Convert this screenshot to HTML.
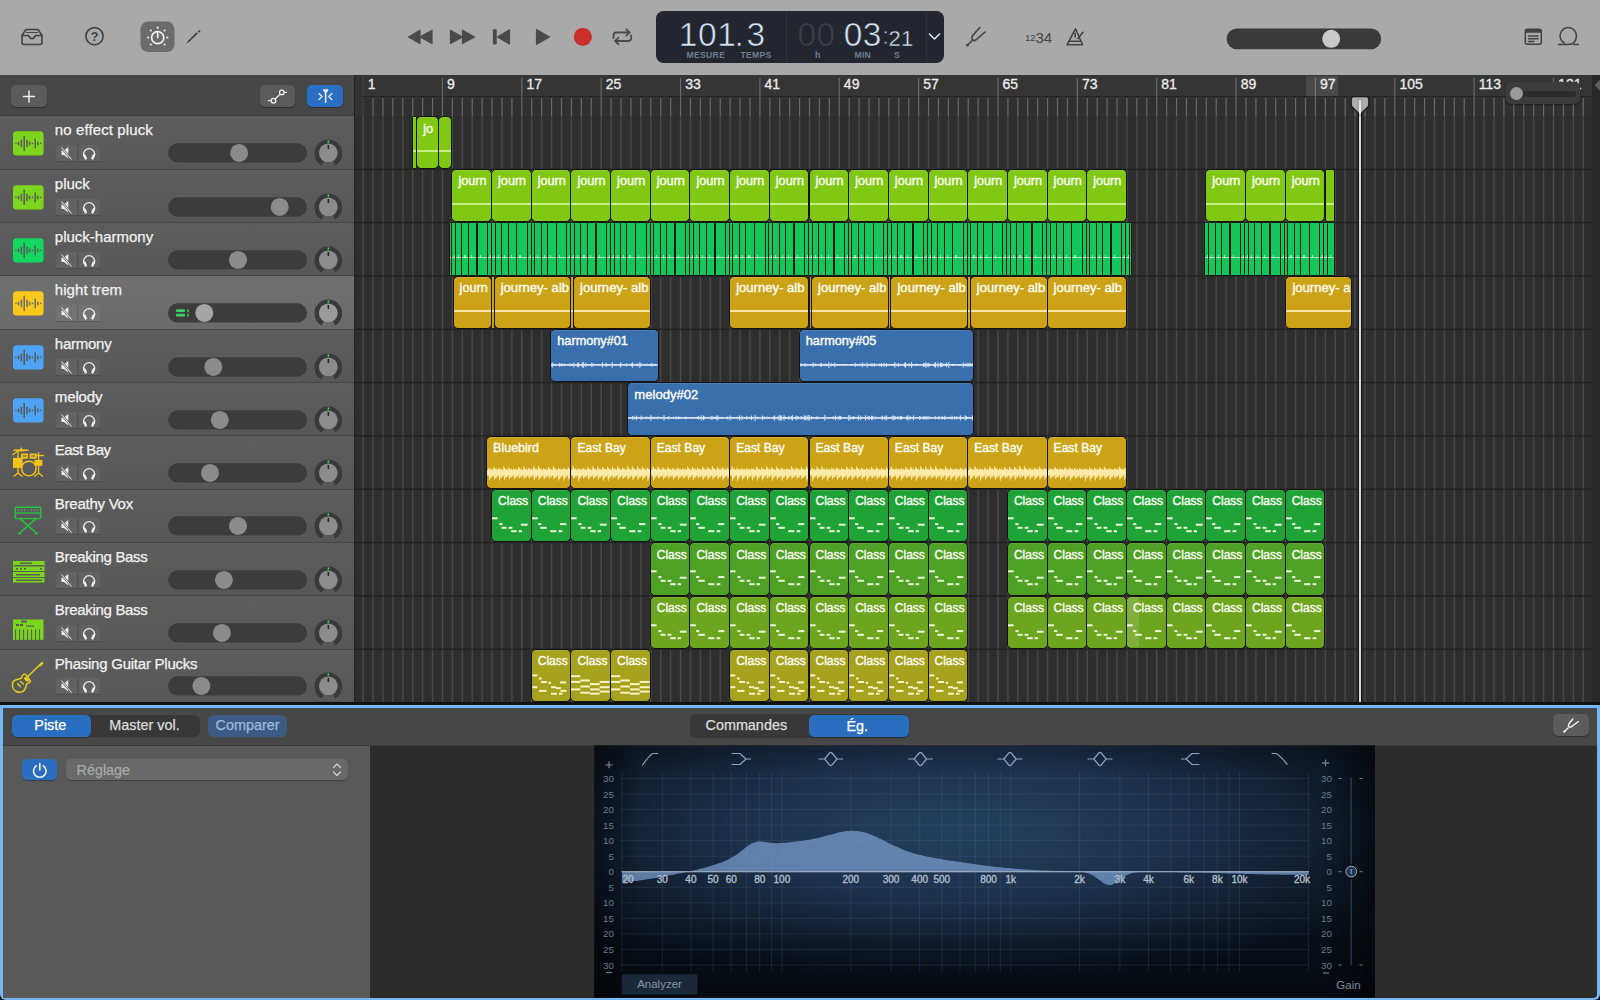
<!DOCTYPE html>
<html><head><meta charset="utf-8"><style>
html,body{margin:0;padding:0;width:1600px;height:1000px;overflow:hidden;background:#151515}
body{position:relative;font-family:"Liberation Sans", sans-serif}
svg text{font-family:"Liberation Sans",sans-serif}
</style></head><body>
<div style="position:absolute;left:0.00px;top:0.00px;width:1600.00px;height:75.00px;background:#a9a9a9"></div>
<svg style="position:absolute;left:0;top:0" width="1600" height="75" viewBox="0 0 1600 75">
<g fill="none" stroke="#424242" stroke-width="1.6" stroke-linecap="round" stroke-linejoin="round">
 <path d="M22 35.5 L26 29.5 H38 L42 35.5 V42.5 Q42 44.5 40 44.5 H24 Q22 44.5 22 42.5 Z"/>
 <path d="M22 35.5 H28.5 L30.5 38.5 H33.5 L35.5 35.5 H42"/>
 <path d="M26.5 32.5 H37.5" stroke-width="1.2"/>
 <circle cx="94.5" cy="36.2" r="8.6"/>
</g>
<text x="94.6" y="40.9" font-family="Liberation Sans" font-size="12.5" font-weight="700" fill="#424242" text-anchor="middle">?</text>
<rect x="140.5" y="21.5" width="34" height="30.5" rx="7.5" fill="#6b6b6b"/>
<g fill="none" stroke="#f2f2f2" stroke-width="1.7" stroke-linecap="round">
 <circle cx="157.7" cy="37.6" r="6.1"/>
 <path d="M157.7 31.8 V37.4"/>
</g>
<g fill="#f2f2f2">
 <circle cx="157.7" cy="27.7" r="1.1"/><circle cx="164.6" cy="30.5" r="1.1"/><circle cx="167.3" cy="37.5" r="1.1"/><circle cx="164.6" cy="44.5" r="1.1"/>
 <circle cx="150.8" cy="30.5" r="1.1"/><circle cx="148.1" cy="37.5" r="1.1"/><circle cx="150.8" cy="44.5" r="1.1"/>
</g>
<path d="M186.2 43.8 L188.2 40.6 L196.6 32.2 L197.8 33.4 L189.4 41.8 Z" fill="#424242"/>
<path d="M197.9 31.3 L198.6 30.6 Q199.4 29.9 200.1 30.6 Q200.8 31.3 200.1 32 L199.3 32.7 Z" fill="#424242"/>
<!-- transport -->
<g fill="#4a4a4a" stroke="#4a4a4a" stroke-width="1.2" stroke-linejoin="round">
 <path d="M408.5 36.9 L420 30.2 V43.6 Z"/><path d="M420 36.9 L432 30.2 V43.6 Z"/>
 <path d="M450.5 30.2 L462.5 36.9 L450.5 43.6 Z"/><path d="M462.5 30.2 L474.5 36.9 L462.5 43.6 Z"/>
 <rect x="493.5" y="29.8" width="2.6" height="14" rx="0.6"/><path d="M497.5 36.9 L509.5 29.8 V44 Z"/>
 <path d="M536.5 29.6 L549.5 36.9 L536.5 44.2 Z"/>
</g>
<circle cx="582.8" cy="36.9" r="9.1" fill="#c9302b"/>
<g fill="none" stroke="#4a4a4a" stroke-width="1.8" stroke-linecap="round" stroke-linejoin="round">
 <path d="M613.5 38 V35.5 Q613.5 32.5 616.5 32.5 H629.5"/><path d="M626.3 29.3 L629.5 32.5 L626.3 35.7"/>
 <path d="M631.2 35.5 V38 Q631.2 41 628.2 41 H615.2"/><path d="M618.4 37.8 L615.2 41 L618.4 44.2"/>
</g>
<!-- right icons -->
<g fill="none" stroke="#424242" stroke-width="1.6" stroke-linecap="round" stroke-linejoin="round">
 <path d="M967.5 45 L972 40.8"/>
 <path d="M979.8 27.5 L972.5 35.8 Q971.5 37.2 972.2 39.2 Q973.4 41.5 975.8 40 L985 32"/>
 <path d="M1067 44.8 L1075.5 28.8 L1082.5 44.8 Z"/>
 <path d="M1069 41.2 H1080.8"/>
 <path d="M1075.2 37 V33.5"/><path d="M1078 38.5 L1083 32.3"/>
</g>
<circle cx="967.3" cy="45.2" r="1.4" fill="#424242"/>
<text x="1025" y="40.5" font-family="Liberation Sans" font-size="9.5" fill="#424242">12</text>
<text x="1035.5" y="42.7" font-family="Liberation Sans" font-size="15" fill="#424242">34</text>
<rect x="1226.6" y="28.4" width="154.6" height="20.8" rx="10.4" fill="#3a3a3a"/>
<circle cx="1331.2" cy="38.8" r="9" fill="#c9c9c9"/>
<g fill="none" stroke="#424242" stroke-width="1.5" stroke-linejoin="round" stroke-linecap="round">
 <rect x="1525.3" y="29.2" width="16" height="15" rx="2"/>
 <path d="M1528.5 36 H1538 M1528.5 38.8 H1538 M1528.5 41.5 H1534"/>
 <path d="M1558.6 44.6 H1567.5 Q1576.4 44.6 1576.4 35.8 A8.2 8.2 0 1 0 1564.3 43"/>
 <path d="M1573.6 44.6 H1578.4"/>
</g>
<rect x="1525.3" y="29.2" width="16" height="3.5" rx="1" fill="#424242"/>
</svg>
<div style="position:absolute;left:656.40px;top:10.80px;width:287.40px;height:51.90px;background:#23262f;border-radius:7.5px"></div>
<div style="position:absolute;left:786.20px;top:12.00px;width:1.00px;height:49.50px;background:#2f323b"></div>
<div style="position:absolute;left:925.50px;top:12.00px;width:1.00px;height:49.50px;background:#2f323b"></div>
<svg style="position:absolute;left:0;top:0" width="1600" height="75"><text x="678.8" y="45.8" font-family="Liberation Sans" font-size="33.5" letter-spacing="0.6" fill="#d4e5f7" stroke="#23262f" stroke-width="0.6">101</text><text x="734.5" y="45.8" font-family="Liberation Sans" font-size="33.5" letter-spacing="0" fill="#d4e5f7" stroke="#23262f" stroke-width="0.6">.</text><text x="746.5" y="45.8" font-family="Liberation Sans" font-size="33.5" letter-spacing="0" fill="#d4e5f7" stroke="#23262f" stroke-width="0.6">3</text><text x="797.5" y="45.8" font-family="Liberation Sans" font-size="33.5" letter-spacing="0.3" fill="#3b3f4a" stroke="#23262f" stroke-width="0.6">00</text><text x="837.8" y="43.5" font-family="Liberation Sans" font-size="24" letter-spacing="0" fill="#3b3f4a" stroke="#23262f" stroke-width="0.8">:</text><text x="843.8" y="45.8" font-family="Liberation Sans" font-size="33.5" letter-spacing="0.3" fill="#d4e5f7" stroke="#23262f" stroke-width="0.6">03</text><text x="882.3" y="43.5" font-family="Liberation Sans" font-size="24" letter-spacing="0" fill="#d4e5f7" stroke="#23262f" stroke-width="0.8">:</text><text x="888.5" y="45.8" font-family="Liberation Sans" font-size="22" letter-spacing="0.2" fill="#d4e5f7" stroke="#23262f" stroke-width="0.4">21</text></svg>
<div style="position:absolute;left:686.60px;top:50.82px;font-size:8.6px;line-height:9.89px;height:9.89px;color:#6e7d92;font-weight:700;white-space:nowrap;letter-spacing:0.3px">MESURE</div>
<div style="position:absolute;left:740.50px;top:50.82px;font-size:8.6px;line-height:9.89px;height:9.89px;color:#6e7d92;font-weight:700;white-space:nowrap;letter-spacing:0.3px">TEMPS</div>
<div style="position:absolute;left:815.00px;top:50.45px;font-size:9px;line-height:10.35px;height:10.35px;color:#6e7d92;font-weight:700;white-space:nowrap;">h</div>
<div style="position:absolute;left:854.60px;top:50.82px;font-size:8.6px;line-height:9.89px;height:9.89px;color:#6e7d92;font-weight:700;white-space:nowrap;letter-spacing:0.2px">MIN</div>
<div style="position:absolute;left:894.00px;top:50.82px;font-size:8.6px;line-height:9.89px;height:9.89px;color:#6e7d92;font-weight:700;white-space:nowrap;">S</div>
<svg style="position:absolute;left:928px;top:32px" width="14" height="10"><path d="M1.5 2 L6.5 7 L11.5 2" fill="none" stroke="#d4e5f7" stroke-width="1.6" stroke-linecap="round" stroke-linejoin="round"/></svg>
<div style="position:absolute;left:0.00px;top:75.00px;width:354.20px;height:41.30px;background:#474747"></div>
<div style="position:absolute;left:11.00px;top:84.60px;width:35.60px;height:22.20px;background:#5b5b5b;border-radius:5px;box-shadow:0 1px 1px rgba(0,0,0,0.35)"></div>
<svg style="position:absolute;left:11px;top:84.6px" width="36" height="22"><path d="M12.5 11.4 H23.5 M18 5.9 V16.9" stroke="#f0f0f0" stroke-width="1.5" stroke-linecap="round"/></svg>
<div style="position:absolute;left:260.30px;top:84.60px;width:35.20px;height:22.20px;background:#5b5b5b;border-radius:5px;box-shadow:0 1px 1px rgba(0,0,0,0.35)"></div>
<svg style="position:absolute;left:260.3px;top:84.6px" width="36" height="22"><g fill="none" stroke="#f0f0f0" stroke-width="1.3">
<path d="M8 15.7 H10.9 M24.3 7.4 H27"/><circle cx="13.5" cy="15.7" r="2.3"/><circle cx="21.8" cy="7.4" r="2.3"/><path d="M15.1 14 L20.2 9.1"/></g></svg>
<div style="position:absolute;left:306.90px;top:84.60px;width:36.10px;height:22.20px;background:#2a6fc1;border-radius:5px;box-shadow:0 1px 1px rgba(0,0,0,0.35)"></div>
<svg style="position:absolute;left:306.9px;top:84.6px" width="36" height="22"><g fill="none" stroke="#f0f0f0" stroke-width="1.3" stroke-linecap="round">
<path d="M12 8.5 L15 11.5 L12 14.5 M24.8 8.5 L21.8 11.5 L24.8 14.5"/></g>
<path d="M16.2 4.3 H21.2 V5.8 L19.4 7.8 V18 H17.9 V7.8 L16.2 5.8 Z" fill="#f0f0f0"/></svg>
<div style="position:absolute;left:354.20px;top:75.00px;width:1245.80px;height:21.00px;background:#353535"></div>
<div style="position:absolute;left:354.20px;top:96.00px;width:1245.80px;height:1.20px;background:#252525"></div>
<div style="position:absolute;left:354.20px;top:97.20px;width:1245.80px;height:19.10px;background:#303030"></div>
<div style="position:absolute;left:354.20px;top:115.60px;width:1245.80px;height:1.00px;background:#242424"></div>
<div style="position:absolute;left:354.20px;top:75.00px;width:8.00px;height:41.30px;background:#323232"></div>
<svg style="position:absolute;left:0;top:0" width="1600" height="117">
<rect x="362.60" y="77" width="1" height="1" fill="#585858"/>
<rect x="362.60" y="79" width="1" height="1" fill="#585858"/>
<rect x="362.60" y="81" width="1" height="1" fill="#585858"/>
<rect x="362.60" y="83" width="1" height="1" fill="#585858"/>
<rect x="362.60" y="85" width="1" height="1" fill="#585858"/>
<rect x="362.60" y="87" width="1" height="1" fill="#585858"/>
<rect x="362.60" y="89" width="1" height="1" fill="#585858"/>
<rect x="362.60" y="91" width="1" height="1" fill="#585858"/>
<rect x="362.60" y="93" width="1" height="1" fill="#585858"/>
<rect x="362.60" y="95" width="1" height="1" fill="#585858"/>
<rect x="362.60" y="97" width="1" height="1" fill="#585858"/>
<rect x="362.60" y="99" width="1" height="1" fill="#585858"/>
<rect x="362.60" y="101" width="1" height="1" fill="#585858"/>
<rect x="362.60" y="103" width="1" height="1" fill="#585858"/>
<rect x="362.60" y="105" width="1" height="1" fill="#585858"/>
<rect x="362.60" y="107" width="1" height="1" fill="#585858"/>
<rect x="362.60" y="109" width="1" height="1" fill="#585858"/>
<rect x="362.60" y="111" width="1" height="1" fill="#585858"/>
<rect x="362.60" y="113" width="1" height="1" fill="#585858"/>
<rect x="362.60" y="115" width="1" height="1" fill="#585858"/>
<text x="367.70" y="89.3" font-family="Liberation Sans" font-size="14" fill="#ececec" stroke="#ececec" stroke-width="0.3">1</text>
<rect x="372.42" y="98" width="1.2" height="18" fill="#6a6a6a"/>
<rect x="382.34" y="98" width="1.2" height="18" fill="#6a6a6a"/>
<rect x="392.26" y="98" width="1.2" height="18" fill="#6a6a6a"/>
<rect x="402.18" y="98" width="1.2" height="18" fill="#6a6a6a"/>
<rect x="412.10" y="98" width="1.2" height="18" fill="#6a6a6a"/>
<rect x="422.02" y="98" width="1.2" height="18" fill="#6a6a6a"/>
<rect x="431.94" y="98" width="1.2" height="18" fill="#6a6a6a"/>
<rect x="441.86" y="78" width="1.2" height="38.5" fill="#6a6a6a"/>
<text x="447.06" y="89.3" font-family="Liberation Sans" font-size="14" fill="#ececec" stroke="#ececec" stroke-width="0.3">9</text>
<rect x="451.78" y="98" width="1.2" height="18" fill="#6a6a6a"/>
<rect x="461.70" y="98" width="1.2" height="18" fill="#6a6a6a"/>
<rect x="471.62" y="98" width="1.2" height="18" fill="#6a6a6a"/>
<rect x="481.54" y="98" width="1.2" height="18" fill="#6a6a6a"/>
<rect x="491.46" y="98" width="1.2" height="18" fill="#6a6a6a"/>
<rect x="501.38" y="98" width="1.2" height="18" fill="#6a6a6a"/>
<rect x="511.30" y="98" width="1.2" height="18" fill="#6a6a6a"/>
<rect x="521.22" y="78" width="1.2" height="38.5" fill="#6a6a6a"/>
<text x="526.42" y="89.3" font-family="Liberation Sans" font-size="14" fill="#ececec" stroke="#ececec" stroke-width="0.3">17</text>
<rect x="531.14" y="98" width="1.2" height="18" fill="#6a6a6a"/>
<rect x="541.06" y="98" width="1.2" height="18" fill="#6a6a6a"/>
<rect x="550.98" y="98" width="1.2" height="18" fill="#6a6a6a"/>
<rect x="560.90" y="98" width="1.2" height="18" fill="#6a6a6a"/>
<rect x="570.82" y="98" width="1.2" height="18" fill="#6a6a6a"/>
<rect x="580.74" y="98" width="1.2" height="18" fill="#6a6a6a"/>
<rect x="590.66" y="98" width="1.2" height="18" fill="#6a6a6a"/>
<rect x="600.58" y="78" width="1.2" height="38.5" fill="#6a6a6a"/>
<text x="605.78" y="89.3" font-family="Liberation Sans" font-size="14" fill="#ececec" stroke="#ececec" stroke-width="0.3">25</text>
<rect x="610.50" y="98" width="1.2" height="18" fill="#6a6a6a"/>
<rect x="620.42" y="98" width="1.2" height="18" fill="#6a6a6a"/>
<rect x="630.34" y="98" width="1.2" height="18" fill="#6a6a6a"/>
<rect x="640.26" y="98" width="1.2" height="18" fill="#6a6a6a"/>
<rect x="650.18" y="98" width="1.2" height="18" fill="#6a6a6a"/>
<rect x="660.10" y="98" width="1.2" height="18" fill="#6a6a6a"/>
<rect x="670.02" y="98" width="1.2" height="18" fill="#6a6a6a"/>
<rect x="679.94" y="78" width="1.2" height="38.5" fill="#6a6a6a"/>
<text x="685.14" y="89.3" font-family="Liberation Sans" font-size="14" fill="#ececec" stroke="#ececec" stroke-width="0.3">33</text>
<rect x="689.86" y="98" width="1.2" height="18" fill="#6a6a6a"/>
<rect x="699.78" y="98" width="1.2" height="18" fill="#6a6a6a"/>
<rect x="709.70" y="98" width="1.2" height="18" fill="#6a6a6a"/>
<rect x="719.62" y="98" width="1.2" height="18" fill="#6a6a6a"/>
<rect x="729.54" y="98" width="1.2" height="18" fill="#6a6a6a"/>
<rect x="739.46" y="98" width="1.2" height="18" fill="#6a6a6a"/>
<rect x="749.38" y="98" width="1.2" height="18" fill="#6a6a6a"/>
<rect x="759.30" y="78" width="1.2" height="38.5" fill="#6a6a6a"/>
<text x="764.50" y="89.3" font-family="Liberation Sans" font-size="14" fill="#ececec" stroke="#ececec" stroke-width="0.3">41</text>
<rect x="769.22" y="98" width="1.2" height="18" fill="#6a6a6a"/>
<rect x="779.14" y="98" width="1.2" height="18" fill="#6a6a6a"/>
<rect x="789.06" y="98" width="1.2" height="18" fill="#6a6a6a"/>
<rect x="798.98" y="98" width="1.2" height="18" fill="#6a6a6a"/>
<rect x="808.90" y="98" width="1.2" height="18" fill="#6a6a6a"/>
<rect x="818.82" y="98" width="1.2" height="18" fill="#6a6a6a"/>
<rect x="828.74" y="98" width="1.2" height="18" fill="#6a6a6a"/>
<rect x="838.66" y="78" width="1.2" height="38.5" fill="#6a6a6a"/>
<text x="843.86" y="89.3" font-family="Liberation Sans" font-size="14" fill="#ececec" stroke="#ececec" stroke-width="0.3">49</text>
<rect x="848.58" y="98" width="1.2" height="18" fill="#6a6a6a"/>
<rect x="858.50" y="98" width="1.2" height="18" fill="#6a6a6a"/>
<rect x="868.42" y="98" width="1.2" height="18" fill="#6a6a6a"/>
<rect x="878.34" y="98" width="1.2" height="18" fill="#6a6a6a"/>
<rect x="888.26" y="98" width="1.2" height="18" fill="#6a6a6a"/>
<rect x="898.18" y="98" width="1.2" height="18" fill="#6a6a6a"/>
<rect x="908.10" y="98" width="1.2" height="18" fill="#6a6a6a"/>
<rect x="918.02" y="78" width="1.2" height="38.5" fill="#6a6a6a"/>
<text x="923.22" y="89.3" font-family="Liberation Sans" font-size="14" fill="#ececec" stroke="#ececec" stroke-width="0.3">57</text>
<rect x="927.94" y="98" width="1.2" height="18" fill="#6a6a6a"/>
<rect x="937.86" y="98" width="1.2" height="18" fill="#6a6a6a"/>
<rect x="947.78" y="98" width="1.2" height="18" fill="#6a6a6a"/>
<rect x="957.70" y="98" width="1.2" height="18" fill="#6a6a6a"/>
<rect x="967.62" y="98" width="1.2" height="18" fill="#6a6a6a"/>
<rect x="977.54" y="98" width="1.2" height="18" fill="#6a6a6a"/>
<rect x="987.46" y="98" width="1.2" height="18" fill="#6a6a6a"/>
<rect x="997.38" y="78" width="1.2" height="38.5" fill="#6a6a6a"/>
<text x="1002.58" y="89.3" font-family="Liberation Sans" font-size="14" fill="#ececec" stroke="#ececec" stroke-width="0.3">65</text>
<rect x="1007.30" y="98" width="1.2" height="18" fill="#6a6a6a"/>
<rect x="1017.22" y="98" width="1.2" height="18" fill="#6a6a6a"/>
<rect x="1027.14" y="98" width="1.2" height="18" fill="#6a6a6a"/>
<rect x="1037.06" y="98" width="1.2" height="18" fill="#6a6a6a"/>
<rect x="1046.98" y="98" width="1.2" height="18" fill="#6a6a6a"/>
<rect x="1056.90" y="98" width="1.2" height="18" fill="#6a6a6a"/>
<rect x="1066.82" y="98" width="1.2" height="18" fill="#6a6a6a"/>
<rect x="1076.74" y="78" width="1.2" height="38.5" fill="#6a6a6a"/>
<text x="1081.94" y="89.3" font-family="Liberation Sans" font-size="14" fill="#ececec" stroke="#ececec" stroke-width="0.3">73</text>
<rect x="1086.66" y="98" width="1.2" height="18" fill="#6a6a6a"/>
<rect x="1096.58" y="98" width="1.2" height="18" fill="#6a6a6a"/>
<rect x="1106.50" y="98" width="1.2" height="18" fill="#6a6a6a"/>
<rect x="1116.42" y="98" width="1.2" height="18" fill="#6a6a6a"/>
<rect x="1126.34" y="98" width="1.2" height="18" fill="#6a6a6a"/>
<rect x="1136.26" y="98" width="1.2" height="18" fill="#6a6a6a"/>
<rect x="1146.18" y="98" width="1.2" height="18" fill="#6a6a6a"/>
<rect x="1156.10" y="78" width="1.2" height="38.5" fill="#6a6a6a"/>
<text x="1161.30" y="89.3" font-family="Liberation Sans" font-size="14" fill="#ececec" stroke="#ececec" stroke-width="0.3">81</text>
<rect x="1166.02" y="98" width="1.2" height="18" fill="#6a6a6a"/>
<rect x="1175.94" y="98" width="1.2" height="18" fill="#6a6a6a"/>
<rect x="1185.86" y="98" width="1.2" height="18" fill="#6a6a6a"/>
<rect x="1195.78" y="98" width="1.2" height="18" fill="#6a6a6a"/>
<rect x="1205.70" y="98" width="1.2" height="18" fill="#6a6a6a"/>
<rect x="1215.62" y="98" width="1.2" height="18" fill="#6a6a6a"/>
<rect x="1225.54" y="98" width="1.2" height="18" fill="#6a6a6a"/>
<rect x="1235.46" y="78" width="1.2" height="38.5" fill="#6a6a6a"/>
<text x="1240.66" y="89.3" font-family="Liberation Sans" font-size="14" fill="#ececec" stroke="#ececec" stroke-width="0.3">89</text>
<rect x="1245.38" y="98" width="1.2" height="18" fill="#6a6a6a"/>
<rect x="1255.30" y="98" width="1.2" height="18" fill="#6a6a6a"/>
<rect x="1265.22" y="98" width="1.2" height="18" fill="#6a6a6a"/>
<rect x="1275.14" y="98" width="1.2" height="18" fill="#6a6a6a"/>
<rect x="1285.06" y="98" width="1.2" height="18" fill="#6a6a6a"/>
<rect x="1294.98" y="98" width="1.2" height="18" fill="#6a6a6a"/>
<rect x="1304.90" y="98" width="1.2" height="18" fill="#6a6a6a"/>
<rect x="1314.82" y="78" width="1.2" height="38.5" fill="#6a6a6a"/>
<text x="1320.02" y="89.3" font-family="Liberation Sans" font-size="14" fill="#ececec" stroke="#ececec" stroke-width="0.3">97</text>
<rect x="1324.74" y="98" width="1.2" height="18" fill="#6a6a6a"/>
<rect x="1334.66" y="98" width="1.2" height="18" fill="#6a6a6a"/>
<rect x="1344.58" y="98" width="1.2" height="18" fill="#6a6a6a"/>
<rect x="1354.50" y="98" width="1.2" height="18" fill="#6a6a6a"/>
<rect x="1364.42" y="98" width="1.2" height="18" fill="#6a6a6a"/>
<rect x="1374.34" y="98" width="1.2" height="18" fill="#6a6a6a"/>
<rect x="1384.26" y="98" width="1.2" height="18" fill="#6a6a6a"/>
<rect x="1394.18" y="78" width="1.2" height="38.5" fill="#6a6a6a"/>
<text x="1399.38" y="89.3" font-family="Liberation Sans" font-size="14" fill="#ececec" stroke="#ececec" stroke-width="0.3">105</text>
<rect x="1404.10" y="98" width="1.2" height="18" fill="#6a6a6a"/>
<rect x="1414.02" y="98" width="1.2" height="18" fill="#6a6a6a"/>
<rect x="1423.94" y="98" width="1.2" height="18" fill="#6a6a6a"/>
<rect x="1433.86" y="98" width="1.2" height="18" fill="#6a6a6a"/>
<rect x="1443.78" y="98" width="1.2" height="18" fill="#6a6a6a"/>
<rect x="1453.70" y="98" width="1.2" height="18" fill="#6a6a6a"/>
<rect x="1463.62" y="98" width="1.2" height="18" fill="#6a6a6a"/>
<rect x="1473.54" y="78" width="1.2" height="38.5" fill="#6a6a6a"/>
<text x="1478.74" y="89.3" font-family="Liberation Sans" font-size="14" fill="#ececec" stroke="#ececec" stroke-width="0.3">113</text>
<rect x="1483.46" y="98" width="1.2" height="18" fill="#6a6a6a"/>
<rect x="1493.38" y="98" width="1.2" height="18" fill="#6a6a6a"/>
<rect x="1503.30" y="98" width="1.2" height="18" fill="#6a6a6a"/>
<rect x="1513.22" y="98" width="1.2" height="18" fill="#6a6a6a"/>
<rect x="1523.14" y="98" width="1.2" height="18" fill="#6a6a6a"/>
<rect x="1533.06" y="98" width="1.2" height="18" fill="#6a6a6a"/>
<rect x="1542.98" y="98" width="1.2" height="18" fill="#6a6a6a"/>
<rect x="1552.90" y="78" width="1.2" height="38.5" fill="#6a6a6a"/>
<text x="1558.10" y="89.3" font-family="Liberation Sans" font-size="14" fill="#ececec" stroke="#ececec" stroke-width="0.3">121</text>
<rect x="1562.82" y="98" width="1.2" height="18" fill="#6a6a6a"/>
<rect x="1572.74" y="98" width="1.2" height="18" fill="#6a6a6a"/>
<rect x="1582.66" y="98" width="1.2" height="18" fill="#6a6a6a"/>
</svg>
<div style="position:absolute;left:1305.92px;top:76.00px;width:32.50px;height:20.00px;background:rgba(255,255,255,0.10)"></div>
<div style="position:absolute;left:1506.00px;top:82.30px;width:73.80px;height:21.70px;background:#3c3c3c;border-radius:5px;box-shadow:0 1px 2px rgba(0,0,0,0.4)"></div>
<div style="position:absolute;left:1512.00px;top:91.00px;width:63.80px;height:5.50px;background:#2c2c2c;border-radius:3px"></div>
<div style="position:absolute;left:1509.80px;top:87.00px;width:13.00px;height:13.00px;background:#999;border-radius:50%"></div>
<div style="position:absolute;left:1592.20px;top:75.00px;width:7.80px;height:627.50px;background:#282828"></div>
<svg style="position:absolute;left:1590px;top:78px" width="10" height="14"><path d="M4.5 7 L10 1.5 V12.5 Z" fill="#5e5e5e"/></svg>
<div style="position:absolute;left:354.20px;top:115.90px;width:1238.00px;height:586.60px;background:#2e2e2e"></div>
<svg style="position:absolute;left:0;top:115.93px" width="1592" height="587">
<rect x="362.35" y="0" width="1.5" height="586.2" fill="#4a4a4a"/>
<rect x="372.27" y="0" width="1.5" height="586.2" fill="#464646"/>
<rect x="382.19" y="0" width="1.5" height="586.2" fill="#464646"/>
<rect x="392.11" y="0" width="1.5" height="586.2" fill="#464646"/>
<rect x="402.03" y="0" width="1.5" height="586.2" fill="#464646"/>
<rect x="411.95" y="0" width="1.5" height="586.2" fill="#464646"/>
<rect x="421.87" y="0" width="1.5" height="586.2" fill="#464646"/>
<rect x="431.79" y="0" width="1.5" height="586.2" fill="#464646"/>
<rect x="441.71" y="0" width="1.5" height="586.2" fill="#4a4a4a"/>
<rect x="451.63" y="0" width="1.5" height="586.2" fill="#464646"/>
<rect x="461.55" y="0" width="1.5" height="586.2" fill="#464646"/>
<rect x="471.47" y="0" width="1.5" height="586.2" fill="#464646"/>
<rect x="481.39" y="0" width="1.5" height="586.2" fill="#464646"/>
<rect x="491.31" y="0" width="1.5" height="586.2" fill="#464646"/>
<rect x="501.23" y="0" width="1.5" height="586.2" fill="#464646"/>
<rect x="511.15" y="0" width="1.5" height="586.2" fill="#464646"/>
<rect x="521.07" y="0" width="1.5" height="586.2" fill="#4a4a4a"/>
<rect x="530.99" y="0" width="1.5" height="586.2" fill="#464646"/>
<rect x="540.91" y="0" width="1.5" height="586.2" fill="#464646"/>
<rect x="550.83" y="0" width="1.5" height="586.2" fill="#464646"/>
<rect x="560.75" y="0" width="1.5" height="586.2" fill="#464646"/>
<rect x="570.67" y="0" width="1.5" height="586.2" fill="#464646"/>
<rect x="580.59" y="0" width="1.5" height="586.2" fill="#464646"/>
<rect x="590.51" y="0" width="1.5" height="586.2" fill="#464646"/>
<rect x="600.43" y="0" width="1.5" height="586.2" fill="#4a4a4a"/>
<rect x="610.35" y="0" width="1.5" height="586.2" fill="#464646"/>
<rect x="620.27" y="0" width="1.5" height="586.2" fill="#464646"/>
<rect x="630.19" y="0" width="1.5" height="586.2" fill="#464646"/>
<rect x="640.11" y="0" width="1.5" height="586.2" fill="#464646"/>
<rect x="650.03" y="0" width="1.5" height="586.2" fill="#464646"/>
<rect x="659.95" y="0" width="1.5" height="586.2" fill="#464646"/>
<rect x="669.87" y="0" width="1.5" height="586.2" fill="#464646"/>
<rect x="679.79" y="0" width="1.5" height="586.2" fill="#4a4a4a"/>
<rect x="689.71" y="0" width="1.5" height="586.2" fill="#464646"/>
<rect x="699.63" y="0" width="1.5" height="586.2" fill="#464646"/>
<rect x="709.55" y="0" width="1.5" height="586.2" fill="#464646"/>
<rect x="719.47" y="0" width="1.5" height="586.2" fill="#464646"/>
<rect x="729.39" y="0" width="1.5" height="586.2" fill="#464646"/>
<rect x="739.31" y="0" width="1.5" height="586.2" fill="#464646"/>
<rect x="749.23" y="0" width="1.5" height="586.2" fill="#464646"/>
<rect x="759.15" y="0" width="1.5" height="586.2" fill="#4a4a4a"/>
<rect x="769.07" y="0" width="1.5" height="586.2" fill="#464646"/>
<rect x="778.99" y="0" width="1.5" height="586.2" fill="#464646"/>
<rect x="788.91" y="0" width="1.5" height="586.2" fill="#464646"/>
<rect x="798.83" y="0" width="1.5" height="586.2" fill="#464646"/>
<rect x="808.75" y="0" width="1.5" height="586.2" fill="#464646"/>
<rect x="818.67" y="0" width="1.5" height="586.2" fill="#464646"/>
<rect x="828.59" y="0" width="1.5" height="586.2" fill="#464646"/>
<rect x="838.51" y="0" width="1.5" height="586.2" fill="#4a4a4a"/>
<rect x="848.43" y="0" width="1.5" height="586.2" fill="#464646"/>
<rect x="858.35" y="0" width="1.5" height="586.2" fill="#464646"/>
<rect x="868.27" y="0" width="1.5" height="586.2" fill="#464646"/>
<rect x="878.19" y="0" width="1.5" height="586.2" fill="#464646"/>
<rect x="888.11" y="0" width="1.5" height="586.2" fill="#464646"/>
<rect x="898.03" y="0" width="1.5" height="586.2" fill="#464646"/>
<rect x="907.95" y="0" width="1.5" height="586.2" fill="#464646"/>
<rect x="917.87" y="0" width="1.5" height="586.2" fill="#4a4a4a"/>
<rect x="927.79" y="0" width="1.5" height="586.2" fill="#464646"/>
<rect x="937.71" y="0" width="1.5" height="586.2" fill="#464646"/>
<rect x="947.63" y="0" width="1.5" height="586.2" fill="#464646"/>
<rect x="957.55" y="0" width="1.5" height="586.2" fill="#464646"/>
<rect x="967.47" y="0" width="1.5" height="586.2" fill="#464646"/>
<rect x="977.39" y="0" width="1.5" height="586.2" fill="#464646"/>
<rect x="987.31" y="0" width="1.5" height="586.2" fill="#464646"/>
<rect x="997.23" y="0" width="1.5" height="586.2" fill="#4a4a4a"/>
<rect x="1007.15" y="0" width="1.5" height="586.2" fill="#464646"/>
<rect x="1017.07" y="0" width="1.5" height="586.2" fill="#464646"/>
<rect x="1026.99" y="0" width="1.5" height="586.2" fill="#464646"/>
<rect x="1036.91" y="0" width="1.5" height="586.2" fill="#464646"/>
<rect x="1046.83" y="0" width="1.5" height="586.2" fill="#464646"/>
<rect x="1056.75" y="0" width="1.5" height="586.2" fill="#464646"/>
<rect x="1066.67" y="0" width="1.5" height="586.2" fill="#464646"/>
<rect x="1076.59" y="0" width="1.5" height="586.2" fill="#4a4a4a"/>
<rect x="1086.51" y="0" width="1.5" height="586.2" fill="#464646"/>
<rect x="1096.43" y="0" width="1.5" height="586.2" fill="#464646"/>
<rect x="1106.35" y="0" width="1.5" height="586.2" fill="#464646"/>
<rect x="1116.27" y="0" width="1.5" height="586.2" fill="#464646"/>
<rect x="1126.19" y="0" width="1.5" height="586.2" fill="#464646"/>
<rect x="1136.11" y="0" width="1.5" height="586.2" fill="#464646"/>
<rect x="1146.03" y="0" width="1.5" height="586.2" fill="#464646"/>
<rect x="1155.95" y="0" width="1.5" height="586.2" fill="#4a4a4a"/>
<rect x="1165.87" y="0" width="1.5" height="586.2" fill="#464646"/>
<rect x="1175.79" y="0" width="1.5" height="586.2" fill="#464646"/>
<rect x="1185.71" y="0" width="1.5" height="586.2" fill="#464646"/>
<rect x="1195.63" y="0" width="1.5" height="586.2" fill="#464646"/>
<rect x="1205.55" y="0" width="1.5" height="586.2" fill="#464646"/>
<rect x="1215.47" y="0" width="1.5" height="586.2" fill="#464646"/>
<rect x="1225.39" y="0" width="1.5" height="586.2" fill="#464646"/>
<rect x="1235.31" y="0" width="1.5" height="586.2" fill="#4a4a4a"/>
<rect x="1245.23" y="0" width="1.5" height="586.2" fill="#464646"/>
<rect x="1255.15" y="0" width="1.5" height="586.2" fill="#464646"/>
<rect x="1265.07" y="0" width="1.5" height="586.2" fill="#464646"/>
<rect x="1274.99" y="0" width="1.5" height="586.2" fill="#464646"/>
<rect x="1284.91" y="0" width="1.5" height="586.2" fill="#464646"/>
<rect x="1294.83" y="0" width="1.5" height="586.2" fill="#464646"/>
<rect x="1304.75" y="0" width="1.5" height="586.2" fill="#464646"/>
<rect x="1314.67" y="0" width="1.5" height="586.2" fill="#4a4a4a"/>
<rect x="1324.59" y="0" width="1.5" height="586.2" fill="#464646"/>
<rect x="1334.51" y="0" width="1.5" height="586.2" fill="#464646"/>
<rect x="1344.43" y="0" width="1.5" height="586.2" fill="#464646"/>
<rect x="1354.35" y="0" width="1.5" height="586.2" fill="#464646"/>
<rect x="1364.27" y="0" width="1.5" height="586.2" fill="#464646"/>
<rect x="1374.19" y="0" width="1.5" height="586.2" fill="#464646"/>
<rect x="1384.11" y="0" width="1.5" height="586.2" fill="#464646"/>
<rect x="1394.03" y="0" width="1.5" height="586.2" fill="#4a4a4a"/>
<rect x="1403.95" y="0" width="1.5" height="586.2" fill="#464646"/>
<rect x="1413.87" y="0" width="1.5" height="586.2" fill="#464646"/>
<rect x="1423.79" y="0" width="1.5" height="586.2" fill="#464646"/>
<rect x="1433.71" y="0" width="1.5" height="586.2" fill="#464646"/>
<rect x="1443.63" y="0" width="1.5" height="586.2" fill="#464646"/>
<rect x="1453.55" y="0" width="1.5" height="586.2" fill="#464646"/>
<rect x="1463.47" y="0" width="1.5" height="586.2" fill="#464646"/>
<rect x="1473.39" y="0" width="1.5" height="586.2" fill="#4a4a4a"/>
<rect x="1483.31" y="0" width="1.5" height="586.2" fill="#464646"/>
<rect x="1493.23" y="0" width="1.5" height="586.2" fill="#464646"/>
<rect x="1503.15" y="0" width="1.5" height="586.2" fill="#464646"/>
<rect x="1513.07" y="0" width="1.5" height="586.2" fill="#464646"/>
<rect x="1522.99" y="0" width="1.5" height="586.2" fill="#464646"/>
<rect x="1532.91" y="0" width="1.5" height="586.2" fill="#464646"/>
<rect x="1542.83" y="0" width="1.5" height="586.2" fill="#464646"/>
<rect x="1552.75" y="0" width="1.5" height="586.2" fill="#4a4a4a"/>
<rect x="1562.67" y="0" width="1.5" height="586.2" fill="#464646"/>
<rect x="1572.59" y="0" width="1.5" height="586.2" fill="#464646"/>
<rect x="1582.51" y="0" width="1.5" height="586.2" fill="#464646"/>
<rect x="354.2" y="52.72" width="1238" height="1.2" fill="#212121"/>
<rect x="354.2" y="106.04" width="1238" height="1.2" fill="#212121"/>
<rect x="354.2" y="159.36" width="1238" height="1.2" fill="#212121"/>
<rect x="354.2" y="212.68" width="1238" height="1.2" fill="#212121"/>
<rect x="354.2" y="266.00" width="1238" height="1.2" fill="#212121"/>
<rect x="354.2" y="319.32" width="1238" height="1.2" fill="#212121"/>
<rect x="354.2" y="372.64" width="1238" height="1.2" fill="#212121"/>
<rect x="354.2" y="425.96" width="1238" height="1.2" fill="#212121"/>
<rect x="354.2" y="479.28" width="1238" height="1.2" fill="#212121"/>
<rect x="354.2" y="532.60" width="1238" height="1.2" fill="#212121"/>
</svg>
<div style="position:absolute;left:0.00px;top:115.93px;width:354.20px;height:53.32px;background:linear-gradient(#5d5d5d,#575757)"></div>
<div style="position:absolute;left:54.80px;top:121.45px;font-size:15px;line-height:17.25px;height:17.25px;color:#f2f2f2;font-weight:400;white-space:nowrap;letter-spacing:0.11px;-webkit-text-stroke:0.25px #f2f2f2">no effect pluck</div>
<div style="position:absolute;left:0.00px;top:169.25px;width:354.20px;height:53.32px;background:linear-gradient(#5d5d5d,#575757)"></div>
<div style="position:absolute;left:54.80px;top:174.78px;font-size:15px;line-height:17.25px;height:17.25px;color:#f2f2f2;font-weight:400;white-space:nowrap;letter-spacing:0px;-webkit-text-stroke:0.25px #f2f2f2">pluck</div>
<div style="position:absolute;left:0.00px;top:222.57px;width:354.20px;height:53.32px;background:linear-gradient(#5d5d5d,#575757)"></div>
<div style="position:absolute;left:54.80px;top:228.09px;font-size:15px;line-height:17.25px;height:17.25px;color:#f2f2f2;font-weight:400;white-space:nowrap;letter-spacing:0px;-webkit-text-stroke:0.25px #f2f2f2">pluck-harmony</div>
<div style="position:absolute;left:0.00px;top:275.89px;width:354.20px;height:53.32px;background:linear-gradient(#707070,#6a6a6a)"></div>
<div style="position:absolute;left:54.80px;top:281.42px;font-size:15px;line-height:17.25px;height:17.25px;color:#f2f2f2;font-weight:400;white-space:nowrap;letter-spacing:0.06px;-webkit-text-stroke:0.25px #f2f2f2">hight trem</div>
<div style="position:absolute;left:0.00px;top:329.21px;width:354.20px;height:53.32px;background:linear-gradient(#5d5d5d,#575757)"></div>
<div style="position:absolute;left:54.80px;top:334.74px;font-size:15px;line-height:17.25px;height:17.25px;color:#f2f2f2;font-weight:400;white-space:nowrap;letter-spacing:-0.24px;-webkit-text-stroke:0.25px #f2f2f2">harmony</div>
<div style="position:absolute;left:0.00px;top:382.53px;width:354.20px;height:53.32px;background:linear-gradient(#5d5d5d,#575757)"></div>
<div style="position:absolute;left:54.80px;top:388.06px;font-size:15px;line-height:17.25px;height:17.25px;color:#f2f2f2;font-weight:400;white-space:nowrap;letter-spacing:-0.12px;-webkit-text-stroke:0.25px #f2f2f2">melody</div>
<div style="position:absolute;left:0.00px;top:435.85px;width:354.20px;height:53.32px;background:linear-gradient(#5d5d5d,#575757)"></div>
<div style="position:absolute;left:54.80px;top:441.38px;font-size:15px;line-height:17.25px;height:17.25px;color:#f2f2f2;font-weight:400;white-space:nowrap;letter-spacing:-0.55px;-webkit-text-stroke:0.25px #f2f2f2">East Bay</div>
<div style="position:absolute;left:0.00px;top:489.17px;width:354.20px;height:53.32px;background:linear-gradient(#5d5d5d,#575757)"></div>
<div style="position:absolute;left:54.80px;top:494.70px;font-size:15px;line-height:17.25px;height:17.25px;color:#f2f2f2;font-weight:400;white-space:nowrap;letter-spacing:-0.25px;-webkit-text-stroke:0.25px #f2f2f2">Breathy Vox</div>
<div style="position:absolute;left:0.00px;top:542.49px;width:354.20px;height:53.32px;background:linear-gradient(#5d5d5d,#575757)"></div>
<div style="position:absolute;left:54.80px;top:548.01px;font-size:15px;line-height:17.25px;height:17.25px;color:#f2f2f2;font-weight:400;white-space:nowrap;letter-spacing:-0.31px;-webkit-text-stroke:0.25px #f2f2f2">Breaking Bass</div>
<div style="position:absolute;left:0.00px;top:595.81px;width:354.20px;height:53.32px;background:linear-gradient(#5d5d5d,#575757)"></div>
<div style="position:absolute;left:54.80px;top:601.33px;font-size:15px;line-height:17.25px;height:17.25px;color:#f2f2f2;font-weight:400;white-space:nowrap;letter-spacing:-0.31px;-webkit-text-stroke:0.25px #f2f2f2">Breaking Bass</div>
<div style="position:absolute;left:0.00px;top:649.13px;width:354.20px;height:53.32px;background:linear-gradient(#5d5d5d,#575757)"></div>
<div style="position:absolute;left:54.80px;top:654.66px;font-size:15px;line-height:17.25px;height:17.25px;color:#f2f2f2;font-weight:400;white-space:nowrap;letter-spacing:-0.24px;-webkit-text-stroke:0.25px #f2f2f2">Phasing Guitar Plucks</div>
<div style="position:absolute;left:0.00px;top:168.75px;width:354.20px;height:1.00px;background:#474747"></div>
<div style="position:absolute;left:0.00px;top:222.07px;width:354.20px;height:1.00px;background:#474747"></div>
<div style="position:absolute;left:0.00px;top:275.39px;width:354.20px;height:1.00px;background:#474747"></div>
<div style="position:absolute;left:0.00px;top:328.71px;width:354.20px;height:1.00px;background:#474747"></div>
<div style="position:absolute;left:0.00px;top:382.03px;width:354.20px;height:1.00px;background:#474747"></div>
<div style="position:absolute;left:0.00px;top:435.35px;width:354.20px;height:1.00px;background:#474747"></div>
<div style="position:absolute;left:0.00px;top:488.67px;width:354.20px;height:1.00px;background:#474747"></div>
<div style="position:absolute;left:0.00px;top:541.99px;width:354.20px;height:1.00px;background:#474747"></div>
<div style="position:absolute;left:0.00px;top:595.31px;width:354.20px;height:1.00px;background:#474747"></div>
<div style="position:absolute;left:0.00px;top:648.63px;width:354.20px;height:1.00px;background:#474747"></div>
<svg style="position:absolute;left:0;top:116.23px;overflow:visible" width="354" height="53"><rect x="13" y="15.3" width="30.6" height="24.2" rx="3.5" fill="#7ed61c"/><rect x="15.25" y="26.60" width="1.5" height="1.60" rx="0.75" fill="#5a5a5a"/><rect x="17.85" y="25.40" width="1.5" height="4.00" rx="0.75" fill="#5a5a5a"/><rect x="20.65" y="23.40" width="1.5" height="8.00" rx="0.75" fill="#5a5a5a"/><rect x="23.45" y="19.50" width="1.5" height="15.80" rx="0.75" fill="#5a5a5a"/><rect x="26.25" y="23.60" width="1.5" height="7.60" rx="0.75" fill="#5a5a5a"/><rect x="28.85" y="25.40" width="1.5" height="4.00" rx="0.75" fill="#5a5a5a"/><rect x="31.75" y="26.60" width="1.5" height="1.60" rx="0.75" fill="#5a5a5a"/><rect x="34.45" y="22.20" width="1.5" height="10.40" rx="0.75" fill="#5a5a5a"/><rect x="37.05" y="25.40" width="1.5" height="4.00" rx="0.75" fill="#5a5a5a"/><rect x="39.85" y="26.60" width="1.5" height="1.60" rx="0.75" fill="#5a5a5a"/><rect x="55.8" y="28.8" width="44" height="17" rx="4" fill="#626262"/><rect x="55.8" y="45" width="44" height="1" fill="rgba(0,0,0,0.18)"/><rect x="77.3" y="29" width="1" height="16.5" fill="#4e4e4e"/><g fill="#f0f0f0"><path d="M61.5 34.5 H64 L68.3 31 V42.5 L64 39 H61.5 Z"/></g><path d="M61.5 31.5 L71.5 43.5" stroke="#626262" stroke-width="2.2"/><path d="M61.5 31.5 L71.5 43.5" stroke="#f0f0f0" stroke-width="1"/><g fill="none" stroke="#f0f0f0" stroke-linecap="round"><path d="M84 40.2 A5.5 5.5 0 1 1 94.2 40.2" stroke-width="1.3"/><path d="M84.6 39.6 L85.7 42.4 M93.6 39.6 L92.5 42.4" stroke-width="2.5"/></g><rect x="168" y="27.3" width="139" height="19.3" rx="9.65" fill="#3c3c3c"/><circle cx="239.20" cy="36.9" r="9" fill="#8b8b8b"/><path d="M322.6 47.5 A11.6 11.6 0 1 1 334 47.5" fill="none" stroke="#3a3a3a" stroke-width="4.4"/><circle cx="328.3" cy="36.8" r="9.3" fill="#8c8c8c"/><rect x="327.6" y="29" width="1.5" height="4" fill="#222"/><rect x="327.6" y="24.3" width="1.5" height="2.5" fill="#3ad15e"/></svg>
<svg style="position:absolute;left:0;top:169.55px;overflow:visible" width="354" height="53"><rect x="13" y="15.3" width="30.6" height="24.2" rx="3.5" fill="#7ed61c"/><rect x="15.25" y="26.60" width="1.5" height="1.60" rx="0.75" fill="#5a5a5a"/><rect x="17.85" y="25.40" width="1.5" height="4.00" rx="0.75" fill="#5a5a5a"/><rect x="20.65" y="23.40" width="1.5" height="8.00" rx="0.75" fill="#5a5a5a"/><rect x="23.45" y="19.50" width="1.5" height="15.80" rx="0.75" fill="#5a5a5a"/><rect x="26.25" y="23.60" width="1.5" height="7.60" rx="0.75" fill="#5a5a5a"/><rect x="28.85" y="25.40" width="1.5" height="4.00" rx="0.75" fill="#5a5a5a"/><rect x="31.75" y="26.60" width="1.5" height="1.60" rx="0.75" fill="#5a5a5a"/><rect x="34.45" y="22.20" width="1.5" height="10.40" rx="0.75" fill="#5a5a5a"/><rect x="37.05" y="25.40" width="1.5" height="4.00" rx="0.75" fill="#5a5a5a"/><rect x="39.85" y="26.60" width="1.5" height="1.60" rx="0.75" fill="#5a5a5a"/><rect x="55.8" y="28.8" width="44" height="17" rx="4" fill="#626262"/><rect x="55.8" y="45" width="44" height="1" fill="rgba(0,0,0,0.18)"/><rect x="77.3" y="29" width="1" height="16.5" fill="#4e4e4e"/><g fill="#f0f0f0"><path d="M61.5 34.5 H64 L68.3 31 V42.5 L64 39 H61.5 Z"/></g><path d="M61.5 31.5 L71.5 43.5" stroke="#626262" stroke-width="2.2"/><path d="M61.5 31.5 L71.5 43.5" stroke="#f0f0f0" stroke-width="1"/><g fill="none" stroke="#f0f0f0" stroke-linecap="round"><path d="M84 40.2 A5.5 5.5 0 1 1 94.2 40.2" stroke-width="1.3"/><path d="M84.6 39.6 L85.7 42.4 M93.6 39.6 L92.5 42.4" stroke-width="2.5"/></g><rect x="168" y="27.3" width="139" height="19.3" rx="9.65" fill="#3c3c3c"/><circle cx="279.70" cy="36.9" r="9" fill="#8b8b8b"/><path d="M322.6 47.5 A11.6 11.6 0 1 1 334 47.5" fill="none" stroke="#3a3a3a" stroke-width="4.4"/><circle cx="328.3" cy="36.8" r="9.3" fill="#8c8c8c"/><rect x="327.6" y="29" width="1.5" height="4" fill="#222"/><rect x="327.6" y="24.3" width="1.5" height="2.5" fill="#3ad15e"/></svg>
<svg style="position:absolute;left:0;top:222.87px;overflow:visible" width="354" height="53"><rect x="13" y="15.3" width="30.6" height="24.2" rx="3.5" fill="#12d862"/><rect x="15.25" y="26.60" width="1.5" height="1.60" rx="0.75" fill="#5a5a5a"/><rect x="17.85" y="25.40" width="1.5" height="4.00" rx="0.75" fill="#5a5a5a"/><rect x="20.65" y="23.40" width="1.5" height="8.00" rx="0.75" fill="#5a5a5a"/><rect x="23.45" y="19.50" width="1.5" height="15.80" rx="0.75" fill="#5a5a5a"/><rect x="26.25" y="23.60" width="1.5" height="7.60" rx="0.75" fill="#5a5a5a"/><rect x="28.85" y="25.40" width="1.5" height="4.00" rx="0.75" fill="#5a5a5a"/><rect x="31.75" y="26.60" width="1.5" height="1.60" rx="0.75" fill="#5a5a5a"/><rect x="34.45" y="22.20" width="1.5" height="10.40" rx="0.75" fill="#5a5a5a"/><rect x="37.05" y="25.40" width="1.5" height="4.00" rx="0.75" fill="#5a5a5a"/><rect x="39.85" y="26.60" width="1.5" height="1.60" rx="0.75" fill="#5a5a5a"/><rect x="55.8" y="28.8" width="44" height="17" rx="4" fill="#626262"/><rect x="55.8" y="45" width="44" height="1" fill="rgba(0,0,0,0.18)"/><rect x="77.3" y="29" width="1" height="16.5" fill="#4e4e4e"/><g fill="#f0f0f0"><path d="M61.5 34.5 H64 L68.3 31 V42.5 L64 39 H61.5 Z"/></g><path d="M61.5 31.5 L71.5 43.5" stroke="#626262" stroke-width="2.2"/><path d="M61.5 31.5 L71.5 43.5" stroke="#f0f0f0" stroke-width="1"/><g fill="none" stroke="#f0f0f0" stroke-linecap="round"><path d="M84 40.2 A5.5 5.5 0 1 1 94.2 40.2" stroke-width="1.3"/><path d="M84.6 39.6 L85.7 42.4 M93.6 39.6 L92.5 42.4" stroke-width="2.5"/></g><rect x="168" y="27.3" width="139" height="19.3" rx="9.65" fill="#3c3c3c"/><circle cx="238.00" cy="36.9" r="9" fill="#8b8b8b"/><path d="M322.6 47.5 A11.6 11.6 0 1 1 334 47.5" fill="none" stroke="#3a3a3a" stroke-width="4.4"/><circle cx="328.3" cy="36.8" r="9.3" fill="#8c8c8c"/><rect x="327.6" y="29" width="1.5" height="4" fill="#222"/><rect x="327.6" y="24.3" width="1.5" height="2.5" fill="#3ad15e"/></svg>
<svg style="position:absolute;left:0;top:276.19px;overflow:visible" width="354" height="53"><rect x="13" y="15.3" width="30.6" height="24.2" rx="3.5" fill="#f8c81a"/><rect x="15.25" y="26.60" width="1.5" height="1.60" rx="0.75" fill="#6d6d6d"/><rect x="17.85" y="25.40" width="1.5" height="4.00" rx="0.75" fill="#6d6d6d"/><rect x="20.65" y="23.40" width="1.5" height="8.00" rx="0.75" fill="#6d6d6d"/><rect x="23.45" y="19.50" width="1.5" height="15.80" rx="0.75" fill="#6d6d6d"/><rect x="26.25" y="23.60" width="1.5" height="7.60" rx="0.75" fill="#6d6d6d"/><rect x="28.85" y="25.40" width="1.5" height="4.00" rx="0.75" fill="#6d6d6d"/><rect x="31.75" y="26.60" width="1.5" height="1.60" rx="0.75" fill="#6d6d6d"/><rect x="34.45" y="22.20" width="1.5" height="10.40" rx="0.75" fill="#6d6d6d"/><rect x="37.05" y="25.40" width="1.5" height="4.00" rx="0.75" fill="#6d6d6d"/><rect x="39.85" y="26.60" width="1.5" height="1.60" rx="0.75" fill="#6d6d6d"/><rect x="55.8" y="28.8" width="44" height="17" rx="4" fill="#737373"/><rect x="55.8" y="45" width="44" height="1" fill="rgba(0,0,0,0.18)"/><rect x="77.3" y="29" width="1" height="16.5" fill="#5c5c5c"/><g fill="#f0f0f0"><path d="M61.5 34.5 H64 L68.3 31 V42.5 L64 39 H61.5 Z"/></g><path d="M61.5 31.5 L71.5 43.5" stroke="#737373" stroke-width="2.2"/><path d="M61.5 31.5 L71.5 43.5" stroke="#f0f0f0" stroke-width="1"/><g fill="none" stroke="#f0f0f0" stroke-linecap="round"><path d="M84 40.2 A5.5 5.5 0 1 1 94.2 40.2" stroke-width="1.3"/><path d="M84.6 39.6 L85.7 42.4 M93.6 39.6 L92.5 42.4" stroke-width="2.5"/></g><rect x="168" y="27.3" width="139" height="19.3" rx="9.65" fill="#3c3c3c"/><g fill="#3ad15e"><rect x="176" y="33.2" width="9" height="2.8" rx="1"/><rect x="176" y="37.8" width="9" height="2.8" rx="1"/><rect x="187.3" y="33.2" width="1.4" height="2.8"/><rect x="187.3" y="37.8" width="1.4" height="2.8"/></g><circle cx="204.30" cy="36.9" r="9" fill="#a5a5a5"/><path d="M322.6 47.5 A11.6 11.6 0 1 1 334 47.5" fill="none" stroke="#3a3a3a" stroke-width="4.4"/><circle cx="328.3" cy="36.8" r="9.3" fill="#9a9a9a"/><rect x="327.6" y="29" width="1.5" height="4" fill="#222"/><rect x="327.6" y="24.3" width="1.5" height="2.5" fill="#3ad15e"/></svg>
<svg style="position:absolute;left:0;top:329.51px;overflow:visible" width="354" height="53"><rect x="13" y="15.3" width="30.6" height="24.2" rx="3.5" fill="#4ea3f4"/><rect x="15.25" y="26.60" width="1.5" height="1.60" rx="0.75" fill="#5a5a5a"/><rect x="17.85" y="25.40" width="1.5" height="4.00" rx="0.75" fill="#5a5a5a"/><rect x="20.65" y="23.40" width="1.5" height="8.00" rx="0.75" fill="#5a5a5a"/><rect x="23.45" y="19.50" width="1.5" height="15.80" rx="0.75" fill="#5a5a5a"/><rect x="26.25" y="23.60" width="1.5" height="7.60" rx="0.75" fill="#5a5a5a"/><rect x="28.85" y="25.40" width="1.5" height="4.00" rx="0.75" fill="#5a5a5a"/><rect x="31.75" y="26.60" width="1.5" height="1.60" rx="0.75" fill="#5a5a5a"/><rect x="34.45" y="22.20" width="1.5" height="10.40" rx="0.75" fill="#5a5a5a"/><rect x="37.05" y="25.40" width="1.5" height="4.00" rx="0.75" fill="#5a5a5a"/><rect x="39.85" y="26.60" width="1.5" height="1.60" rx="0.75" fill="#5a5a5a"/><rect x="55.8" y="28.8" width="44" height="17" rx="4" fill="#626262"/><rect x="55.8" y="45" width="44" height="1" fill="rgba(0,0,0,0.18)"/><rect x="77.3" y="29" width="1" height="16.5" fill="#4e4e4e"/><g fill="#f0f0f0"><path d="M61.5 34.5 H64 L68.3 31 V42.5 L64 39 H61.5 Z"/></g><path d="M61.5 31.5 L71.5 43.5" stroke="#626262" stroke-width="2.2"/><path d="M61.5 31.5 L71.5 43.5" stroke="#f0f0f0" stroke-width="1"/><g fill="none" stroke="#f0f0f0" stroke-linecap="round"><path d="M84 40.2 A5.5 5.5 0 1 1 94.2 40.2" stroke-width="1.3"/><path d="M84.6 39.6 L85.7 42.4 M93.6 39.6 L92.5 42.4" stroke-width="2.5"/></g><rect x="168" y="27.3" width="139" height="19.3" rx="9.65" fill="#3c3c3c"/><circle cx="213.30" cy="36.9" r="9" fill="#8b8b8b"/><path d="M322.6 47.5 A11.6 11.6 0 1 1 334 47.5" fill="none" stroke="#3a3a3a" stroke-width="4.4"/><circle cx="328.3" cy="36.8" r="9.3" fill="#8c8c8c"/><rect x="327.6" y="29" width="1.5" height="4" fill="#222"/><rect x="327.6" y="24.3" width="1.5" height="2.5" fill="#3ad15e"/></svg>
<svg style="position:absolute;left:0;top:382.83px;overflow:visible" width="354" height="53"><rect x="13" y="15.3" width="30.6" height="24.2" rx="3.5" fill="#4ea3f4"/><rect x="15.25" y="26.60" width="1.5" height="1.60" rx="0.75" fill="#5a5a5a"/><rect x="17.85" y="25.40" width="1.5" height="4.00" rx="0.75" fill="#5a5a5a"/><rect x="20.65" y="23.40" width="1.5" height="8.00" rx="0.75" fill="#5a5a5a"/><rect x="23.45" y="19.50" width="1.5" height="15.80" rx="0.75" fill="#5a5a5a"/><rect x="26.25" y="23.60" width="1.5" height="7.60" rx="0.75" fill="#5a5a5a"/><rect x="28.85" y="25.40" width="1.5" height="4.00" rx="0.75" fill="#5a5a5a"/><rect x="31.75" y="26.60" width="1.5" height="1.60" rx="0.75" fill="#5a5a5a"/><rect x="34.45" y="22.20" width="1.5" height="10.40" rx="0.75" fill="#5a5a5a"/><rect x="37.05" y="25.40" width="1.5" height="4.00" rx="0.75" fill="#5a5a5a"/><rect x="39.85" y="26.60" width="1.5" height="1.60" rx="0.75" fill="#5a5a5a"/><rect x="55.8" y="28.8" width="44" height="17" rx="4" fill="#626262"/><rect x="55.8" y="45" width="44" height="1" fill="rgba(0,0,0,0.18)"/><rect x="77.3" y="29" width="1" height="16.5" fill="#4e4e4e"/><g fill="#f0f0f0"><path d="M61.5 34.5 H64 L68.3 31 V42.5 L64 39 H61.5 Z"/></g><path d="M61.5 31.5 L71.5 43.5" stroke="#626262" stroke-width="2.2"/><path d="M61.5 31.5 L71.5 43.5" stroke="#f0f0f0" stroke-width="1"/><g fill="none" stroke="#f0f0f0" stroke-linecap="round"><path d="M84 40.2 A5.5 5.5 0 1 1 94.2 40.2" stroke-width="1.3"/><path d="M84.6 39.6 L85.7 42.4 M93.6 39.6 L92.5 42.4" stroke-width="2.5"/></g><rect x="168" y="27.3" width="139" height="19.3" rx="9.65" fill="#3c3c3c"/><circle cx="219.80" cy="36.9" r="9" fill="#8b8b8b"/><path d="M322.6 47.5 A11.6 11.6 0 1 1 334 47.5" fill="none" stroke="#3a3a3a" stroke-width="4.4"/><circle cx="328.3" cy="36.8" r="9.3" fill="#8c8c8c"/><rect x="327.6" y="29" width="1.5" height="4" fill="#222"/><rect x="327.6" y="24.3" width="1.5" height="2.5" fill="#3ad15e"/></svg>
<svg style="position:absolute;left:0;top:436.15px;overflow:visible" width="354" height="53"><g fill="#f2c318" stroke="none">
<ellipse cx="21.1" cy="14.3" rx="8.2" ry="1.1"/><path d="M19.8 13.6 L21.2 11 L22.6 13.6 Z"/>
<rect x="13" y="21.9" width="9.6" height="10"/><rect x="20.8" y="17.5" width="7.2" height="5.2"/><rect x="29.6" y="17.5" width="7.2" height="5.2"/>
<rect x="34.4" y="23.9" width="8" height="6"/><rect x="35.6" y="18.8" width="8.4" height="1.4"/></g>
<g fill="none" stroke="#f2c318" stroke-width="1.3" stroke-linecap="round">
<path d="M18 15 V37 M18 37 L14 40.3 M18 37 L22 40.3 M38.6 16.7 V37 M38.6 37 L34.6 40.3 M38.6 37 L42.6 40.3 M12.9 18.7 L16.6 15.9"/>
<circle cx="28.8" cy="32.5" r="7.3" stroke-width="1.5"/></g>
<g fill="#5a5a5a" opacity="0.5"><rect x="22.5" y="19" width="4" height="2"/><rect x="31.2" y="19" width="4" height="2"/></g><rect x="55.8" y="28.8" width="44" height="17" rx="4" fill="#626262"/><rect x="55.8" y="45" width="44" height="1" fill="rgba(0,0,0,0.18)"/><rect x="77.3" y="29" width="1" height="16.5" fill="#4e4e4e"/><g fill="#f0f0f0"><path d="M61.5 34.5 H64 L68.3 31 V42.5 L64 39 H61.5 Z"/></g><path d="M61.5 31.5 L71.5 43.5" stroke="#626262" stroke-width="2.2"/><path d="M61.5 31.5 L71.5 43.5" stroke="#f0f0f0" stroke-width="1"/><g fill="none" stroke="#f0f0f0" stroke-linecap="round"><path d="M84 40.2 A5.5 5.5 0 1 1 94.2 40.2" stroke-width="1.3"/><path d="M84.6 39.6 L85.7 42.4 M93.6 39.6 L92.5 42.4" stroke-width="2.5"/></g><rect x="168" y="27.3" width="139" height="19.3" rx="9.65" fill="#3c3c3c"/><circle cx="210.00" cy="36.9" r="9" fill="#8b8b8b"/><path d="M322.6 47.5 A11.6 11.6 0 1 1 334 47.5" fill="none" stroke="#3a3a3a" stroke-width="4.4"/><circle cx="328.3" cy="36.8" r="9.3" fill="#8c8c8c"/><rect x="327.6" y="29" width="1.5" height="4" fill="#222"/><rect x="327.6" y="24.3" width="1.5" height="2.5" fill="#3ad15e"/></svg>
<svg style="position:absolute;left:0;top:489.47px;overflow:visible" width="354" height="53"><g fill="none" stroke="#26c542" stroke-width="1.4"><rect x="15.3" y="18.3" width="25.5" height="11.3" rx="0.8"/><path d="M15.3 24 H40.8"/>
<path d="M20 29.6 L37 44.5 M36 29.6 L19 44.5"/></g><g fill="#26c542"><circle cx="19.5" cy="44.3" r="1.3"/><circle cx="36.5" cy="44.3" r="1.3"/>
<rect x="18" y="20.5" width="1.2" height="1.2"/><rect x="21" y="20.5" width="1.2" height="1.2"/><rect x="24" y="20.5" width="1.2" height="1.2"/><rect x="31" y="20.5" width="1.2" height="1.2"/><rect x="34" y="20.5" width="1.2" height="1.2"/><rect x="37" y="20.5" width="1.2" height="1.2"/></g><rect x="55.8" y="28.8" width="44" height="17" rx="4" fill="#626262"/><rect x="55.8" y="45" width="44" height="1" fill="rgba(0,0,0,0.18)"/><rect x="77.3" y="29" width="1" height="16.5" fill="#4e4e4e"/><g fill="#f0f0f0"><path d="M61.5 34.5 H64 L68.3 31 V42.5 L64 39 H61.5 Z"/></g><path d="M61.5 31.5 L71.5 43.5" stroke="#626262" stroke-width="2.2"/><path d="M61.5 31.5 L71.5 43.5" stroke="#f0f0f0" stroke-width="1"/><g fill="none" stroke="#f0f0f0" stroke-linecap="round"><path d="M84 40.2 A5.5 5.5 0 1 1 94.2 40.2" stroke-width="1.3"/><path d="M84.6 39.6 L85.7 42.4 M93.6 39.6 L92.5 42.4" stroke-width="2.5"/></g><rect x="168" y="27.3" width="139" height="19.3" rx="9.65" fill="#3c3c3c"/><circle cx="238.00" cy="36.9" r="9" fill="#8b8b8b"/><path d="M322.6 47.5 A11.6 11.6 0 1 1 334 47.5" fill="none" stroke="#3a3a3a" stroke-width="4.4"/><circle cx="328.3" cy="36.8" r="9.3" fill="#8c8c8c"/><rect x="327.6" y="29" width="1.5" height="4" fill="#222"/><rect x="327.6" y="24.3" width="1.5" height="2.5" fill="#3ad15e"/></svg>
<svg style="position:absolute;left:0;top:542.79px;overflow:visible" width="354" height="53"><g fill="#7ad61c"><rect x="13" y="18" width="31.5" height="4.5"/><rect x="13" y="23.5" width="31.5" height="4.5"/><rect x="13" y="29" width="31.5" height="5"/><rect x="13" y="35" width="31.5" height="4.5"/></g>
<g fill="#5a5a5a"><rect x="20" y="19.5" width="12" height="1.5"/><rect x="16" y="25" width="2" height="1.5"/><rect x="20" y="25" width="2" height="1.5"/><rect x="24" y="25" width="2" height="1.5"/><rect x="40" y="25" width="2" height="1.5"/>
<rect x="16" y="31" width="24" height="1.5"/><rect x="16" y="36.5" width="26" height="1.5"/><rect x="15" y="22" width="28" height="1"/></g><rect x="55.8" y="28.8" width="44" height="17" rx="4" fill="#626262"/><rect x="55.8" y="45" width="44" height="1" fill="rgba(0,0,0,0.18)"/><rect x="77.3" y="29" width="1" height="16.5" fill="#4e4e4e"/><g fill="#f0f0f0"><path d="M61.5 34.5 H64 L68.3 31 V42.5 L64 39 H61.5 Z"/></g><path d="M61.5 31.5 L71.5 43.5" stroke="#626262" stroke-width="2.2"/><path d="M61.5 31.5 L71.5 43.5" stroke="#f0f0f0" stroke-width="1"/><g fill="none" stroke="#f0f0f0" stroke-linecap="round"><path d="M84 40.2 A5.5 5.5 0 1 1 94.2 40.2" stroke-width="1.3"/><path d="M84.6 39.6 L85.7 42.4 M93.6 39.6 L92.5 42.4" stroke-width="2.5"/></g><rect x="168" y="27.3" width="139" height="19.3" rx="9.65" fill="#3c3c3c"/><circle cx="223.90" cy="36.9" r="9" fill="#8b8b8b"/><path d="M322.6 47.5 A11.6 11.6 0 1 1 334 47.5" fill="none" stroke="#3a3a3a" stroke-width="4.4"/><circle cx="328.3" cy="36.8" r="9.3" fill="#8c8c8c"/><rect x="327.6" y="29" width="1.5" height="4" fill="#222"/><rect x="327.6" y="24.3" width="1.5" height="2.5" fill="#3ad15e"/></svg>
<svg style="position:absolute;left:0;top:596.11px;overflow:visible" width="354" height="53"><rect x="13" y="23.5" width="30.5" height="20.3" fill="#7ad61c"/><rect x="21" y="24.5" width="6" height="2" fill="#5a5a5a"/><rect x="16" y="28" width="3" height="2" fill="#5a5a5a"/><rect x="20" y="28" width="3" height="2" fill="#5a5a5a"/><rect x="26" y="29.5" width="8" height="1.2" fill="#5a5a5a"/><rect x="15.0" y="33.5" width="1.1" height="10.3" fill="#5a5a5a"/><rect x="19.0" y="33.5" width="1.1" height="10.3" fill="#5a5a5a"/><rect x="23.0" y="33.5" width="1.1" height="10.3" fill="#5a5a5a"/><rect x="27.0" y="33.5" width="1.1" height="10.3" fill="#5a5a5a"/><rect x="31.0" y="33.5" width="1.1" height="10.3" fill="#5a5a5a"/><rect x="35.0" y="33.5" width="1.1" height="10.3" fill="#5a5a5a"/><rect x="39.0" y="33.5" width="1.1" height="10.3" fill="#5a5a5a"/><rect x="55.8" y="28.8" width="44" height="17" rx="4" fill="#626262"/><rect x="55.8" y="45" width="44" height="1" fill="rgba(0,0,0,0.18)"/><rect x="77.3" y="29" width="1" height="16.5" fill="#4e4e4e"/><g fill="#f0f0f0"><path d="M61.5 34.5 H64 L68.3 31 V42.5 L64 39 H61.5 Z"/></g><path d="M61.5 31.5 L71.5 43.5" stroke="#626262" stroke-width="2.2"/><path d="M61.5 31.5 L71.5 43.5" stroke="#f0f0f0" stroke-width="1"/><g fill="none" stroke="#f0f0f0" stroke-linecap="round"><path d="M84 40.2 A5.5 5.5 0 1 1 94.2 40.2" stroke-width="1.3"/><path d="M84.6 39.6 L85.7 42.4 M93.6 39.6 L92.5 42.4" stroke-width="2.5"/></g><rect x="168" y="27.3" width="139" height="19.3" rx="9.65" fill="#3c3c3c"/><circle cx="221.90" cy="36.9" r="9" fill="#8b8b8b"/><path d="M322.6 47.5 A11.6 11.6 0 1 1 334 47.5" fill="none" stroke="#3a3a3a" stroke-width="4.4"/><circle cx="328.3" cy="36.8" r="9.3" fill="#8c8c8c"/><rect x="327.6" y="29" width="1.5" height="4" fill="#222"/><rect x="327.6" y="24.3" width="1.5" height="2.5" fill="#3ad15e"/></svg>
<svg style="position:absolute;left:0;top:649.43px;overflow:visible" width="354" height="53"><g fill="none" stroke="#e6d41c" stroke-width="1.4" stroke-linecap="round" stroke-linejoin="round">
<path d="M26 29.2 L40.5 15"/>
<path d="M27.4 27.3 Q25.5 24.6 23.8 25.3 Q21.6 26.5 21.3 29.2 Q17.5 30 14.6 31.3 Q12 33 12.4 36.5 Q13 41 16.2 42.5 Q19.5 44 22.6 42.6 Q25.5 41 26 37.2 Q26.3 34.5 28.8 33.6 Q31 32.9 30.4 32.2 Z"/>
<path d="M20.4 32.5 L23.4 35 M17.6 34.8 L20.4 37.5"/></g>
<path d="M38.8 16.4 L41.2 13.2 Q42.6 12.4 43.3 13.4 Q43.8 14.4 42.6 15.6 L40.2 17.8 Z" fill="#e6d41c"/>
<path d="M23.6 29.4 L26 27.6 L29.4 31 L27.2 33 Z" fill="#e6d41c"/><rect x="55.8" y="28.8" width="44" height="17" rx="4" fill="#626262"/><rect x="55.8" y="45" width="44" height="1" fill="rgba(0,0,0,0.18)"/><rect x="77.3" y="29" width="1" height="16.5" fill="#4e4e4e"/><g fill="#f0f0f0"><path d="M61.5 34.5 H64 L68.3 31 V42.5 L64 39 H61.5 Z"/></g><path d="M61.5 31.5 L71.5 43.5" stroke="#626262" stroke-width="2.2"/><path d="M61.5 31.5 L71.5 43.5" stroke="#f0f0f0" stroke-width="1"/><g fill="none" stroke="#f0f0f0" stroke-linecap="round"><path d="M84 40.2 A5.5 5.5 0 1 1 94.2 40.2" stroke-width="1.3"/><path d="M84.6 39.6 L85.7 42.4 M93.6 39.6 L92.5 42.4" stroke-width="2.5"/></g><rect x="168" y="27.3" width="139" height="19.3" rx="9.65" fill="#3c3c3c"/><circle cx="201.40" cy="36.9" r="9" fill="#8b8b8b"/><path d="M322.6 47.5 A11.6 11.6 0 1 1 334 47.5" fill="none" stroke="#3a3a3a" stroke-width="4.4"/><circle cx="328.3" cy="36.8" r="9.3" fill="#8c8c8c"/><rect x="327.6" y="29" width="1.5" height="4" fill="#222"/><rect x="327.6" y="24.3" width="1.5" height="2.5" fill="#3ad15e"/></svg>
<div style="position:absolute;left:0.00px;top:115.40px;width:354.20px;height:1.00px;background:#3a3a3a"></div>
<div style="position:absolute;left:353.60px;top:75.00px;width:1.20px;height:627.50px;background:#222"></div>
<div style="position:absolute;left:411.90px;top:115.83px;width:5.00px;height:53.20px;background:#80c814;border:1.5px solid #141414;box-sizing:border-box;border-radius:1.5px;overflow:hidden;box-shadow:inset 0 1px 0 rgba(255,255,255,0.10)"><div style="position:absolute;left:0;right:0;top:33.2px;height:1.9px;background:rgba(215,250,160,0.78)"></div></div>
<div style="position:absolute;left:416.20px;top:115.83px;width:22.80px;height:53.20px;background:#80c814;border:1.5px solid #141414;box-sizing:border-box;border-radius:5px;overflow:hidden;box-shadow:inset 0 1px 0 rgba(255,255,255,0.10)"><div style="position:absolute;left:6.0px;top:3.68px;font-size:12.8px;line-height:15px;color:#fbfbf2;white-space:nowrap;-webkit-text-stroke:0.4px #fbfbf2">jo</div><div style="position:absolute;left:0;right:0;top:33.2px;height:1.9px;background:rgba(215,250,160,0.78)"></div></div>
<div style="position:absolute;left:438.30px;top:115.83px;width:14.08px;height:53.20px;background:#80c814;border:1.5px solid #141414;box-sizing:border-box;border-radius:5px;overflow:hidden;box-shadow:inset 0 1px 0 rgba(255,255,255,0.10)"><div style="position:absolute;left:0;right:0;top:33.2px;height:1.9px;background:rgba(215,250,160,0.78)"></div></div>
<div style="position:absolute;left:451.38px;top:169.15px;width:40.68px;height:53.20px;background:#80c814;border:1.5px solid #141414;box-sizing:border-box;border-radius:5px;overflow:hidden;box-shadow:inset 0 1px 0 rgba(255,255,255,0.10)"><div style="position:absolute;left:6.0px;top:3.81px;font-size:12.65px;line-height:15px;color:#fbfbf2;white-space:nowrap;-webkit-text-stroke:0.4px #fbfbf2">journ</div><div style="position:absolute;left:0;right:0;top:33.2px;height:1.9px;background:rgba(215,250,160,0.78)"></div></div>
<div style="position:absolute;left:491.06px;top:169.15px;width:40.68px;height:53.20px;background:#80c814;border:1.5px solid #141414;box-sizing:border-box;border-radius:5px;overflow:hidden;box-shadow:inset 0 1px 0 rgba(255,255,255,0.10)"><div style="position:absolute;left:6.0px;top:3.81px;font-size:12.65px;line-height:15px;color:#fbfbf2;white-space:nowrap;-webkit-text-stroke:0.4px #fbfbf2">journ</div><div style="position:absolute;left:0;right:0;top:33.2px;height:1.9px;background:rgba(215,250,160,0.78)"></div></div>
<div style="position:absolute;left:530.74px;top:169.15px;width:40.68px;height:53.20px;background:#80c814;border:1.5px solid #141414;box-sizing:border-box;border-radius:5px;overflow:hidden;box-shadow:inset 0 1px 0 rgba(255,255,255,0.10)"><div style="position:absolute;left:6.0px;top:3.81px;font-size:12.65px;line-height:15px;color:#fbfbf2;white-space:nowrap;-webkit-text-stroke:0.4px #fbfbf2">journ</div><div style="position:absolute;left:0;right:0;top:33.2px;height:1.9px;background:rgba(215,250,160,0.78)"></div></div>
<div style="position:absolute;left:570.42px;top:169.15px;width:40.68px;height:53.20px;background:#80c814;border:1.5px solid #141414;box-sizing:border-box;border-radius:5px;overflow:hidden;box-shadow:inset 0 1px 0 rgba(255,255,255,0.10)"><div style="position:absolute;left:6.0px;top:3.81px;font-size:12.65px;line-height:15px;color:#fbfbf2;white-space:nowrap;-webkit-text-stroke:0.4px #fbfbf2">journ</div><div style="position:absolute;left:0;right:0;top:33.2px;height:1.9px;background:rgba(215,250,160,0.78)"></div></div>
<div style="position:absolute;left:610.10px;top:169.15px;width:40.68px;height:53.20px;background:#80c814;border:1.5px solid #141414;box-sizing:border-box;border-radius:5px;overflow:hidden;box-shadow:inset 0 1px 0 rgba(255,255,255,0.10)"><div style="position:absolute;left:6.0px;top:3.81px;font-size:12.65px;line-height:15px;color:#fbfbf2;white-space:nowrap;-webkit-text-stroke:0.4px #fbfbf2">journ</div><div style="position:absolute;left:0;right:0;top:33.2px;height:1.9px;background:rgba(215,250,160,0.78)"></div></div>
<div style="position:absolute;left:649.78px;top:169.15px;width:40.68px;height:53.20px;background:#80c814;border:1.5px solid #141414;box-sizing:border-box;border-radius:5px;overflow:hidden;box-shadow:inset 0 1px 0 rgba(255,255,255,0.10)"><div style="position:absolute;left:6.0px;top:3.81px;font-size:12.65px;line-height:15px;color:#fbfbf2;white-space:nowrap;-webkit-text-stroke:0.4px #fbfbf2">journ</div><div style="position:absolute;left:0;right:0;top:33.2px;height:1.9px;background:rgba(215,250,160,0.78)"></div></div>
<div style="position:absolute;left:689.46px;top:169.15px;width:40.68px;height:53.20px;background:#80c814;border:1.5px solid #141414;box-sizing:border-box;border-radius:5px;overflow:hidden;box-shadow:inset 0 1px 0 rgba(255,255,255,0.10)"><div style="position:absolute;left:6.0px;top:3.81px;font-size:12.65px;line-height:15px;color:#fbfbf2;white-space:nowrap;-webkit-text-stroke:0.4px #fbfbf2">journ</div><div style="position:absolute;left:0;right:0;top:33.2px;height:1.9px;background:rgba(215,250,160,0.78)"></div></div>
<div style="position:absolute;left:729.14px;top:169.15px;width:40.68px;height:53.20px;background:#80c814;border:1.5px solid #141414;box-sizing:border-box;border-radius:5px;overflow:hidden;box-shadow:inset 0 1px 0 rgba(255,255,255,0.10)"><div style="position:absolute;left:6.0px;top:3.81px;font-size:12.65px;line-height:15px;color:#fbfbf2;white-space:nowrap;-webkit-text-stroke:0.4px #fbfbf2">journ</div><div style="position:absolute;left:0;right:0;top:33.2px;height:1.9px;background:rgba(215,250,160,0.78)"></div></div>
<div style="position:absolute;left:768.82px;top:169.15px;width:40.68px;height:53.20px;background:#80c814;border:1.5px solid #141414;box-sizing:border-box;border-radius:5px;overflow:hidden;box-shadow:inset 0 1px 0 rgba(255,255,255,0.10)"><div style="position:absolute;left:6.0px;top:3.81px;font-size:12.65px;line-height:15px;color:#fbfbf2;white-space:nowrap;-webkit-text-stroke:0.4px #fbfbf2">journ</div><div style="position:absolute;left:0;right:0;top:33.2px;height:1.9px;background:rgba(215,250,160,0.78)"></div></div>
<div style="position:absolute;left:808.50px;top:169.15px;width:40.68px;height:53.20px;background:#80c814;border:1.5px solid #141414;box-sizing:border-box;border-radius:5px;overflow:hidden;box-shadow:inset 0 1px 0 rgba(255,255,255,0.10)"><div style="position:absolute;left:6.0px;top:3.81px;font-size:12.65px;line-height:15px;color:#fbfbf2;white-space:nowrap;-webkit-text-stroke:0.4px #fbfbf2">journ</div><div style="position:absolute;left:0;right:0;top:33.2px;height:1.9px;background:rgba(215,250,160,0.78)"></div></div>
<div style="position:absolute;left:848.18px;top:169.15px;width:40.68px;height:53.20px;background:#80c814;border:1.5px solid #141414;box-sizing:border-box;border-radius:5px;overflow:hidden;box-shadow:inset 0 1px 0 rgba(255,255,255,0.10)"><div style="position:absolute;left:6.0px;top:3.81px;font-size:12.65px;line-height:15px;color:#fbfbf2;white-space:nowrap;-webkit-text-stroke:0.4px #fbfbf2">journ</div><div style="position:absolute;left:0;right:0;top:33.2px;height:1.9px;background:rgba(215,250,160,0.78)"></div></div>
<div style="position:absolute;left:887.86px;top:169.15px;width:40.68px;height:53.20px;background:#80c814;border:1.5px solid #141414;box-sizing:border-box;border-radius:5px;overflow:hidden;box-shadow:inset 0 1px 0 rgba(255,255,255,0.10)"><div style="position:absolute;left:6.0px;top:3.81px;font-size:12.65px;line-height:15px;color:#fbfbf2;white-space:nowrap;-webkit-text-stroke:0.4px #fbfbf2">journ</div><div style="position:absolute;left:0;right:0;top:33.2px;height:1.9px;background:rgba(215,250,160,0.78)"></div></div>
<div style="position:absolute;left:927.54px;top:169.15px;width:40.68px;height:53.20px;background:#80c814;border:1.5px solid #141414;box-sizing:border-box;border-radius:5px;overflow:hidden;box-shadow:inset 0 1px 0 rgba(255,255,255,0.10)"><div style="position:absolute;left:6.0px;top:3.81px;font-size:12.65px;line-height:15px;color:#fbfbf2;white-space:nowrap;-webkit-text-stroke:0.4px #fbfbf2">journ</div><div style="position:absolute;left:0;right:0;top:33.2px;height:1.9px;background:rgba(215,250,160,0.78)"></div></div>
<div style="position:absolute;left:967.22px;top:169.15px;width:40.68px;height:53.20px;background:#80c814;border:1.5px solid #141414;box-sizing:border-box;border-radius:5px;overflow:hidden;box-shadow:inset 0 1px 0 rgba(255,255,255,0.10)"><div style="position:absolute;left:6.0px;top:3.81px;font-size:12.65px;line-height:15px;color:#fbfbf2;white-space:nowrap;-webkit-text-stroke:0.4px #fbfbf2">journ</div><div style="position:absolute;left:0;right:0;top:33.2px;height:1.9px;background:rgba(215,250,160,0.78)"></div></div>
<div style="position:absolute;left:1006.90px;top:169.15px;width:40.68px;height:53.20px;background:#80c814;border:1.5px solid #141414;box-sizing:border-box;border-radius:5px;overflow:hidden;box-shadow:inset 0 1px 0 rgba(255,255,255,0.10)"><div style="position:absolute;left:6.0px;top:3.81px;font-size:12.65px;line-height:15px;color:#fbfbf2;white-space:nowrap;-webkit-text-stroke:0.4px #fbfbf2">journ</div><div style="position:absolute;left:0;right:0;top:33.2px;height:1.9px;background:rgba(215,250,160,0.78)"></div></div>
<div style="position:absolute;left:1046.58px;top:169.15px;width:40.68px;height:53.20px;background:#80c814;border:1.5px solid #141414;box-sizing:border-box;border-radius:5px;overflow:hidden;box-shadow:inset 0 1px 0 rgba(255,255,255,0.10)"><div style="position:absolute;left:6.0px;top:3.81px;font-size:12.65px;line-height:15px;color:#fbfbf2;white-space:nowrap;-webkit-text-stroke:0.4px #fbfbf2">journ</div><div style="position:absolute;left:0;right:0;top:33.2px;height:1.9px;background:rgba(215,250,160,0.78)"></div></div>
<div style="position:absolute;left:1086.26px;top:169.15px;width:40.68px;height:53.20px;background:#80c814;border:1.5px solid #141414;box-sizing:border-box;border-radius:5px;overflow:hidden;box-shadow:inset 0 1px 0 rgba(255,255,255,0.10)"><div style="position:absolute;left:6.0px;top:3.81px;font-size:12.65px;line-height:15px;color:#fbfbf2;white-space:nowrap;-webkit-text-stroke:0.4px #fbfbf2">journ</div><div style="position:absolute;left:0;right:0;top:33.2px;height:1.9px;background:rgba(215,250,160,0.78)"></div></div>
<div style="position:absolute;left:1205.30px;top:169.15px;width:40.68px;height:53.20px;background:#80c814;border:1.5px solid #141414;box-sizing:border-box;border-radius:5px;overflow:hidden;box-shadow:inset 0 1px 0 rgba(255,255,255,0.10)"><div style="position:absolute;left:6.0px;top:3.81px;font-size:12.65px;line-height:15px;color:#fbfbf2;white-space:nowrap;-webkit-text-stroke:0.4px #fbfbf2">journ</div><div style="position:absolute;left:0;right:0;top:33.2px;height:1.9px;background:rgba(215,250,160,0.78)"></div></div>
<div style="position:absolute;left:1244.98px;top:169.15px;width:40.68px;height:53.20px;background:#80c814;border:1.5px solid #141414;box-sizing:border-box;border-radius:5px;overflow:hidden;box-shadow:inset 0 1px 0 rgba(255,255,255,0.10)"><div style="position:absolute;left:6.0px;top:3.81px;font-size:12.65px;line-height:15px;color:#fbfbf2;white-space:nowrap;-webkit-text-stroke:0.4px #fbfbf2">journ</div><div style="position:absolute;left:0;right:0;top:33.2px;height:1.9px;background:rgba(215,250,160,0.78)"></div></div>
<div style="position:absolute;left:1284.66px;top:169.15px;width:40.68px;height:53.20px;background:#80c814;border:1.5px solid #141414;box-sizing:border-box;border-radius:5px;overflow:hidden;box-shadow:inset 0 1px 0 rgba(255,255,255,0.10)"><div style="position:absolute;left:6.0px;top:3.81px;font-size:12.65px;line-height:15px;color:#fbfbf2;white-space:nowrap;-webkit-text-stroke:0.4px #fbfbf2">journ</div><div style="position:absolute;left:0;right:0;top:33.2px;height:1.9px;background:rgba(215,250,160,0.78)"></div></div>
<div style="position:absolute;left:1325.14px;top:169.15px;width:9.50px;height:53.20px;background:#80c814;border:1.5px solid #141414;box-sizing:border-box;border-radius:2px;overflow:hidden;box-shadow:inset 0 1px 0 rgba(255,255,255,0.10)"><div style="position:absolute;left:0;right:0;top:33.2px;height:1.9px;background:rgba(215,250,160,0.78)"></div></div>
<div style="position:absolute;left:449.45px;top:222.47px;width:3.36px;height:53.2px;background:#13c75b;border:1.6px solid #141414;box-sizing:border-box;border-radius:1.5px;overflow:hidden"><div style="position:absolute;left:0;right:0;top:33.5px;height:1px;background:rgba(225,255,225,0.7)"></div><div style="position:absolute;left:2px;top:31.5px;width:1.2px;height:3px;background:rgba(225,255,225,0.6)"></div></div>
<div style="position:absolute;left:451.31px;top:222.47px;width:5.20px;height:53.2px;background:#13c75b;border:1.6px solid #141414;box-sizing:border-box;border-radius:1.5px;overflow:hidden"><div style="position:absolute;left:0;right:0;top:33.5px;height:1px;background:rgba(225,255,225,0.7)"></div><div style="position:absolute;left:2px;top:31.5px;width:1.2px;height:3px;background:rgba(225,255,225,0.6)"></div></div>
<div style="position:absolute;left:455.01px;top:222.47px;width:7.90px;height:53.2px;background:#13c75b;border:1.6px solid #141414;box-sizing:border-box;border-radius:1.5px;overflow:hidden"><div style="position:absolute;left:0;right:0;top:33.5px;height:1px;background:rgba(225,255,225,0.7)"></div><div style="position:absolute;left:2px;top:31.5px;width:1.2px;height:3px;background:rgba(225,255,225,0.6)"></div></div>
<div style="position:absolute;left:461.41px;top:222.47px;width:8.00px;height:53.2px;background:#13c75b;border:1.6px solid #141414;box-sizing:border-box;border-radius:1.5px;overflow:hidden"><div style="position:absolute;left:0;right:0;top:33.5px;height:1px;background:rgba(225,255,225,0.7)"></div><div style="position:absolute;left:2px;top:31.5px;width:1.2px;height:3px;background:rgba(225,255,225,0.6)"></div></div>
<div style="position:absolute;left:467.91px;top:222.47px;width:9.34px;height:53.2px;background:#13c75b;border:1.6px solid #141414;box-sizing:border-box;border-radius:1.5px;overflow:hidden"><div style="position:absolute;left:0;right:0;top:33.5px;height:1px;background:rgba(225,255,225,0.7)"></div><div style="position:absolute;left:2px;top:31.5px;width:1.2px;height:3px;background:rgba(225,255,225,0.6)"></div></div>
<div style="position:absolute;left:476.75px;top:222.47px;width:11.80px;height:53.2px;background:#13c75b;border:1.6px solid #141414;box-sizing:border-box;border-radius:1.5px;overflow:hidden"><div style="position:absolute;left:0;right:0;top:33.5px;height:1px;background:rgba(225,255,225,0.7)"></div><div style="position:absolute;left:2px;top:31.5px;width:1.2px;height:3px;background:rgba(225,255,225,0.6)"></div></div>
<div style="position:absolute;left:487.05px;top:222.47px;width:5.40px;height:53.2px;background:#13c75b;border:1.6px solid #141414;box-sizing:border-box;border-radius:1.5px;overflow:hidden"><div style="position:absolute;left:0;right:0;top:33.5px;height:1px;background:rgba(225,255,225,0.7)"></div><div style="position:absolute;left:2px;top:31.5px;width:1.2px;height:3px;background:rgba(225,255,225,0.6)"></div></div>
<div style="position:absolute;left:490.95px;top:222.47px;width:5.20px;height:53.2px;background:#13c75b;border:1.6px solid #141414;box-sizing:border-box;border-radius:1.5px;overflow:hidden"><div style="position:absolute;left:0;right:0;top:33.5px;height:1px;background:rgba(225,255,225,0.7)"></div><div style="position:absolute;left:2px;top:31.5px;width:1.2px;height:3px;background:rgba(225,255,225,0.6)"></div></div>
<div style="position:absolute;left:494.65px;top:222.47px;width:7.90px;height:53.2px;background:#13c75b;border:1.6px solid #141414;box-sizing:border-box;border-radius:1.5px;overflow:hidden"><div style="position:absolute;left:0;right:0;top:33.5px;height:1px;background:rgba(225,255,225,0.7)"></div><div style="position:absolute;left:2px;top:31.5px;width:1.2px;height:3px;background:rgba(225,255,225,0.6)"></div></div>
<div style="position:absolute;left:501.05px;top:222.47px;width:8.00px;height:53.2px;background:#13c75b;border:1.6px solid #141414;box-sizing:border-box;border-radius:1.5px;overflow:hidden"><div style="position:absolute;left:0;right:0;top:33.5px;height:1px;background:rgba(225,255,225,0.7)"></div><div style="position:absolute;left:2px;top:31.5px;width:1.2px;height:3px;background:rgba(225,255,225,0.6)"></div></div>
<div style="position:absolute;left:507.55px;top:222.47px;width:9.34px;height:53.2px;background:#13c75b;border:1.6px solid #141414;box-sizing:border-box;border-radius:1.5px;overflow:hidden"><div style="position:absolute;left:0;right:0;top:33.5px;height:1px;background:rgba(225,255,225,0.7)"></div><div style="position:absolute;left:2px;top:31.5px;width:1.2px;height:3px;background:rgba(225,255,225,0.6)"></div></div>
<div style="position:absolute;left:516.39px;top:222.47px;width:11.80px;height:53.2px;background:#13c75b;border:1.6px solid #141414;box-sizing:border-box;border-radius:1.5px;overflow:hidden"><div style="position:absolute;left:0;right:0;top:33.5px;height:1px;background:rgba(225,255,225,0.7)"></div><div style="position:absolute;left:2px;top:31.5px;width:1.2px;height:3px;background:rgba(225,255,225,0.6)"></div></div>
<div style="position:absolute;left:526.69px;top:222.47px;width:5.40px;height:53.2px;background:#13c75b;border:1.6px solid #141414;box-sizing:border-box;border-radius:1.5px;overflow:hidden"><div style="position:absolute;left:0;right:0;top:33.5px;height:1px;background:rgba(225,255,225,0.7)"></div><div style="position:absolute;left:2px;top:31.5px;width:1.2px;height:3px;background:rgba(225,255,225,0.6)"></div></div>
<div style="position:absolute;left:530.59px;top:222.47px;width:5.20px;height:53.2px;background:#13c75b;border:1.6px solid #141414;box-sizing:border-box;border-radius:1.5px;overflow:hidden"><div style="position:absolute;left:0;right:0;top:33.5px;height:1px;background:rgba(225,255,225,0.7)"></div><div style="position:absolute;left:2px;top:31.5px;width:1.2px;height:3px;background:rgba(225,255,225,0.6)"></div></div>
<div style="position:absolute;left:534.29px;top:222.47px;width:7.90px;height:53.2px;background:#13c75b;border:1.6px solid #141414;box-sizing:border-box;border-radius:1.5px;overflow:hidden"><div style="position:absolute;left:0;right:0;top:33.5px;height:1px;background:rgba(225,255,225,0.7)"></div><div style="position:absolute;left:2px;top:31.5px;width:1.2px;height:3px;background:rgba(225,255,225,0.6)"></div></div>
<div style="position:absolute;left:540.69px;top:222.47px;width:8.00px;height:53.2px;background:#13c75b;border:1.6px solid #141414;box-sizing:border-box;border-radius:1.5px;overflow:hidden"><div style="position:absolute;left:0;right:0;top:33.5px;height:1px;background:rgba(225,255,225,0.7)"></div><div style="position:absolute;left:2px;top:31.5px;width:1.2px;height:3px;background:rgba(225,255,225,0.6)"></div></div>
<div style="position:absolute;left:547.19px;top:222.47px;width:9.34px;height:53.2px;background:#13c75b;border:1.6px solid #141414;box-sizing:border-box;border-radius:1.5px;overflow:hidden"><div style="position:absolute;left:0;right:0;top:33.5px;height:1px;background:rgba(225,255,225,0.7)"></div><div style="position:absolute;left:2px;top:31.5px;width:1.2px;height:3px;background:rgba(225,255,225,0.6)"></div></div>
<div style="position:absolute;left:556.03px;top:222.47px;width:11.80px;height:53.2px;background:#13c75b;border:1.6px solid #141414;box-sizing:border-box;border-radius:1.5px;overflow:hidden"><div style="position:absolute;left:0;right:0;top:33.5px;height:1px;background:rgba(225,255,225,0.7)"></div><div style="position:absolute;left:2px;top:31.5px;width:1.2px;height:3px;background:rgba(225,255,225,0.6)"></div></div>
<div style="position:absolute;left:566.33px;top:222.47px;width:5.40px;height:53.2px;background:#13c75b;border:1.6px solid #141414;box-sizing:border-box;border-radius:1.5px;overflow:hidden"><div style="position:absolute;left:0;right:0;top:33.5px;height:1px;background:rgba(225,255,225,0.7)"></div><div style="position:absolute;left:2px;top:31.5px;width:1.2px;height:3px;background:rgba(225,255,225,0.6)"></div></div>
<div style="position:absolute;left:570.23px;top:222.47px;width:5.20px;height:53.2px;background:#13c75b;border:1.6px solid #141414;box-sizing:border-box;border-radius:1.5px;overflow:hidden"><div style="position:absolute;left:0;right:0;top:33.5px;height:1px;background:rgba(225,255,225,0.7)"></div><div style="position:absolute;left:2px;top:31.5px;width:1.2px;height:3px;background:rgba(225,255,225,0.6)"></div></div>
<div style="position:absolute;left:573.93px;top:222.47px;width:7.90px;height:53.2px;background:#13c75b;border:1.6px solid #141414;box-sizing:border-box;border-radius:1.5px;overflow:hidden"><div style="position:absolute;left:0;right:0;top:33.5px;height:1px;background:rgba(225,255,225,0.7)"></div><div style="position:absolute;left:2px;top:31.5px;width:1.2px;height:3px;background:rgba(225,255,225,0.6)"></div></div>
<div style="position:absolute;left:580.33px;top:222.47px;width:8.00px;height:53.2px;background:#13c75b;border:1.6px solid #141414;box-sizing:border-box;border-radius:1.5px;overflow:hidden"><div style="position:absolute;left:0;right:0;top:33.5px;height:1px;background:rgba(225,255,225,0.7)"></div><div style="position:absolute;left:2px;top:31.5px;width:1.2px;height:3px;background:rgba(225,255,225,0.6)"></div></div>
<div style="position:absolute;left:586.83px;top:222.47px;width:9.34px;height:53.2px;background:#13c75b;border:1.6px solid #141414;box-sizing:border-box;border-radius:1.5px;overflow:hidden"><div style="position:absolute;left:0;right:0;top:33.5px;height:1px;background:rgba(225,255,225,0.7)"></div><div style="position:absolute;left:2px;top:31.5px;width:1.2px;height:3px;background:rgba(225,255,225,0.6)"></div></div>
<div style="position:absolute;left:595.67px;top:222.47px;width:11.80px;height:53.2px;background:#13c75b;border:1.6px solid #141414;box-sizing:border-box;border-radius:1.5px;overflow:hidden"><div style="position:absolute;left:0;right:0;top:33.5px;height:1px;background:rgba(225,255,225,0.7)"></div><div style="position:absolute;left:2px;top:31.5px;width:1.2px;height:3px;background:rgba(225,255,225,0.6)"></div></div>
<div style="position:absolute;left:605.97px;top:222.47px;width:5.40px;height:53.2px;background:#13c75b;border:1.6px solid #141414;box-sizing:border-box;border-radius:1.5px;overflow:hidden"><div style="position:absolute;left:0;right:0;top:33.5px;height:1px;background:rgba(225,255,225,0.7)"></div><div style="position:absolute;left:2px;top:31.5px;width:1.2px;height:3px;background:rgba(225,255,225,0.6)"></div></div>
<div style="position:absolute;left:609.87px;top:222.47px;width:5.20px;height:53.2px;background:#13c75b;border:1.6px solid #141414;box-sizing:border-box;border-radius:1.5px;overflow:hidden"><div style="position:absolute;left:0;right:0;top:33.5px;height:1px;background:rgba(225,255,225,0.7)"></div><div style="position:absolute;left:2px;top:31.5px;width:1.2px;height:3px;background:rgba(225,255,225,0.6)"></div></div>
<div style="position:absolute;left:613.57px;top:222.47px;width:7.90px;height:53.2px;background:#13c75b;border:1.6px solid #141414;box-sizing:border-box;border-radius:1.5px;overflow:hidden"><div style="position:absolute;left:0;right:0;top:33.5px;height:1px;background:rgba(225,255,225,0.7)"></div><div style="position:absolute;left:2px;top:31.5px;width:1.2px;height:3px;background:rgba(225,255,225,0.6)"></div></div>
<div style="position:absolute;left:619.97px;top:222.47px;width:8.00px;height:53.2px;background:#13c75b;border:1.6px solid #141414;box-sizing:border-box;border-radius:1.5px;overflow:hidden"><div style="position:absolute;left:0;right:0;top:33.5px;height:1px;background:rgba(225,255,225,0.7)"></div><div style="position:absolute;left:2px;top:31.5px;width:1.2px;height:3px;background:rgba(225,255,225,0.6)"></div></div>
<div style="position:absolute;left:626.47px;top:222.47px;width:9.34px;height:53.2px;background:#13c75b;border:1.6px solid #141414;box-sizing:border-box;border-radius:1.5px;overflow:hidden"><div style="position:absolute;left:0;right:0;top:33.5px;height:1px;background:rgba(225,255,225,0.7)"></div><div style="position:absolute;left:2px;top:31.5px;width:1.2px;height:3px;background:rgba(225,255,225,0.6)"></div></div>
<div style="position:absolute;left:635.31px;top:222.47px;width:11.80px;height:53.2px;background:#13c75b;border:1.6px solid #141414;box-sizing:border-box;border-radius:1.5px;overflow:hidden"><div style="position:absolute;left:0;right:0;top:33.5px;height:1px;background:rgba(225,255,225,0.7)"></div><div style="position:absolute;left:2px;top:31.5px;width:1.2px;height:3px;background:rgba(225,255,225,0.6)"></div></div>
<div style="position:absolute;left:645.61px;top:222.47px;width:5.40px;height:53.2px;background:#13c75b;border:1.6px solid #141414;box-sizing:border-box;border-radius:1.5px;overflow:hidden"><div style="position:absolute;left:0;right:0;top:33.5px;height:1px;background:rgba(225,255,225,0.7)"></div><div style="position:absolute;left:2px;top:31.5px;width:1.2px;height:3px;background:rgba(225,255,225,0.6)"></div></div>
<div style="position:absolute;left:649.51px;top:222.47px;width:5.20px;height:53.2px;background:#13c75b;border:1.6px solid #141414;box-sizing:border-box;border-radius:1.5px;overflow:hidden"><div style="position:absolute;left:0;right:0;top:33.5px;height:1px;background:rgba(225,255,225,0.7)"></div><div style="position:absolute;left:2px;top:31.5px;width:1.2px;height:3px;background:rgba(225,255,225,0.6)"></div></div>
<div style="position:absolute;left:653.21px;top:222.47px;width:7.90px;height:53.2px;background:#13c75b;border:1.6px solid #141414;box-sizing:border-box;border-radius:1.5px;overflow:hidden"><div style="position:absolute;left:0;right:0;top:33.5px;height:1px;background:rgba(225,255,225,0.7)"></div><div style="position:absolute;left:2px;top:31.5px;width:1.2px;height:3px;background:rgba(225,255,225,0.6)"></div></div>
<div style="position:absolute;left:659.61px;top:222.47px;width:8.00px;height:53.2px;background:#13c75b;border:1.6px solid #141414;box-sizing:border-box;border-radius:1.5px;overflow:hidden"><div style="position:absolute;left:0;right:0;top:33.5px;height:1px;background:rgba(225,255,225,0.7)"></div><div style="position:absolute;left:2px;top:31.5px;width:1.2px;height:3px;background:rgba(225,255,225,0.6)"></div></div>
<div style="position:absolute;left:666.11px;top:222.47px;width:9.34px;height:53.2px;background:#13c75b;border:1.6px solid #141414;box-sizing:border-box;border-radius:1.5px;overflow:hidden"><div style="position:absolute;left:0;right:0;top:33.5px;height:1px;background:rgba(225,255,225,0.7)"></div><div style="position:absolute;left:2px;top:31.5px;width:1.2px;height:3px;background:rgba(225,255,225,0.6)"></div></div>
<div style="position:absolute;left:674.95px;top:222.47px;width:11.80px;height:53.2px;background:#13c75b;border:1.6px solid #141414;box-sizing:border-box;border-radius:1.5px;overflow:hidden"><div style="position:absolute;left:0;right:0;top:33.5px;height:1px;background:rgba(225,255,225,0.7)"></div><div style="position:absolute;left:2px;top:31.5px;width:1.2px;height:3px;background:rgba(225,255,225,0.6)"></div></div>
<div style="position:absolute;left:685.25px;top:222.47px;width:5.40px;height:53.2px;background:#13c75b;border:1.6px solid #141414;box-sizing:border-box;border-radius:1.5px;overflow:hidden"><div style="position:absolute;left:0;right:0;top:33.5px;height:1px;background:rgba(225,255,225,0.7)"></div><div style="position:absolute;left:2px;top:31.5px;width:1.2px;height:3px;background:rgba(225,255,225,0.6)"></div></div>
<div style="position:absolute;left:689.15px;top:222.47px;width:5.20px;height:53.2px;background:#13c75b;border:1.6px solid #141414;box-sizing:border-box;border-radius:1.5px;overflow:hidden"><div style="position:absolute;left:0;right:0;top:33.5px;height:1px;background:rgba(225,255,225,0.7)"></div><div style="position:absolute;left:2px;top:31.5px;width:1.2px;height:3px;background:rgba(225,255,225,0.6)"></div></div>
<div style="position:absolute;left:692.85px;top:222.47px;width:7.90px;height:53.2px;background:#13c75b;border:1.6px solid #141414;box-sizing:border-box;border-radius:1.5px;overflow:hidden"><div style="position:absolute;left:0;right:0;top:33.5px;height:1px;background:rgba(225,255,225,0.7)"></div><div style="position:absolute;left:2px;top:31.5px;width:1.2px;height:3px;background:rgba(225,255,225,0.6)"></div></div>
<div style="position:absolute;left:699.25px;top:222.47px;width:8.00px;height:53.2px;background:#13c75b;border:1.6px solid #141414;box-sizing:border-box;border-radius:1.5px;overflow:hidden"><div style="position:absolute;left:0;right:0;top:33.5px;height:1px;background:rgba(225,255,225,0.7)"></div><div style="position:absolute;left:2px;top:31.5px;width:1.2px;height:3px;background:rgba(225,255,225,0.6)"></div></div>
<div style="position:absolute;left:705.75px;top:222.47px;width:9.34px;height:53.2px;background:#13c75b;border:1.6px solid #141414;box-sizing:border-box;border-radius:1.5px;overflow:hidden"><div style="position:absolute;left:0;right:0;top:33.5px;height:1px;background:rgba(225,255,225,0.7)"></div><div style="position:absolute;left:2px;top:31.5px;width:1.2px;height:3px;background:rgba(225,255,225,0.6)"></div></div>
<div style="position:absolute;left:714.59px;top:222.47px;width:11.80px;height:53.2px;background:#13c75b;border:1.6px solid #141414;box-sizing:border-box;border-radius:1.5px;overflow:hidden"><div style="position:absolute;left:0;right:0;top:33.5px;height:1px;background:rgba(225,255,225,0.7)"></div><div style="position:absolute;left:2px;top:31.5px;width:1.2px;height:3px;background:rgba(225,255,225,0.6)"></div></div>
<div style="position:absolute;left:724.89px;top:222.47px;width:5.40px;height:53.2px;background:#13c75b;border:1.6px solid #141414;box-sizing:border-box;border-radius:1.5px;overflow:hidden"><div style="position:absolute;left:0;right:0;top:33.5px;height:1px;background:rgba(225,255,225,0.7)"></div><div style="position:absolute;left:2px;top:31.5px;width:1.2px;height:3px;background:rgba(225,255,225,0.6)"></div></div>
<div style="position:absolute;left:728.79px;top:222.47px;width:5.20px;height:53.2px;background:#13c75b;border:1.6px solid #141414;box-sizing:border-box;border-radius:1.5px;overflow:hidden"><div style="position:absolute;left:0;right:0;top:33.5px;height:1px;background:rgba(225,255,225,0.7)"></div><div style="position:absolute;left:2px;top:31.5px;width:1.2px;height:3px;background:rgba(225,255,225,0.6)"></div></div>
<div style="position:absolute;left:732.49px;top:222.47px;width:7.90px;height:53.2px;background:#13c75b;border:1.6px solid #141414;box-sizing:border-box;border-radius:1.5px;overflow:hidden"><div style="position:absolute;left:0;right:0;top:33.5px;height:1px;background:rgba(225,255,225,0.7)"></div><div style="position:absolute;left:2px;top:31.5px;width:1.2px;height:3px;background:rgba(225,255,225,0.6)"></div></div>
<div style="position:absolute;left:738.89px;top:222.47px;width:8.00px;height:53.2px;background:#13c75b;border:1.6px solid #141414;box-sizing:border-box;border-radius:1.5px;overflow:hidden"><div style="position:absolute;left:0;right:0;top:33.5px;height:1px;background:rgba(225,255,225,0.7)"></div><div style="position:absolute;left:2px;top:31.5px;width:1.2px;height:3px;background:rgba(225,255,225,0.6)"></div></div>
<div style="position:absolute;left:745.39px;top:222.47px;width:9.34px;height:53.2px;background:#13c75b;border:1.6px solid #141414;box-sizing:border-box;border-radius:1.5px;overflow:hidden"><div style="position:absolute;left:0;right:0;top:33.5px;height:1px;background:rgba(225,255,225,0.7)"></div><div style="position:absolute;left:2px;top:31.5px;width:1.2px;height:3px;background:rgba(225,255,225,0.6)"></div></div>
<div style="position:absolute;left:754.23px;top:222.47px;width:11.80px;height:53.2px;background:#13c75b;border:1.6px solid #141414;box-sizing:border-box;border-radius:1.5px;overflow:hidden"><div style="position:absolute;left:0;right:0;top:33.5px;height:1px;background:rgba(225,255,225,0.7)"></div><div style="position:absolute;left:2px;top:31.5px;width:1.2px;height:3px;background:rgba(225,255,225,0.6)"></div></div>
<div style="position:absolute;left:764.53px;top:222.47px;width:5.40px;height:53.2px;background:#13c75b;border:1.6px solid #141414;box-sizing:border-box;border-radius:1.5px;overflow:hidden"><div style="position:absolute;left:0;right:0;top:33.5px;height:1px;background:rgba(225,255,225,0.7)"></div><div style="position:absolute;left:2px;top:31.5px;width:1.2px;height:3px;background:rgba(225,255,225,0.6)"></div></div>
<div style="position:absolute;left:768.43px;top:222.47px;width:5.20px;height:53.2px;background:#13c75b;border:1.6px solid #141414;box-sizing:border-box;border-radius:1.5px;overflow:hidden"><div style="position:absolute;left:0;right:0;top:33.5px;height:1px;background:rgba(225,255,225,0.7)"></div><div style="position:absolute;left:2px;top:31.5px;width:1.2px;height:3px;background:rgba(225,255,225,0.6)"></div></div>
<div style="position:absolute;left:772.13px;top:222.47px;width:7.90px;height:53.2px;background:#13c75b;border:1.6px solid #141414;box-sizing:border-box;border-radius:1.5px;overflow:hidden"><div style="position:absolute;left:0;right:0;top:33.5px;height:1px;background:rgba(225,255,225,0.7)"></div><div style="position:absolute;left:2px;top:31.5px;width:1.2px;height:3px;background:rgba(225,255,225,0.6)"></div></div>
<div style="position:absolute;left:778.53px;top:222.47px;width:8.00px;height:53.2px;background:#13c75b;border:1.6px solid #141414;box-sizing:border-box;border-radius:1.5px;overflow:hidden"><div style="position:absolute;left:0;right:0;top:33.5px;height:1px;background:rgba(225,255,225,0.7)"></div><div style="position:absolute;left:2px;top:31.5px;width:1.2px;height:3px;background:rgba(225,255,225,0.6)"></div></div>
<div style="position:absolute;left:785.03px;top:222.47px;width:9.34px;height:53.2px;background:#13c75b;border:1.6px solid #141414;box-sizing:border-box;border-radius:1.5px;overflow:hidden"><div style="position:absolute;left:0;right:0;top:33.5px;height:1px;background:rgba(225,255,225,0.7)"></div><div style="position:absolute;left:2px;top:31.5px;width:1.2px;height:3px;background:rgba(225,255,225,0.6)"></div></div>
<div style="position:absolute;left:793.87px;top:222.47px;width:11.80px;height:53.2px;background:#13c75b;border:1.6px solid #141414;box-sizing:border-box;border-radius:1.5px;overflow:hidden"><div style="position:absolute;left:0;right:0;top:33.5px;height:1px;background:rgba(225,255,225,0.7)"></div><div style="position:absolute;left:2px;top:31.5px;width:1.2px;height:3px;background:rgba(225,255,225,0.6)"></div></div>
<div style="position:absolute;left:804.17px;top:222.47px;width:5.40px;height:53.2px;background:#13c75b;border:1.6px solid #141414;box-sizing:border-box;border-radius:1.5px;overflow:hidden"><div style="position:absolute;left:0;right:0;top:33.5px;height:1px;background:rgba(225,255,225,0.7)"></div><div style="position:absolute;left:2px;top:31.5px;width:1.2px;height:3px;background:rgba(225,255,225,0.6)"></div></div>
<div style="position:absolute;left:808.07px;top:222.47px;width:5.20px;height:53.2px;background:#13c75b;border:1.6px solid #141414;box-sizing:border-box;border-radius:1.5px;overflow:hidden"><div style="position:absolute;left:0;right:0;top:33.5px;height:1px;background:rgba(225,255,225,0.7)"></div><div style="position:absolute;left:2px;top:31.5px;width:1.2px;height:3px;background:rgba(225,255,225,0.6)"></div></div>
<div style="position:absolute;left:811.77px;top:222.47px;width:7.90px;height:53.2px;background:#13c75b;border:1.6px solid #141414;box-sizing:border-box;border-radius:1.5px;overflow:hidden"><div style="position:absolute;left:0;right:0;top:33.5px;height:1px;background:rgba(225,255,225,0.7)"></div><div style="position:absolute;left:2px;top:31.5px;width:1.2px;height:3px;background:rgba(225,255,225,0.6)"></div></div>
<div style="position:absolute;left:818.17px;top:222.47px;width:8.00px;height:53.2px;background:#13c75b;border:1.6px solid #141414;box-sizing:border-box;border-radius:1.5px;overflow:hidden"><div style="position:absolute;left:0;right:0;top:33.5px;height:1px;background:rgba(225,255,225,0.7)"></div><div style="position:absolute;left:2px;top:31.5px;width:1.2px;height:3px;background:rgba(225,255,225,0.6)"></div></div>
<div style="position:absolute;left:824.67px;top:222.47px;width:9.34px;height:53.2px;background:#13c75b;border:1.6px solid #141414;box-sizing:border-box;border-radius:1.5px;overflow:hidden"><div style="position:absolute;left:0;right:0;top:33.5px;height:1px;background:rgba(225,255,225,0.7)"></div><div style="position:absolute;left:2px;top:31.5px;width:1.2px;height:3px;background:rgba(225,255,225,0.6)"></div></div>
<div style="position:absolute;left:833.51px;top:222.47px;width:11.80px;height:53.2px;background:#13c75b;border:1.6px solid #141414;box-sizing:border-box;border-radius:1.5px;overflow:hidden"><div style="position:absolute;left:0;right:0;top:33.5px;height:1px;background:rgba(225,255,225,0.7)"></div><div style="position:absolute;left:2px;top:31.5px;width:1.2px;height:3px;background:rgba(225,255,225,0.6)"></div></div>
<div style="position:absolute;left:843.81px;top:222.47px;width:5.40px;height:53.2px;background:#13c75b;border:1.6px solid #141414;box-sizing:border-box;border-radius:1.5px;overflow:hidden"><div style="position:absolute;left:0;right:0;top:33.5px;height:1px;background:rgba(225,255,225,0.7)"></div><div style="position:absolute;left:2px;top:31.5px;width:1.2px;height:3px;background:rgba(225,255,225,0.6)"></div></div>
<div style="position:absolute;left:847.71px;top:222.47px;width:5.20px;height:53.2px;background:#13c75b;border:1.6px solid #141414;box-sizing:border-box;border-radius:1.5px;overflow:hidden"><div style="position:absolute;left:0;right:0;top:33.5px;height:1px;background:rgba(225,255,225,0.7)"></div><div style="position:absolute;left:2px;top:31.5px;width:1.2px;height:3px;background:rgba(225,255,225,0.6)"></div></div>
<div style="position:absolute;left:851.41px;top:222.47px;width:7.90px;height:53.2px;background:#13c75b;border:1.6px solid #141414;box-sizing:border-box;border-radius:1.5px;overflow:hidden"><div style="position:absolute;left:0;right:0;top:33.5px;height:1px;background:rgba(225,255,225,0.7)"></div><div style="position:absolute;left:2px;top:31.5px;width:1.2px;height:3px;background:rgba(225,255,225,0.6)"></div></div>
<div style="position:absolute;left:857.81px;top:222.47px;width:8.00px;height:53.2px;background:#13c75b;border:1.6px solid #141414;box-sizing:border-box;border-radius:1.5px;overflow:hidden"><div style="position:absolute;left:0;right:0;top:33.5px;height:1px;background:rgba(225,255,225,0.7)"></div><div style="position:absolute;left:2px;top:31.5px;width:1.2px;height:3px;background:rgba(225,255,225,0.6)"></div></div>
<div style="position:absolute;left:864.31px;top:222.47px;width:9.34px;height:53.2px;background:#13c75b;border:1.6px solid #141414;box-sizing:border-box;border-radius:1.5px;overflow:hidden"><div style="position:absolute;left:0;right:0;top:33.5px;height:1px;background:rgba(225,255,225,0.7)"></div><div style="position:absolute;left:2px;top:31.5px;width:1.2px;height:3px;background:rgba(225,255,225,0.6)"></div></div>
<div style="position:absolute;left:873.15px;top:222.47px;width:11.80px;height:53.2px;background:#13c75b;border:1.6px solid #141414;box-sizing:border-box;border-radius:1.5px;overflow:hidden"><div style="position:absolute;left:0;right:0;top:33.5px;height:1px;background:rgba(225,255,225,0.7)"></div><div style="position:absolute;left:2px;top:31.5px;width:1.2px;height:3px;background:rgba(225,255,225,0.6)"></div></div>
<div style="position:absolute;left:883.45px;top:222.47px;width:5.40px;height:53.2px;background:#13c75b;border:1.6px solid #141414;box-sizing:border-box;border-radius:1.5px;overflow:hidden"><div style="position:absolute;left:0;right:0;top:33.5px;height:1px;background:rgba(225,255,225,0.7)"></div><div style="position:absolute;left:2px;top:31.5px;width:1.2px;height:3px;background:rgba(225,255,225,0.6)"></div></div>
<div style="position:absolute;left:887.35px;top:222.47px;width:5.20px;height:53.2px;background:#13c75b;border:1.6px solid #141414;box-sizing:border-box;border-radius:1.5px;overflow:hidden"><div style="position:absolute;left:0;right:0;top:33.5px;height:1px;background:rgba(225,255,225,0.7)"></div><div style="position:absolute;left:2px;top:31.5px;width:1.2px;height:3px;background:rgba(225,255,225,0.6)"></div></div>
<div style="position:absolute;left:891.05px;top:222.47px;width:7.90px;height:53.2px;background:#13c75b;border:1.6px solid #141414;box-sizing:border-box;border-radius:1.5px;overflow:hidden"><div style="position:absolute;left:0;right:0;top:33.5px;height:1px;background:rgba(225,255,225,0.7)"></div><div style="position:absolute;left:2px;top:31.5px;width:1.2px;height:3px;background:rgba(225,255,225,0.6)"></div></div>
<div style="position:absolute;left:897.45px;top:222.47px;width:8.00px;height:53.2px;background:#13c75b;border:1.6px solid #141414;box-sizing:border-box;border-radius:1.5px;overflow:hidden"><div style="position:absolute;left:0;right:0;top:33.5px;height:1px;background:rgba(225,255,225,0.7)"></div><div style="position:absolute;left:2px;top:31.5px;width:1.2px;height:3px;background:rgba(225,255,225,0.6)"></div></div>
<div style="position:absolute;left:903.95px;top:222.47px;width:9.34px;height:53.2px;background:#13c75b;border:1.6px solid #141414;box-sizing:border-box;border-radius:1.5px;overflow:hidden"><div style="position:absolute;left:0;right:0;top:33.5px;height:1px;background:rgba(225,255,225,0.7)"></div><div style="position:absolute;left:2px;top:31.5px;width:1.2px;height:3px;background:rgba(225,255,225,0.6)"></div></div>
<div style="position:absolute;left:912.79px;top:222.47px;width:11.80px;height:53.2px;background:#13c75b;border:1.6px solid #141414;box-sizing:border-box;border-radius:1.5px;overflow:hidden"><div style="position:absolute;left:0;right:0;top:33.5px;height:1px;background:rgba(225,255,225,0.7)"></div><div style="position:absolute;left:2px;top:31.5px;width:1.2px;height:3px;background:rgba(225,255,225,0.6)"></div></div>
<div style="position:absolute;left:923.09px;top:222.47px;width:5.40px;height:53.2px;background:#13c75b;border:1.6px solid #141414;box-sizing:border-box;border-radius:1.5px;overflow:hidden"><div style="position:absolute;left:0;right:0;top:33.5px;height:1px;background:rgba(225,255,225,0.7)"></div><div style="position:absolute;left:2px;top:31.5px;width:1.2px;height:3px;background:rgba(225,255,225,0.6)"></div></div>
<div style="position:absolute;left:926.99px;top:222.47px;width:5.20px;height:53.2px;background:#13c75b;border:1.6px solid #141414;box-sizing:border-box;border-radius:1.5px;overflow:hidden"><div style="position:absolute;left:0;right:0;top:33.5px;height:1px;background:rgba(225,255,225,0.7)"></div><div style="position:absolute;left:2px;top:31.5px;width:1.2px;height:3px;background:rgba(225,255,225,0.6)"></div></div>
<div style="position:absolute;left:930.69px;top:222.47px;width:7.90px;height:53.2px;background:#13c75b;border:1.6px solid #141414;box-sizing:border-box;border-radius:1.5px;overflow:hidden"><div style="position:absolute;left:0;right:0;top:33.5px;height:1px;background:rgba(225,255,225,0.7)"></div><div style="position:absolute;left:2px;top:31.5px;width:1.2px;height:3px;background:rgba(225,255,225,0.6)"></div></div>
<div style="position:absolute;left:937.09px;top:222.47px;width:8.00px;height:53.2px;background:#13c75b;border:1.6px solid #141414;box-sizing:border-box;border-radius:1.5px;overflow:hidden"><div style="position:absolute;left:0;right:0;top:33.5px;height:1px;background:rgba(225,255,225,0.7)"></div><div style="position:absolute;left:2px;top:31.5px;width:1.2px;height:3px;background:rgba(225,255,225,0.6)"></div></div>
<div style="position:absolute;left:943.59px;top:222.47px;width:9.34px;height:53.2px;background:#13c75b;border:1.6px solid #141414;box-sizing:border-box;border-radius:1.5px;overflow:hidden"><div style="position:absolute;left:0;right:0;top:33.5px;height:1px;background:rgba(225,255,225,0.7)"></div><div style="position:absolute;left:2px;top:31.5px;width:1.2px;height:3px;background:rgba(225,255,225,0.6)"></div></div>
<div style="position:absolute;left:952.43px;top:222.47px;width:11.80px;height:53.2px;background:#13c75b;border:1.6px solid #141414;box-sizing:border-box;border-radius:1.5px;overflow:hidden"><div style="position:absolute;left:0;right:0;top:33.5px;height:1px;background:rgba(225,255,225,0.7)"></div><div style="position:absolute;left:2px;top:31.5px;width:1.2px;height:3px;background:rgba(225,255,225,0.6)"></div></div>
<div style="position:absolute;left:962.73px;top:222.47px;width:5.40px;height:53.2px;background:#13c75b;border:1.6px solid #141414;box-sizing:border-box;border-radius:1.5px;overflow:hidden"><div style="position:absolute;left:0;right:0;top:33.5px;height:1px;background:rgba(225,255,225,0.7)"></div><div style="position:absolute;left:2px;top:31.5px;width:1.2px;height:3px;background:rgba(225,255,225,0.6)"></div></div>
<div style="position:absolute;left:966.63px;top:222.47px;width:5.20px;height:53.2px;background:#13c75b;border:1.6px solid #141414;box-sizing:border-box;border-radius:1.5px;overflow:hidden"><div style="position:absolute;left:0;right:0;top:33.5px;height:1px;background:rgba(225,255,225,0.7)"></div><div style="position:absolute;left:2px;top:31.5px;width:1.2px;height:3px;background:rgba(225,255,225,0.6)"></div></div>
<div style="position:absolute;left:970.33px;top:222.47px;width:7.90px;height:53.2px;background:#13c75b;border:1.6px solid #141414;box-sizing:border-box;border-radius:1.5px;overflow:hidden"><div style="position:absolute;left:0;right:0;top:33.5px;height:1px;background:rgba(225,255,225,0.7)"></div><div style="position:absolute;left:2px;top:31.5px;width:1.2px;height:3px;background:rgba(225,255,225,0.6)"></div></div>
<div style="position:absolute;left:976.73px;top:222.47px;width:8.00px;height:53.2px;background:#13c75b;border:1.6px solid #141414;box-sizing:border-box;border-radius:1.5px;overflow:hidden"><div style="position:absolute;left:0;right:0;top:33.5px;height:1px;background:rgba(225,255,225,0.7)"></div><div style="position:absolute;left:2px;top:31.5px;width:1.2px;height:3px;background:rgba(225,255,225,0.6)"></div></div>
<div style="position:absolute;left:983.23px;top:222.47px;width:9.34px;height:53.2px;background:#13c75b;border:1.6px solid #141414;box-sizing:border-box;border-radius:1.5px;overflow:hidden"><div style="position:absolute;left:0;right:0;top:33.5px;height:1px;background:rgba(225,255,225,0.7)"></div><div style="position:absolute;left:2px;top:31.5px;width:1.2px;height:3px;background:rgba(225,255,225,0.6)"></div></div>
<div style="position:absolute;left:992.07px;top:222.47px;width:11.80px;height:53.2px;background:#13c75b;border:1.6px solid #141414;box-sizing:border-box;border-radius:1.5px;overflow:hidden"><div style="position:absolute;left:0;right:0;top:33.5px;height:1px;background:rgba(225,255,225,0.7)"></div><div style="position:absolute;left:2px;top:31.5px;width:1.2px;height:3px;background:rgba(225,255,225,0.6)"></div></div>
<div style="position:absolute;left:1002.37px;top:222.47px;width:5.40px;height:53.2px;background:#13c75b;border:1.6px solid #141414;box-sizing:border-box;border-radius:1.5px;overflow:hidden"><div style="position:absolute;left:0;right:0;top:33.5px;height:1px;background:rgba(225,255,225,0.7)"></div><div style="position:absolute;left:2px;top:31.5px;width:1.2px;height:3px;background:rgba(225,255,225,0.6)"></div></div>
<div style="position:absolute;left:1006.27px;top:222.47px;width:5.20px;height:53.2px;background:#13c75b;border:1.6px solid #141414;box-sizing:border-box;border-radius:1.5px;overflow:hidden"><div style="position:absolute;left:0;right:0;top:33.5px;height:1px;background:rgba(225,255,225,0.7)"></div><div style="position:absolute;left:2px;top:31.5px;width:1.2px;height:3px;background:rgba(225,255,225,0.6)"></div></div>
<div style="position:absolute;left:1009.97px;top:222.47px;width:7.90px;height:53.2px;background:#13c75b;border:1.6px solid #141414;box-sizing:border-box;border-radius:1.5px;overflow:hidden"><div style="position:absolute;left:0;right:0;top:33.5px;height:1px;background:rgba(225,255,225,0.7)"></div><div style="position:absolute;left:2px;top:31.5px;width:1.2px;height:3px;background:rgba(225,255,225,0.6)"></div></div>
<div style="position:absolute;left:1016.37px;top:222.47px;width:8.00px;height:53.2px;background:#13c75b;border:1.6px solid #141414;box-sizing:border-box;border-radius:1.5px;overflow:hidden"><div style="position:absolute;left:0;right:0;top:33.5px;height:1px;background:rgba(225,255,225,0.7)"></div><div style="position:absolute;left:2px;top:31.5px;width:1.2px;height:3px;background:rgba(225,255,225,0.6)"></div></div>
<div style="position:absolute;left:1022.87px;top:222.47px;width:9.34px;height:53.2px;background:#13c75b;border:1.6px solid #141414;box-sizing:border-box;border-radius:1.5px;overflow:hidden"><div style="position:absolute;left:0;right:0;top:33.5px;height:1px;background:rgba(225,255,225,0.7)"></div><div style="position:absolute;left:2px;top:31.5px;width:1.2px;height:3px;background:rgba(225,255,225,0.6)"></div></div>
<div style="position:absolute;left:1031.71px;top:222.47px;width:11.80px;height:53.2px;background:#13c75b;border:1.6px solid #141414;box-sizing:border-box;border-radius:1.5px;overflow:hidden"><div style="position:absolute;left:0;right:0;top:33.5px;height:1px;background:rgba(225,255,225,0.7)"></div><div style="position:absolute;left:2px;top:31.5px;width:1.2px;height:3px;background:rgba(225,255,225,0.6)"></div></div>
<div style="position:absolute;left:1042.01px;top:222.47px;width:5.40px;height:53.2px;background:#13c75b;border:1.6px solid #141414;box-sizing:border-box;border-radius:1.5px;overflow:hidden"><div style="position:absolute;left:0;right:0;top:33.5px;height:1px;background:rgba(225,255,225,0.7)"></div><div style="position:absolute;left:2px;top:31.5px;width:1.2px;height:3px;background:rgba(225,255,225,0.6)"></div></div>
<div style="position:absolute;left:1045.91px;top:222.47px;width:5.20px;height:53.2px;background:#13c75b;border:1.6px solid #141414;box-sizing:border-box;border-radius:1.5px;overflow:hidden"><div style="position:absolute;left:0;right:0;top:33.5px;height:1px;background:rgba(225,255,225,0.7)"></div><div style="position:absolute;left:2px;top:31.5px;width:1.2px;height:3px;background:rgba(225,255,225,0.6)"></div></div>
<div style="position:absolute;left:1049.61px;top:222.47px;width:7.90px;height:53.2px;background:#13c75b;border:1.6px solid #141414;box-sizing:border-box;border-radius:1.5px;overflow:hidden"><div style="position:absolute;left:0;right:0;top:33.5px;height:1px;background:rgba(225,255,225,0.7)"></div><div style="position:absolute;left:2px;top:31.5px;width:1.2px;height:3px;background:rgba(225,255,225,0.6)"></div></div>
<div style="position:absolute;left:1056.01px;top:222.47px;width:8.00px;height:53.2px;background:#13c75b;border:1.6px solid #141414;box-sizing:border-box;border-radius:1.5px;overflow:hidden"><div style="position:absolute;left:0;right:0;top:33.5px;height:1px;background:rgba(225,255,225,0.7)"></div><div style="position:absolute;left:2px;top:31.5px;width:1.2px;height:3px;background:rgba(225,255,225,0.6)"></div></div>
<div style="position:absolute;left:1062.51px;top:222.47px;width:9.34px;height:53.2px;background:#13c75b;border:1.6px solid #141414;box-sizing:border-box;border-radius:1.5px;overflow:hidden"><div style="position:absolute;left:0;right:0;top:33.5px;height:1px;background:rgba(225,255,225,0.7)"></div><div style="position:absolute;left:2px;top:31.5px;width:1.2px;height:3px;background:rgba(225,255,225,0.6)"></div></div>
<div style="position:absolute;left:1071.35px;top:222.47px;width:11.80px;height:53.2px;background:#13c75b;border:1.6px solid #141414;box-sizing:border-box;border-radius:1.5px;overflow:hidden"><div style="position:absolute;left:0;right:0;top:33.5px;height:1px;background:rgba(225,255,225,0.7)"></div><div style="position:absolute;left:2px;top:31.5px;width:1.2px;height:3px;background:rgba(225,255,225,0.6)"></div></div>
<div style="position:absolute;left:1081.65px;top:222.47px;width:5.40px;height:53.2px;background:#13c75b;border:1.6px solid #141414;box-sizing:border-box;border-radius:1.5px;overflow:hidden"><div style="position:absolute;left:0;right:0;top:33.5px;height:1px;background:rgba(225,255,225,0.7)"></div><div style="position:absolute;left:2px;top:31.5px;width:1.2px;height:3px;background:rgba(225,255,225,0.6)"></div></div>
<div style="position:absolute;left:1085.55px;top:222.47px;width:5.20px;height:53.2px;background:#13c75b;border:1.6px solid #141414;box-sizing:border-box;border-radius:1.5px;overflow:hidden"><div style="position:absolute;left:0;right:0;top:33.5px;height:1px;background:rgba(225,255,225,0.7)"></div><div style="position:absolute;left:2px;top:31.5px;width:1.2px;height:3px;background:rgba(225,255,225,0.6)"></div></div>
<div style="position:absolute;left:1089.25px;top:222.47px;width:7.90px;height:53.2px;background:#13c75b;border:1.6px solid #141414;box-sizing:border-box;border-radius:1.5px;overflow:hidden"><div style="position:absolute;left:0;right:0;top:33.5px;height:1px;background:rgba(225,255,225,0.7)"></div><div style="position:absolute;left:2px;top:31.5px;width:1.2px;height:3px;background:rgba(225,255,225,0.6)"></div></div>
<div style="position:absolute;left:1095.65px;top:222.47px;width:8.00px;height:53.2px;background:#13c75b;border:1.6px solid #141414;box-sizing:border-box;border-radius:1.5px;overflow:hidden"><div style="position:absolute;left:0;right:0;top:33.5px;height:1px;background:rgba(225,255,225,0.7)"></div><div style="position:absolute;left:2px;top:31.5px;width:1.2px;height:3px;background:rgba(225,255,225,0.6)"></div></div>
<div style="position:absolute;left:1102.15px;top:222.47px;width:9.34px;height:53.2px;background:#13c75b;border:1.6px solid #141414;box-sizing:border-box;border-radius:1.5px;overflow:hidden"><div style="position:absolute;left:0;right:0;top:33.5px;height:1px;background:rgba(225,255,225,0.7)"></div><div style="position:absolute;left:2px;top:31.5px;width:1.2px;height:3px;background:rgba(225,255,225,0.6)"></div></div>
<div style="position:absolute;left:1110.99px;top:222.47px;width:11.80px;height:53.2px;background:#13c75b;border:1.6px solid #141414;box-sizing:border-box;border-radius:1.5px;overflow:hidden"><div style="position:absolute;left:0;right:0;top:33.5px;height:1px;background:rgba(225,255,225,0.7)"></div><div style="position:absolute;left:2px;top:31.5px;width:1.2px;height:3px;background:rgba(225,255,225,0.6)"></div></div>
<div style="position:absolute;left:1121.29px;top:222.47px;width:5.40px;height:53.2px;background:#13c75b;border:1.6px solid #141414;box-sizing:border-box;border-radius:1.5px;overflow:hidden"><div style="position:absolute;left:0;right:0;top:33.5px;height:1px;background:rgba(225,255,225,0.7)"></div><div style="position:absolute;left:2px;top:31.5px;width:1.2px;height:3px;background:rgba(225,255,225,0.6)"></div></div>
<div style="position:absolute;left:1125.19px;top:222.47px;width:5.20px;height:53.2px;background:#13c75b;border:1.6px solid #141414;box-sizing:border-box;border-radius:1.5px;overflow:hidden"><div style="position:absolute;left:0;right:0;top:33.5px;height:1px;background:rgba(225,255,225,0.7)"></div><div style="position:absolute;left:2px;top:31.5px;width:1.2px;height:3px;background:rgba(225,255,225,0.6)"></div></div>
<div style="position:absolute;left:1128.89px;top:222.47px;width:3.36px;height:53.2px;background:#13c75b;border:1.6px solid #141414;box-sizing:border-box;border-radius:1.5px;overflow:hidden"><div style="position:absolute;left:0;right:0;top:33.5px;height:1px;background:rgba(225,255,225,0.7)"></div><div style="position:absolute;left:2px;top:31.5px;width:1.2px;height:3px;background:rgba(225,255,225,0.6)"></div></div>
<div style="position:absolute;left:1204.45px;top:222.47px;width:5.22px;height:53.2px;background:#13c75b;border:1.6px solid #141414;box-sizing:border-box;border-radius:1.5px;overflow:hidden"><div style="position:absolute;left:0;right:0;top:33.5px;height:1px;background:rgba(225,255,225,0.7)"></div><div style="position:absolute;left:2px;top:31.5px;width:1.2px;height:3px;background:rgba(225,255,225,0.6)"></div></div>
<div style="position:absolute;left:1208.17px;top:222.47px;width:7.90px;height:53.2px;background:#13c75b;border:1.6px solid #141414;box-sizing:border-box;border-radius:1.5px;overflow:hidden"><div style="position:absolute;left:0;right:0;top:33.5px;height:1px;background:rgba(225,255,225,0.7)"></div><div style="position:absolute;left:2px;top:31.5px;width:1.2px;height:3px;background:rgba(225,255,225,0.6)"></div></div>
<div style="position:absolute;left:1214.57px;top:222.47px;width:8.00px;height:53.2px;background:#13c75b;border:1.6px solid #141414;box-sizing:border-box;border-radius:1.5px;overflow:hidden"><div style="position:absolute;left:0;right:0;top:33.5px;height:1px;background:rgba(225,255,225,0.7)"></div><div style="position:absolute;left:2px;top:31.5px;width:1.2px;height:3px;background:rgba(225,255,225,0.6)"></div></div>
<div style="position:absolute;left:1221.07px;top:222.47px;width:9.34px;height:53.2px;background:#13c75b;border:1.6px solid #141414;box-sizing:border-box;border-radius:1.5px;overflow:hidden"><div style="position:absolute;left:0;right:0;top:33.5px;height:1px;background:rgba(225,255,225,0.7)"></div><div style="position:absolute;left:2px;top:31.5px;width:1.2px;height:3px;background:rgba(225,255,225,0.6)"></div></div>
<div style="position:absolute;left:1229.91px;top:222.47px;width:11.80px;height:53.2px;background:#13c75b;border:1.6px solid #141414;box-sizing:border-box;border-radius:1.5px;overflow:hidden"><div style="position:absolute;left:0;right:0;top:33.5px;height:1px;background:rgba(225,255,225,0.7)"></div><div style="position:absolute;left:2px;top:31.5px;width:1.2px;height:3px;background:rgba(225,255,225,0.6)"></div></div>
<div style="position:absolute;left:1240.21px;top:222.47px;width:5.40px;height:53.2px;background:#13c75b;border:1.6px solid #141414;box-sizing:border-box;border-radius:1.5px;overflow:hidden"><div style="position:absolute;left:0;right:0;top:33.5px;height:1px;background:rgba(225,255,225,0.7)"></div><div style="position:absolute;left:2px;top:31.5px;width:1.2px;height:3px;background:rgba(225,255,225,0.6)"></div></div>
<div style="position:absolute;left:1244.11px;top:222.47px;width:5.20px;height:53.2px;background:#13c75b;border:1.6px solid #141414;box-sizing:border-box;border-radius:1.5px;overflow:hidden"><div style="position:absolute;left:0;right:0;top:33.5px;height:1px;background:rgba(225,255,225,0.7)"></div><div style="position:absolute;left:2px;top:31.5px;width:1.2px;height:3px;background:rgba(225,255,225,0.6)"></div></div>
<div style="position:absolute;left:1247.81px;top:222.47px;width:7.90px;height:53.2px;background:#13c75b;border:1.6px solid #141414;box-sizing:border-box;border-radius:1.5px;overflow:hidden"><div style="position:absolute;left:0;right:0;top:33.5px;height:1px;background:rgba(225,255,225,0.7)"></div><div style="position:absolute;left:2px;top:31.5px;width:1.2px;height:3px;background:rgba(225,255,225,0.6)"></div></div>
<div style="position:absolute;left:1254.21px;top:222.47px;width:8.00px;height:53.2px;background:#13c75b;border:1.6px solid #141414;box-sizing:border-box;border-radius:1.5px;overflow:hidden"><div style="position:absolute;left:0;right:0;top:33.5px;height:1px;background:rgba(225,255,225,0.7)"></div><div style="position:absolute;left:2px;top:31.5px;width:1.2px;height:3px;background:rgba(225,255,225,0.6)"></div></div>
<div style="position:absolute;left:1260.71px;top:222.47px;width:9.34px;height:53.2px;background:#13c75b;border:1.6px solid #141414;box-sizing:border-box;border-radius:1.5px;overflow:hidden"><div style="position:absolute;left:0;right:0;top:33.5px;height:1px;background:rgba(225,255,225,0.7)"></div><div style="position:absolute;left:2px;top:31.5px;width:1.2px;height:3px;background:rgba(225,255,225,0.6)"></div></div>
<div style="position:absolute;left:1269.55px;top:222.47px;width:11.80px;height:53.2px;background:#13c75b;border:1.6px solid #141414;box-sizing:border-box;border-radius:1.5px;overflow:hidden"><div style="position:absolute;left:0;right:0;top:33.5px;height:1px;background:rgba(225,255,225,0.7)"></div><div style="position:absolute;left:2px;top:31.5px;width:1.2px;height:3px;background:rgba(225,255,225,0.6)"></div></div>
<div style="position:absolute;left:1279.85px;top:222.47px;width:5.40px;height:53.2px;background:#13c75b;border:1.6px solid #141414;box-sizing:border-box;border-radius:1.5px;overflow:hidden"><div style="position:absolute;left:0;right:0;top:33.5px;height:1px;background:rgba(225,255,225,0.7)"></div><div style="position:absolute;left:2px;top:31.5px;width:1.2px;height:3px;background:rgba(225,255,225,0.6)"></div></div>
<div style="position:absolute;left:1283.75px;top:222.47px;width:5.20px;height:53.2px;background:#13c75b;border:1.6px solid #141414;box-sizing:border-box;border-radius:1.5px;overflow:hidden"><div style="position:absolute;left:0;right:0;top:33.5px;height:1px;background:rgba(225,255,225,0.7)"></div><div style="position:absolute;left:2px;top:31.5px;width:1.2px;height:3px;background:rgba(225,255,225,0.6)"></div></div>
<div style="position:absolute;left:1287.45px;top:222.47px;width:7.90px;height:53.2px;background:#13c75b;border:1.6px solid #141414;box-sizing:border-box;border-radius:1.5px;overflow:hidden"><div style="position:absolute;left:0;right:0;top:33.5px;height:1px;background:rgba(225,255,225,0.7)"></div><div style="position:absolute;left:2px;top:31.5px;width:1.2px;height:3px;background:rgba(225,255,225,0.6)"></div></div>
<div style="position:absolute;left:1293.85px;top:222.47px;width:8.00px;height:53.2px;background:#13c75b;border:1.6px solid #141414;box-sizing:border-box;border-radius:1.5px;overflow:hidden"><div style="position:absolute;left:0;right:0;top:33.5px;height:1px;background:rgba(225,255,225,0.7)"></div><div style="position:absolute;left:2px;top:31.5px;width:1.2px;height:3px;background:rgba(225,255,225,0.6)"></div></div>
<div style="position:absolute;left:1300.35px;top:222.47px;width:9.34px;height:53.2px;background:#13c75b;border:1.6px solid #141414;box-sizing:border-box;border-radius:1.5px;overflow:hidden"><div style="position:absolute;left:0;right:0;top:33.5px;height:1px;background:rgba(225,255,225,0.7)"></div><div style="position:absolute;left:2px;top:31.5px;width:1.2px;height:3px;background:rgba(225,255,225,0.6)"></div></div>
<div style="position:absolute;left:1309.19px;top:222.47px;width:11.80px;height:53.2px;background:#13c75b;border:1.6px solid #141414;box-sizing:border-box;border-radius:1.5px;overflow:hidden"><div style="position:absolute;left:0;right:0;top:33.5px;height:1px;background:rgba(225,255,225,0.7)"></div><div style="position:absolute;left:2px;top:31.5px;width:1.2px;height:3px;background:rgba(225,255,225,0.6)"></div></div>
<div style="position:absolute;left:1319.49px;top:222.47px;width:5.40px;height:53.2px;background:#13c75b;border:1.6px solid #141414;box-sizing:border-box;border-radius:1.5px;overflow:hidden"><div style="position:absolute;left:0;right:0;top:33.5px;height:1px;background:rgba(225,255,225,0.7)"></div><div style="position:absolute;left:2px;top:31.5px;width:1.2px;height:3px;background:rgba(225,255,225,0.6)"></div></div>
<div style="position:absolute;left:1323.39px;top:222.47px;width:5.20px;height:53.2px;background:#13c75b;border:1.6px solid #141414;box-sizing:border-box;border-radius:1.5px;overflow:hidden"><div style="position:absolute;left:0;right:0;top:33.5px;height:1px;background:rgba(225,255,225,0.7)"></div><div style="position:absolute;left:2px;top:31.5px;width:1.2px;height:3px;background:rgba(225,255,225,0.6)"></div></div>
<div style="position:absolute;left:1327.09px;top:222.47px;width:7.66px;height:53.2px;background:#13c75b;border:1.6px solid #141414;box-sizing:border-box;border-radius:1.5px;overflow:hidden"><div style="position:absolute;left:0;right:0;top:33.5px;height:1px;background:rgba(225,255,225,0.7)"></div><div style="position:absolute;left:2px;top:31.5px;width:1.2px;height:3px;background:rgba(225,255,225,0.6)"></div></div>
<div style="position:absolute;left:452.58px;top:275.79px;width:39.08px;height:53.20px;background:#cca316;border:1.5px solid #141414;box-sizing:border-box;border-radius:5px;overflow:hidden;box-shadow:inset 0 1px 0 rgba(255,255,255,0.10)"><div style="position:absolute;left:6.0px;top:3.81px;font-size:12.65px;line-height:15px;color:#fbfbf2;white-space:nowrap;-webkit-text-stroke:0.4px #fbfbf2">journ</div><div style="position:absolute;left:0;right:0;top:33.2px;height:1.9px;background:rgba(250,240,190,0.85)"></div></div>
<div style="position:absolute;left:491.06px;top:275.79px;width:3.60px;height:53.20px;background:#cca316;border:1.5px solid #141414;box-sizing:border-box;border-radius:1.5px;overflow:hidden;box-shadow:inset 0 1px 0 rgba(255,255,255,0.10)"><div style="position:absolute;left:0;right:0;top:33.2px;height:1.9px;background:rgba(250,240,190,0.85)"></div></div>
<div style="position:absolute;left:493.66px;top:275.79px;width:77.76px;height:53.20px;background:#cca316;border:1.5px solid #141414;box-sizing:border-box;border-radius:5px;overflow:hidden;box-shadow:inset 0 1px 0 rgba(255,255,255,0.10)"><div style="position:absolute;left:6.0px;top:3.41px;font-size:13.1px;line-height:15px;color:#fbfbf2;white-space:nowrap;-webkit-text-stroke:0.4px #fbfbf2">journey- alb</div><div style="position:absolute;left:0;right:0;top:33.2px;height:1.9px;background:rgba(250,240,190,0.85)"></div></div>
<div style="position:absolute;left:570.42px;top:275.79px;width:3.60px;height:53.20px;background:#cca316;border:1.5px solid #141414;box-sizing:border-box;border-radius:1.5px;overflow:hidden;box-shadow:inset 0 1px 0 rgba(255,255,255,0.10)"><div style="position:absolute;left:0;right:0;top:33.2px;height:1.9px;background:rgba(250,240,190,0.85)"></div></div>
<div style="position:absolute;left:573.02px;top:275.79px;width:77.76px;height:53.20px;background:#cca316;border:1.5px solid #141414;box-sizing:border-box;border-radius:5px;overflow:hidden;box-shadow:inset 0 1px 0 rgba(255,255,255,0.10)"><div style="position:absolute;left:6.0px;top:3.41px;font-size:13.1px;line-height:15px;color:#fbfbf2;white-space:nowrap;-webkit-text-stroke:0.4px #fbfbf2">journey- alb</div><div style="position:absolute;left:0;right:0;top:33.2px;height:1.9px;background:rgba(250,240,190,0.85)"></div></div>
<div style="position:absolute;left:729.14px;top:275.79px;width:80.36px;height:53.20px;background:#cca316;border:1.5px solid #141414;box-sizing:border-box;border-radius:5px;overflow:hidden;box-shadow:inset 0 1px 0 rgba(255,255,255,0.10)"><div style="position:absolute;left:6.0px;top:3.41px;font-size:13.1px;line-height:15px;color:#fbfbf2;white-space:nowrap;-webkit-text-stroke:0.4px #fbfbf2">journey- alb</div><div style="position:absolute;left:0;right:0;top:33.2px;height:1.9px;background:rgba(250,240,190,0.85)"></div></div>
<div style="position:absolute;left:808.50px;top:275.79px;width:3.60px;height:53.20px;background:#cca316;border:1.5px solid #141414;box-sizing:border-box;border-radius:1.5px;overflow:hidden;box-shadow:inset 0 1px 0 rgba(255,255,255,0.10)"><div style="position:absolute;left:0;right:0;top:33.2px;height:1.9px;background:rgba(250,240,190,0.85)"></div></div>
<div style="position:absolute;left:811.10px;top:275.79px;width:77.76px;height:53.20px;background:#cca316;border:1.5px solid #141414;box-sizing:border-box;border-radius:5px;overflow:hidden;box-shadow:inset 0 1px 0 rgba(255,255,255,0.10)"><div style="position:absolute;left:6.0px;top:3.41px;font-size:13.1px;line-height:15px;color:#fbfbf2;white-space:nowrap;-webkit-text-stroke:0.4px #fbfbf2">journey- alb</div><div style="position:absolute;left:0;right:0;top:33.2px;height:1.9px;background:rgba(250,240,190,0.85)"></div></div>
<div style="position:absolute;left:887.86px;top:275.79px;width:3.60px;height:53.20px;background:#cca316;border:1.5px solid #141414;box-sizing:border-box;border-radius:1.5px;overflow:hidden;box-shadow:inset 0 1px 0 rgba(255,255,255,0.10)"><div style="position:absolute;left:0;right:0;top:33.2px;height:1.9px;background:rgba(250,240,190,0.85)"></div></div>
<div style="position:absolute;left:890.46px;top:275.79px;width:77.76px;height:53.20px;background:#cca316;border:1.5px solid #141414;box-sizing:border-box;border-radius:5px;overflow:hidden;box-shadow:inset 0 1px 0 rgba(255,255,255,0.10)"><div style="position:absolute;left:6.0px;top:3.41px;font-size:13.1px;line-height:15px;color:#fbfbf2;white-space:nowrap;-webkit-text-stroke:0.4px #fbfbf2">journey- alb</div><div style="position:absolute;left:0;right:0;top:33.2px;height:1.9px;background:rgba(250,240,190,0.85)"></div></div>
<div style="position:absolute;left:967.22px;top:275.79px;width:3.60px;height:53.20px;background:#cca316;border:1.5px solid #141414;box-sizing:border-box;border-radius:1.5px;overflow:hidden;box-shadow:inset 0 1px 0 rgba(255,255,255,0.10)"><div style="position:absolute;left:0;right:0;top:33.2px;height:1.9px;background:rgba(250,240,190,0.85)"></div></div>
<div style="position:absolute;left:969.82px;top:275.79px;width:77.76px;height:53.20px;background:#cca316;border:1.5px solid #141414;box-sizing:border-box;border-radius:5px;overflow:hidden;box-shadow:inset 0 1px 0 rgba(255,255,255,0.10)"><div style="position:absolute;left:6.0px;top:3.41px;font-size:13.1px;line-height:15px;color:#fbfbf2;white-space:nowrap;-webkit-text-stroke:0.4px #fbfbf2">journey- alb</div><div style="position:absolute;left:0;right:0;top:33.2px;height:1.9px;background:rgba(250,240,190,0.85)"></div></div>
<div style="position:absolute;left:1046.58px;top:275.79px;width:80.36px;height:53.20px;background:#cca316;border:1.5px solid #141414;box-sizing:border-box;border-radius:5px;overflow:hidden;box-shadow:inset 0 1px 0 rgba(255,255,255,0.10)"><div style="position:absolute;left:6.0px;top:3.41px;font-size:13.1px;line-height:15px;color:#fbfbf2;white-space:nowrap;-webkit-text-stroke:0.4px #fbfbf2">journey- alb</div><div style="position:absolute;left:0;right:0;top:33.2px;height:1.9px;background:rgba(250,240,190,0.85)"></div></div>
<div style="position:absolute;left:1285.40px;top:275.79px;width:66.60px;height:53.20px;background:#cca316;border:1.5px solid #141414;box-sizing:border-box;border-radius:5px;overflow:hidden;box-shadow:inset 0 1px 0 rgba(255,255,255,0.10)"><div style="position:absolute;left:6.0px;top:3.41px;font-size:13.1px;line-height:15px;color:#fbfbf2;white-space:nowrap;-webkit-text-stroke:0.4px #fbfbf2">journey- a</div><div style="position:absolute;left:0;right:0;top:33.2px;height:1.9px;background:rgba(250,240,190,0.85)"></div></div>
<div style="position:absolute;left:550.30px;top:329.11px;width:108.50px;height:53.20px;background:#3a6fae;border:1.5px solid #141414;box-sizing:border-box;border-radius:5px;overflow:hidden;box-shadow:inset 0 1px 0 rgba(255,255,255,0.10)"><div style="position:absolute;left:6.0px;top:3.77px;font-size:12.7px;line-height:15px;color:#fbfbf2;white-space:nowrap;-webkit-text-stroke:0.4px #fbfbf2">harmony#01</div><svg style="position:absolute;left:0;top:0" width="108" height="52"><path d="M0.0 33.7 V36.1 M1.2 32.2 V37.6 M2.4 33.6 V36.2 M3.6 34.1 V35.7 M4.8 34.1 V35.7 M6.0 34.2 V35.6 M7.2 34.4 V35.4 M8.4 33.0 V36.8 M9.6 33.9 V35.9 M10.8 33.2 V36.6 M12.0 34.1 V35.7 M13.2 33.5 V36.3 M14.4 34.1 V35.7 M15.6 34.2 V35.6 M16.8 34.2 V35.6 M18.0 33.6 V36.2 M19.2 33.6 V36.2 M20.4 33.7 V36.1 M21.6 33.9 V35.9 M22.8 32.5 V37.3 M24.0 34.0 V35.8 M25.2 34.0 V35.8 M26.4 32.8 V37.0 M27.6 32.5 V37.3 M28.8 33.9 V35.9 M30.0 34.2 V35.6 M31.2 32.2 V37.6 M32.4 31.9 V37.9 M33.6 34.2 V35.6 M34.8 32.7 V37.1 M36.0 34.2 V35.6 M37.2 33.9 V35.9 M38.4 34.2 V35.6 M39.6 34.2 V35.6 M40.8 32.7 V37.1 M42.0 33.4 V36.4 M43.2 34.1 V35.7 M44.4 34.2 V35.6 M45.6 34.2 V35.6 M46.8 34.1 V35.7 M48.0 33.9 V35.9 M49.2 34.2 V35.6 M50.4 34.1 V35.7 M51.6 32.4 V37.4 M52.8 34.3 V35.5 M54.0 34.1 V35.7 M55.2 32.8 V37.0 M56.4 34.0 V35.8 M57.6 34.2 V35.6 M58.8 34.1 V35.7 M60.0 33.9 V35.9 M61.2 32.0 V37.8 M62.4 34.1 V35.7 M63.6 34.1 V35.7 M64.8 33.9 V35.9 M66.0 34.1 V35.7 M67.2 34.0 V35.8 M68.4 34.3 V35.5 M69.6 32.3 V37.5 M70.8 33.8 V36.0 M72.0 34.4 V35.4 M73.2 34.1 V35.7 M74.4 34.3 V35.5 M75.6 33.3 V36.5 M76.8 34.1 V35.7 M78.0 34.2 V35.6 M79.2 34.1 V35.7 M80.4 33.3 V36.5 M81.6 32.2 V37.6 M82.8 34.2 V35.6 M84.0 33.7 V36.1 M85.2 34.1 V35.7 M86.4 33.4 V36.4 M87.6 34.2 V35.6 M88.8 31.9 V37.9 M90.0 33.1 V36.7 M91.2 34.2 V35.6 M92.4 34.4 V35.4 M93.6 34.0 V35.8 M94.8 34.2 V35.6 M96.0 33.6 V36.2 M97.2 34.2 V35.6 M98.4 34.2 V35.6 M99.6 34.0 V35.8 M100.8 32.9 V36.9 M102.0 34.0 V35.8 M103.2 33.9 V35.9 M104.4 33.9 V35.9 M105.6 34.2 V35.6 " fill="none" stroke="#e6eefc" stroke-width="0.9"/><rect x="0" y="34.3" width="108" height="1.2" fill="#e6eefc"/></svg></div>
<div style="position:absolute;left:798.80px;top:329.11px;width:175.00px;height:53.20px;background:#3a6fae;border:1.5px solid #141414;box-sizing:border-box;border-radius:5px;overflow:hidden;box-shadow:inset 0 1px 0 rgba(255,255,255,0.10)"><div style="position:absolute;left:6.0px;top:3.77px;font-size:12.7px;line-height:15px;color:#fbfbf2;white-space:nowrap;-webkit-text-stroke:0.4px #fbfbf2">harmony#05</div><svg style="position:absolute;left:0;top:0" width="174" height="52"><path d="M0.0 33.7 V36.1 M1.2 33.1 V36.7 M2.4 34.2 V35.6 M3.6 34.3 V35.5 M4.8 33.1 V36.7 M6.0 33.5 V36.3 M7.2 34.1 V35.7 M8.4 34.3 V35.5 M9.6 34.4 V35.4 M10.8 34.2 V35.6 M12.0 33.9 V35.9 M13.2 32.5 V37.3 M14.4 34.4 V35.4 M15.6 33.6 V36.2 M16.8 33.9 V35.9 M18.0 34.2 V35.6 M19.2 34.2 V35.6 M20.4 33.3 V36.5 M21.6 33.0 V36.8 M22.8 34.3 V35.5 M24.0 33.8 V36.0 M25.2 33.3 V36.5 M26.4 33.8 V36.0 M27.6 34.0 V35.8 M28.8 31.9 V37.9 M30.0 33.9 V35.9 M31.2 33.1 V36.7 M32.4 34.2 V35.6 M33.6 33.9 V35.9 M34.8 32.6 V37.2 M36.0 34.4 V35.4 M37.2 33.8 V36.0 M38.4 34.1 V35.7 M39.6 34.2 V35.6 M40.8 34.2 V35.6 M42.0 34.1 V35.7 M43.2 34.2 V35.6 M44.4 33.9 V35.9 M45.6 34.2 V35.6 M46.8 34.1 V35.7 M48.0 34.2 V35.6 M49.2 34.2 V35.6 M50.4 34.3 V35.5 M51.6 33.9 V35.9 M52.8 34.0 V35.8 M54.0 34.2 V35.6 M55.2 32.8 V37.0 M56.4 34.1 V35.7 M57.6 34.2 V35.6 M58.8 33.9 V35.9 M60.0 33.6 V36.2 M61.2 34.2 V35.6 M62.4 32.5 V37.3 M63.6 34.1 V35.7 M64.8 33.7 V36.1 M66.0 34.3 V35.5 M67.2 32.3 V37.5 M68.4 34.3 V35.5 M69.6 34.3 V35.5 M70.8 33.6 V36.2 M72.0 33.0 V36.8 M73.2 34.0 V35.8 M74.4 33.1 V36.7 M75.6 34.3 V35.5 M76.8 33.8 V36.0 M78.0 34.2 V35.6 M79.2 33.4 V36.4 M80.4 33.9 V35.9 M81.6 32.8 V37.0 M82.8 34.1 V35.7 M84.0 32.7 V37.1 M85.2 33.9 V35.9 M86.4 32.9 V36.9 M87.6 34.2 V35.6 M88.8 33.9 V35.9 M90.0 34.0 V35.8 M91.2 34.1 V35.7 M92.4 33.9 V35.9 M93.6 33.9 V35.9 M94.8 32.1 V37.7 M96.0 33.5 V36.3 M97.2 34.2 V35.6 M98.4 33.0 V36.8 M99.6 34.1 V35.7 M100.8 33.9 V35.9 M102.0 34.2 V35.6 M103.2 34.0 V35.8 M104.4 32.8 V37.0 M105.6 32.1 V37.7 M106.8 34.2 V35.6 M108.0 33.7 V36.1 M109.2 33.1 V36.7 M110.4 34.1 V35.7 M111.6 32.1 V37.7 M112.8 33.9 V35.9 M114.0 34.1 V35.7 M115.2 34.3 V35.5 M116.4 33.6 V36.2 M117.6 34.1 V35.7 M118.8 34.1 V35.7 M120.0 34.1 V35.7 M121.2 34.0 V35.8 M122.4 34.1 V35.7 M123.6 32.8 V37.0 M124.8 33.1 V36.7 M126.0 31.9 V37.9 M127.2 33.1 V36.7 M128.4 32.9 V36.9 M129.6 33.6 V36.2 M130.8 34.0 V35.8 M132.0 34.1 V35.7 M133.2 34.0 V35.8 M134.4 32.7 V37.1 M135.6 32.1 V37.7 M136.8 34.2 V35.6 M138.0 32.3 V37.5 M139.2 34.2 V35.6 M140.4 32.5 V37.3 M141.6 32.7 V37.1 M142.8 33.3 V36.5 M144.0 33.8 V36.0 M145.2 33.8 V36.0 M146.4 32.6 V37.2 M147.6 34.1 V35.7 M148.8 31.9 V37.9 M150.0 34.4 V35.4 M151.2 34.0 V35.8 M152.4 33.9 V35.9 M153.6 34.0 V35.8 M154.8 34.0 V35.8 M156.0 34.3 V35.5 M157.2 34.2 V35.6 M158.4 34.2 V35.6 M159.6 34.1 V35.7 M160.8 34.0 V35.8 M162.0 34.1 V35.7 M163.2 32.4 V37.4 M164.4 34.2 V35.6 M165.6 33.5 V36.3 M166.8 33.5 V36.3 M168.0 32.7 V37.1 M169.2 33.2 V36.6 M170.4 33.2 V36.6 M171.6 33.8 V36.0 M172.8 33.0 V36.8 " fill="none" stroke="#e6eefc" stroke-width="0.9"/><rect x="0" y="34.3" width="174" height="1.2" fill="#e6eefc"/></svg></div>
<div style="position:absolute;left:627.30px;top:382.43px;width:347.20px;height:53.20px;background:#3a6fae;border:1.5px solid #141414;box-sizing:border-box;border-radius:5px;overflow:hidden;box-shadow:inset 0 1px 0 rgba(255,255,255,0.10)"><div style="position:absolute;left:6.0px;top:3.41px;font-size:13.1px;line-height:15px;color:#fbfbf2;white-space:nowrap;-webkit-text-stroke:0.4px #fbfbf2">melody#02</div><svg style="position:absolute;left:0;top:0" width="346" height="52"><path d="M0.0 34.0 V35.8 M1.2 34.1 V35.7 M2.4 34.1 V35.7 M3.6 34.1 V35.7 M4.8 32.9 V36.9 M6.0 33.5 V36.3 M7.2 34.0 V35.8 M8.4 32.5 V37.3 M9.6 34.2 V35.6 M10.8 34.3 V35.5 M12.0 34.0 V35.8 M13.2 32.6 V37.2 M14.4 33.9 V35.9 M15.6 34.3 V35.5 M16.8 34.2 V35.6 M18.0 33.4 V36.4 M19.2 33.9 V35.9 M20.4 34.0 V35.8 M21.6 34.0 V35.8 M22.8 31.9 V37.9 M24.0 33.5 V36.3 M25.2 34.2 V35.6 M26.4 33.7 V36.1 M27.6 34.1 V35.7 M28.8 34.0 V35.8 M30.0 33.3 V36.5 M31.2 34.2 V35.6 M32.4 34.1 V35.7 M33.6 34.1 V35.7 M34.8 34.2 V35.6 M36.0 32.0 V37.8 M37.2 34.0 V35.8 M38.4 34.2 V35.6 M39.6 34.0 V35.8 M40.8 33.2 V36.6 M42.0 34.2 V35.6 M43.2 34.0 V35.8 M44.4 34.3 V35.5 M45.6 33.9 V35.9 M46.8 34.3 V35.5 M48.0 33.3 V36.5 M49.2 34.1 V35.7 M50.4 33.4 V36.4 M51.6 33.9 V35.9 M52.8 33.9 V35.9 M54.0 34.1 V35.7 M55.2 34.2 V35.6 M56.4 34.2 V35.6 M57.6 33.5 V36.3 M58.8 34.2 V35.6 M60.0 33.9 V35.9 M61.2 34.4 V35.4 M62.4 34.2 V35.6 M63.6 34.0 V35.8 M64.8 34.2 V35.6 M66.0 34.2 V35.6 M67.2 34.2 V35.6 M68.4 34.2 V35.6 M69.6 33.6 V36.2 M70.8 33.1 V36.7 M72.0 34.2 V35.6 M73.2 32.2 V37.6 M74.4 34.0 V35.8 M75.6 32.5 V37.3 M76.8 33.4 V36.4 M78.0 34.1 V35.7 M79.2 34.1 V35.7 M80.4 34.2 V35.6 M81.6 34.4 V35.4 M82.8 33.3 V36.5 M84.0 32.8 V37.0 M85.2 33.6 V36.2 M86.4 33.9 V35.9 M87.6 33.7 V36.1 M88.8 32.4 V37.4 M90.0 32.6 V37.2 M91.2 34.0 V35.8 M92.4 34.2 V35.6 M93.6 33.9 V35.9 M94.8 34.0 V35.8 M96.0 34.2 V35.6 M97.2 34.3 V35.5 M98.4 34.2 V35.6 M99.6 33.5 V36.3 M100.8 34.2 V35.6 M102.0 32.4 V37.4 M103.2 33.6 V36.2 M104.4 34.2 V35.6 M105.6 34.1 V35.7 M106.8 34.1 V35.7 M108.0 34.1 V35.7 M109.2 33.7 V36.1 M110.4 34.1 V35.7 M111.6 32.3 V37.5 M112.8 34.2 V35.6 M114.0 32.6 V37.2 M115.2 34.3 V35.5 M116.4 34.0 V35.8 M117.6 34.2 V35.6 M118.8 32.9 V36.9 M120.0 34.0 V35.8 M121.2 33.9 V35.9 M122.4 33.8 V36.0 M123.6 32.5 V37.3 M124.8 34.3 V35.5 M126.0 34.2 V35.6 M127.2 31.8 V38.0 M128.4 34.3 V35.5 M129.6 33.7 V36.1 M130.8 34.2 V35.6 M132.0 34.2 V35.6 M133.2 34.3 V35.5 M134.4 32.5 V37.3 M135.6 33.9 V35.9 M136.8 33.6 V36.2 M138.0 34.2 V35.6 M139.2 33.5 V36.3 M140.4 33.9 V35.9 M141.6 34.1 V35.7 M142.8 34.4 V35.4 M144.0 34.1 V35.7 M145.2 33.4 V36.4 M146.4 32.3 V37.5 M147.6 34.1 V35.7 M148.8 34.1 V35.7 M150.0 33.2 V36.6 M151.2 32.0 V37.8 M152.4 32.4 V37.4 M153.6 32.5 V37.3 M154.8 34.2 V35.6 M156.0 32.1 V37.7 M157.2 33.6 V36.2 M158.4 34.1 V35.7 M159.6 34.2 V35.6 M160.8 32.8 V37.0 M162.0 34.1 V35.7 M163.2 33.0 V36.8 M164.4 32.2 V37.6 M165.6 34.3 V35.5 M166.8 33.9 V35.9 M168.0 32.5 V37.3 M169.2 33.0 V36.8 M170.4 33.4 V36.4 M171.6 34.2 V35.6 M172.8 33.3 V36.5 M174.0 33.2 V36.6 M175.2 34.1 V35.7 M176.4 32.4 V37.4 M177.6 32.6 V37.2 M178.8 33.4 V36.4 M180.0 32.1 V37.7 M181.2 32.0 V37.8 M182.4 34.1 V35.7 M183.6 33.1 V36.7 M184.8 34.2 V35.6 M186.0 34.2 V35.6 M187.2 34.0 V35.8 M188.4 33.7 V36.1 M189.6 33.4 V36.4 M190.8 34.2 V35.6 M192.0 34.1 V35.7 M193.2 34.3 V35.5 M194.4 34.3 V35.5 M195.6 34.0 V35.8 M196.8 31.9 V37.9 M198.0 34.2 V35.6 M199.2 34.2 V35.6 M200.4 34.1 V35.7 M201.6 34.2 V35.6 M202.8 34.2 V35.6 M204.0 34.1 V35.7 M205.2 33.2 V36.6 M206.4 34.0 V35.8 M207.6 32.5 V37.3 M208.8 34.2 V35.6 M210.0 33.6 V36.2 M211.2 32.7 V37.1 M212.4 33.0 V36.8 M213.6 33.8 V36.0 M214.8 34.0 V35.8 M216.0 34.1 V35.7 M217.2 34.0 V35.8 M218.4 34.2 V35.6 M219.6 34.3 V35.5 M220.8 32.0 V37.8 M222.0 32.6 V37.2 M223.2 34.0 V35.8 M224.4 33.7 V36.1 M225.6 33.0 V36.8 M226.8 33.8 V36.0 M228.0 34.1 V35.7 M229.2 33.9 V35.9 M230.4 32.3 V37.5 M231.6 34.3 V35.5 M232.8 32.6 V37.2 M234.0 33.8 V36.0 M235.2 34.2 V35.6 M236.4 34.1 V35.7 M237.6 32.2 V37.6 M238.8 34.2 V35.6 M240.0 32.9 V36.9 M241.2 32.9 V36.9 M242.4 34.1 V35.7 M243.6 32.7 V37.1 M244.8 32.8 V37.0 M246.0 34.1 V35.7 M247.2 33.3 V36.5 M248.4 34.4 V35.4 M249.6 33.9 V35.9 M250.8 34.0 V35.8 M252.0 34.2 V35.6 M253.2 33.4 V36.4 M254.4 32.7 V37.1 M255.6 34.1 V35.7 M256.8 32.9 V36.9 M258.0 32.3 V37.5 M259.2 33.5 V36.3 M260.4 34.1 V35.7 M261.6 34.2 V35.6 M262.8 34.2 V35.6 M264.0 32.9 V36.9 M265.2 32.5 V37.3 M266.4 32.8 V37.0 M267.6 33.4 V36.4 M268.8 34.2 V35.6 M270.0 32.9 V36.9 M271.2 33.8 V36.0 M272.4 33.0 V36.8 M273.6 32.9 V36.9 M274.8 34.2 V35.6 M276.0 34.3 V35.5 M277.2 34.4 V35.4 M278.4 33.4 V36.4 M279.6 32.1 V37.7 M280.8 33.6 V36.2 M282.0 32.7 V37.1 M283.2 34.1 V35.7 M284.4 34.2 V35.6 M285.6 32.4 V37.4 M286.8 34.4 V35.4 M288.0 34.1 V35.7 M289.2 34.2 V35.6 M290.4 34.3 V35.5 M291.6 33.0 V36.8 M292.8 33.4 V36.4 M294.0 34.1 V35.7 M295.2 33.1 V36.7 M296.4 33.3 V36.5 M297.6 33.7 V36.1 M298.8 33.0 V36.8 M300.0 33.5 V36.3 M301.2 33.4 V36.4 M302.4 34.2 V35.6 M303.6 34.0 V35.8 M304.8 34.1 V35.7 M306.0 34.2 V35.6 M307.2 33.2 V36.6 M308.4 34.2 V35.6 M309.6 34.1 V35.7 M310.8 33.0 V36.8 M312.0 34.2 V35.6 M313.2 33.6 V36.2 M314.4 33.3 V36.5 M315.6 34.0 V35.8 M316.8 32.8 V37.0 M318.0 33.7 V36.1 M319.2 34.1 V35.7 M320.4 34.0 V35.8 M321.6 33.7 V36.1 M322.8 34.0 V35.8 M324.0 32.6 V37.2 M325.2 34.4 V35.4 M326.4 33.4 V36.4 M327.6 34.1 V35.7 M328.8 33.1 V36.7 M330.0 34.3 V35.5 M331.2 33.7 V36.1 M332.4 32.3 V37.5 M333.6 33.9 V35.9 M334.8 34.1 V35.7 M336.0 34.1 V35.7 M337.2 32.3 V37.5 M338.4 33.0 V36.8 M339.6 34.0 V35.8 M340.8 33.9 V35.9 M342.0 34.2 V35.6 M343.2 34.0 V35.8 M344.4 32.4 V37.4 " fill="none" stroke="#e6eefc" stroke-width="0.9"/><rect x="0" y="34.3" width="346" height="1.2" fill="#e6eefc"/></svg></div>
<div style="position:absolute;left:486.10px;top:435.75px;width:85.32px;height:53.20px;background:#cca316;border:1.5px solid #141414;box-sizing:border-box;border-radius:5px;overflow:hidden;box-shadow:inset 0 1px 0 rgba(255,255,255,0.10)"><div style="position:absolute;left:6.0px;top:3.95px;font-size:12.5px;line-height:15px;color:#fbfbf2;white-space:nowrap;-webkit-text-stroke:0.4px #fbfbf2">Bluebird</div><svg style="position:absolute;left:0;top:0" width="84" height="52"><g fill="#fdeaa8"><rect x="0" y="32.9" width="84" height="5.6"/><path d="M1.2 33.4 L1.7 30.5 L4.4 33.4 Z M3.8 33.4 L4.4 31.3 L5.8 33.4 Z M6.2 33.4 L6.7 29.2 L9.4 33.4 Z M8.8 33.4 L9.4 31.3 L10.8 33.4 Z M11.1 33.4 L11.6 30.3 L14.3 33.4 Z M13.7 33.4 L14.3 31.3 L15.7 33.4 Z M16.1 33.4 L16.6 28.8 L19.2 33.4 Z M18.7 33.4 L19.2 31.3 L20.6 33.4 Z M21.0 33.4 L21.5 29.6 L24.2 33.4 Z M23.6 33.4 L24.2 31.3 L25.6 33.4 Z M25.9 33.4 L26.4 30.9 L29.1 33.4 Z M28.6 33.4 L29.1 31.3 L30.5 33.4 Z M30.9 33.4 L31.4 29.4 L34.1 33.4 Z M33.5 33.4 L34.1 31.3 L35.5 33.4 Z M35.9 33.4 L36.4 28.8 L39.1 33.4 Z M38.5 33.4 L39.1 31.3 L40.5 33.4 Z M40.8 33.4 L41.3 30.3 L44.0 33.4 Z M43.4 33.4 L44.0 31.3 L45.4 33.4 Z M45.8 33.4 L46.3 28.3 L49.0 33.4 Z M48.4 33.4 L49.0 31.3 L50.4 33.4 Z M50.7 33.4 L51.2 28.6 L53.9 33.4 Z M53.3 33.4 L53.9 31.3 L55.3 33.4 Z M55.7 33.4 L56.2 30.8 L58.9 33.4 Z M58.3 33.4 L58.9 31.3 L60.3 33.4 Z M60.6 33.4 L61.1 29.6 L63.8 33.4 Z M63.2 33.4 L63.8 31.3 L65.2 33.4 Z M65.6 33.4 L66.1 28.4 L68.8 33.4 Z M68.2 33.4 L68.8 31.3 L70.2 33.4 Z M70.5 33.4 L71.0 30.5 L73.7 33.4 Z M73.1 33.4 L73.7 31.3 L75.1 33.4 Z M75.5 33.4 L76.0 30.6 L78.7 33.4 Z M78.0 33.4 L78.7 31.3 L80.0 33.4 Z M80.4 33.4 L80.9 29.7 L83.6 33.4 Z M83.0 33.4 L83.6 31.3 L85.0 33.4 Z M85.4 33.4 L85.9 30.0 L88.6 33.4 Z M88.0 33.4 L88.6 31.3 L90.0 33.4 Z M1.7 38.199999999999996 L2.4 44.0 L4.8 38.199999999999996 Z M4.2 38.199999999999996 L4.8 41.1 L6.0 38.199999999999996 Z M6.7 38.199999999999996 L7.4 43.3 L9.8 38.199999999999996 Z M9.2 38.199999999999996 L9.8 41.1 L10.9 38.199999999999996 Z M11.6 38.199999999999996 L12.3 44.3 L14.7 38.199999999999996 Z M14.1 38.199999999999996 L14.7 41.1 L15.9 38.199999999999996 Z M16.6 38.199999999999996 L17.2 43.4 L19.7 38.199999999999996 Z M19.1 38.199999999999996 L19.7 41.1 L20.9 38.199999999999996 Z M21.5 38.199999999999996 L22.2 42.6 L24.6 38.199999999999996 Z M24.0 38.199999999999996 L24.6 41.1 L25.8 38.199999999999996 Z M26.4 38.199999999999996 L27.1 43.0 L29.6 38.199999999999996 Z M28.9 38.199999999999996 L29.6 41.1 L30.8 38.199999999999996 Z M31.4 38.199999999999996 L32.1 42.1 L34.5 38.199999999999996 Z M33.9 38.199999999999996 L34.5 41.1 L35.7 38.199999999999996 Z M36.4 38.199999999999996 L37.1 42.6 L39.5 38.199999999999996 Z M38.9 38.199999999999996 L39.5 41.1 L40.6 38.199999999999996 Z M41.3 38.199999999999996 L42.0 42.0 L44.4 38.199999999999996 Z M43.8 38.199999999999996 L44.4 41.1 L45.6 38.199999999999996 Z M46.3 38.199999999999996 L47.0 44.1 L49.4 38.199999999999996 Z M48.8 38.199999999999996 L49.4 41.1 L50.6 38.199999999999996 Z M51.2 38.199999999999996 L51.9 43.7 L54.3 38.199999999999996 Z M53.7 38.199999999999996 L54.3 41.1 L55.5 38.199999999999996 Z M56.2 38.199999999999996 L56.9 42.9 L59.3 38.199999999999996 Z M58.7 38.199999999999996 L59.3 41.1 L60.5 38.199999999999996 Z M61.1 38.199999999999996 L61.8 42.2 L64.2 38.199999999999996 Z M63.6 38.199999999999996 L64.2 41.1 L65.4 38.199999999999996 Z M66.1 38.199999999999996 L66.8 43.0 L69.2 38.199999999999996 Z M68.6 38.199999999999996 L69.2 41.1 L70.4 38.199999999999996 Z M71.0 38.199999999999996 L71.7 44.4 L74.1 38.199999999999996 Z M73.5 38.199999999999996 L74.1 41.1 L75.3 38.199999999999996 Z M76.0 38.199999999999996 L76.7 44.7 L79.0 38.199999999999996 Z M78.5 38.199999999999996 L79.0 41.1 L80.2 38.199999999999996 Z M80.9 38.199999999999996 L81.6 43.6 L84.0 38.199999999999996 Z M83.4 38.199999999999996 L84.0 41.1 L85.2 38.199999999999996 Z M85.9 38.199999999999996 L86.6 43.4 L89.0 38.199999999999996 Z M88.4 38.199999999999996 L89.0 41.1 L90.2 38.199999999999996 Z "/></g></svg></div>
<div style="position:absolute;left:570.42px;top:435.75px;width:80.36px;height:53.20px;background:#cca316;border:1.5px solid #141414;box-sizing:border-box;border-radius:5px;overflow:hidden;box-shadow:inset 0 1px 0 rgba(255,255,255,0.10)"><div style="position:absolute;left:6.0px;top:4.31px;font-size:12.1px;line-height:15px;color:#fbfbf2;white-space:nowrap;-webkit-text-stroke:0.4px #fbfbf2">East Bay</div><svg style="position:absolute;left:0;top:0" width="79" height="52"><g fill="#fdeaa8"><rect x="0" y="32.9" width="79" height="5.6"/><path d="M1.2 33.4 L1.7 28.4 L4.4 33.4 Z M3.8 33.4 L4.4 31.3 L5.8 33.4 Z M6.2 33.4 L6.7 30.8 L9.4 33.4 Z M8.8 33.4 L9.4 31.3 L10.8 33.4 Z M11.1 33.4 L11.6 30.4 L14.3 33.4 Z M13.7 33.4 L14.3 31.3 L15.7 33.4 Z M16.1 33.4 L16.6 29.2 L19.2 33.4 Z M18.7 33.4 L19.2 31.3 L20.6 33.4 Z M21.0 33.4 L21.5 28.6 L24.2 33.4 Z M23.6 33.4 L24.2 31.3 L25.6 33.4 Z M25.9 33.4 L26.4 28.4 L29.1 33.4 Z M28.6 33.4 L29.1 31.3 L30.5 33.4 Z M30.9 33.4 L31.4 29.3 L34.1 33.4 Z M33.5 33.4 L34.1 31.3 L35.5 33.4 Z M35.9 33.4 L36.4 29.1 L39.1 33.4 Z M38.5 33.4 L39.1 31.3 L40.5 33.4 Z M40.8 33.4 L41.3 29.1 L44.0 33.4 Z M43.4 33.4 L44.0 31.3 L45.4 33.4 Z M45.8 33.4 L46.3 28.6 L49.0 33.4 Z M48.4 33.4 L49.0 31.3 L50.4 33.4 Z M50.7 33.4 L51.2 30.1 L53.9 33.4 Z M53.3 33.4 L53.9 31.3 L55.3 33.4 Z M55.7 33.4 L56.2 28.7 L58.9 33.4 Z M58.3 33.4 L58.9 31.3 L60.3 33.4 Z M60.6 33.4 L61.1 28.5 L63.8 33.4 Z M63.2 33.4 L63.8 31.3 L65.2 33.4 Z M65.6 33.4 L66.1 28.4 L68.8 33.4 Z M68.2 33.4 L68.8 31.3 L70.2 33.4 Z M70.5 33.4 L71.0 29.1 L73.7 33.4 Z M73.1 33.4 L73.7 31.3 L75.1 33.4 Z M75.5 33.4 L76.0 30.2 L78.7 33.4 Z M78.0 33.4 L78.7 31.3 L80.0 33.4 Z M80.4 33.4 L80.9 30.1 L83.6 33.4 Z M83.0 33.4 L83.6 31.3 L85.0 33.4 Z M1.7 38.199999999999996 L2.4 42.3 L4.8 38.199999999999996 Z M4.2 38.199999999999996 L4.8 41.1 L6.0 38.199999999999996 Z M6.7 38.199999999999996 L7.4 44.9 L9.8 38.199999999999996 Z M9.2 38.199999999999996 L9.8 41.1 L10.9 38.199999999999996 Z M11.6 38.199999999999996 L12.3 42.3 L14.7 38.199999999999996 Z M14.1 38.199999999999996 L14.7 41.1 L15.9 38.199999999999996 Z M16.6 38.199999999999996 L17.2 42.9 L19.7 38.199999999999996 Z M19.1 38.199999999999996 L19.7 41.1 L20.9 38.199999999999996 Z M21.5 38.199999999999996 L22.2 42.6 L24.6 38.199999999999996 Z M24.0 38.199999999999996 L24.6 41.1 L25.8 38.199999999999996 Z M26.4 38.199999999999996 L27.1 42.9 L29.6 38.199999999999996 Z M28.9 38.199999999999996 L29.6 41.1 L30.8 38.199999999999996 Z M31.4 38.199999999999996 L32.1 44.7 L34.5 38.199999999999996 Z M33.9 38.199999999999996 L34.5 41.1 L35.7 38.199999999999996 Z M36.4 38.199999999999996 L37.1 44.7 L39.5 38.199999999999996 Z M38.9 38.199999999999996 L39.5 41.1 L40.6 38.199999999999996 Z M41.3 38.199999999999996 L42.0 42.0 L44.4 38.199999999999996 Z M43.8 38.199999999999996 L44.4 41.1 L45.6 38.199999999999996 Z M46.3 38.199999999999996 L47.0 43.7 L49.4 38.199999999999996 Z M48.8 38.199999999999996 L49.4 41.1 L50.6 38.199999999999996 Z M51.2 38.199999999999996 L51.9 42.5 L54.3 38.199999999999996 Z M53.7 38.199999999999996 L54.3 41.1 L55.5 38.199999999999996 Z M56.2 38.199999999999996 L56.9 43.6 L59.3 38.199999999999996 Z M58.7 38.199999999999996 L59.3 41.1 L60.5 38.199999999999996 Z M61.1 38.199999999999996 L61.8 44.2 L64.2 38.199999999999996 Z M63.6 38.199999999999996 L64.2 41.1 L65.4 38.199999999999996 Z M66.1 38.199999999999996 L66.8 43.6 L69.2 38.199999999999996 Z M68.6 38.199999999999996 L69.2 41.1 L70.4 38.199999999999996 Z M71.0 38.199999999999996 L71.7 43.7 L74.1 38.199999999999996 Z M73.5 38.199999999999996 L74.1 41.1 L75.3 38.199999999999996 Z M76.0 38.199999999999996 L76.7 44.8 L79.0 38.199999999999996 Z M78.5 38.199999999999996 L79.0 41.1 L80.2 38.199999999999996 Z M80.9 38.199999999999996 L81.6 44.2 L84.0 38.199999999999996 Z M83.4 38.199999999999996 L84.0 41.1 L85.2 38.199999999999996 Z "/></g></svg></div>
<div style="position:absolute;left:649.78px;top:435.75px;width:80.36px;height:53.20px;background:#cca316;border:1.5px solid #141414;box-sizing:border-box;border-radius:5px;overflow:hidden;box-shadow:inset 0 1px 0 rgba(255,255,255,0.10)"><div style="position:absolute;left:6.0px;top:4.31px;font-size:12.1px;line-height:15px;color:#fbfbf2;white-space:nowrap;-webkit-text-stroke:0.4px #fbfbf2">East Bay</div><svg style="position:absolute;left:0;top:0" width="79" height="52"><g fill="#fdeaa8"><rect x="0" y="32.9" width="79" height="5.6"/><path d="M1.2 33.4 L1.7 28.5 L4.4 33.4 Z M3.8 33.4 L4.4 31.3 L5.8 33.4 Z M6.2 33.4 L6.7 28.6 L9.4 33.4 Z M8.8 33.4 L9.4 31.3 L10.8 33.4 Z M11.1 33.4 L11.6 29.4 L14.3 33.4 Z M13.7 33.4 L14.3 31.3 L15.7 33.4 Z M16.1 33.4 L16.6 29.5 L19.2 33.4 Z M18.7 33.4 L19.2 31.3 L20.6 33.4 Z M21.0 33.4 L21.5 30.4 L24.2 33.4 Z M23.6 33.4 L24.2 31.3 L25.6 33.4 Z M25.9 33.4 L26.4 30.3 L29.1 33.4 Z M28.6 33.4 L29.1 31.3 L30.5 33.4 Z M30.9 33.4 L31.4 30.8 L34.1 33.4 Z M33.5 33.4 L34.1 31.3 L35.5 33.4 Z M35.9 33.4 L36.4 29.1 L39.1 33.4 Z M38.5 33.4 L39.1 31.3 L40.5 33.4 Z M40.8 33.4 L41.3 29.6 L44.0 33.4 Z M43.4 33.4 L44.0 31.3 L45.4 33.4 Z M45.8 33.4 L46.3 30.0 L49.0 33.4 Z M48.4 33.4 L49.0 31.3 L50.4 33.4 Z M50.7 33.4 L51.2 28.9 L53.9 33.4 Z M53.3 33.4 L53.9 31.3 L55.3 33.4 Z M55.7 33.4 L56.2 29.2 L58.9 33.4 Z M58.3 33.4 L58.9 31.3 L60.3 33.4 Z M60.6 33.4 L61.1 28.4 L63.8 33.4 Z M63.2 33.4 L63.8 31.3 L65.2 33.4 Z M65.6 33.4 L66.1 28.9 L68.8 33.4 Z M68.2 33.4 L68.8 31.3 L70.2 33.4 Z M70.5 33.4 L71.0 29.4 L73.7 33.4 Z M73.1 33.4 L73.7 31.3 L75.1 33.4 Z M75.5 33.4 L76.0 30.1 L78.7 33.4 Z M78.0 33.4 L78.7 31.3 L80.0 33.4 Z M80.4 33.4 L80.9 29.7 L83.6 33.4 Z M83.0 33.4 L83.6 31.3 L85.0 33.4 Z M1.7 38.199999999999996 L2.4 44.7 L4.8 38.199999999999996 Z M4.2 38.199999999999996 L4.8 41.1 L6.0 38.199999999999996 Z M6.7 38.199999999999996 L7.4 42.2 L9.8 38.199999999999996 Z M9.2 38.199999999999996 L9.8 41.1 L10.9 38.199999999999996 Z M11.6 38.199999999999996 L12.3 43.2 L14.7 38.199999999999996 Z M14.1 38.199999999999996 L14.7 41.1 L15.9 38.199999999999996 Z M16.6 38.199999999999996 L17.2 42.3 L19.7 38.199999999999996 Z M19.1 38.199999999999996 L19.7 41.1 L20.9 38.199999999999996 Z M21.5 38.199999999999996 L22.2 43.2 L24.6 38.199999999999996 Z M24.0 38.199999999999996 L24.6 41.1 L25.8 38.199999999999996 Z M26.4 38.199999999999996 L27.1 43.3 L29.6 38.199999999999996 Z M28.9 38.199999999999996 L29.6 41.1 L30.8 38.199999999999996 Z M31.4 38.199999999999996 L32.1 42.2 L34.5 38.199999999999996 Z M33.9 38.199999999999996 L34.5 41.1 L35.7 38.199999999999996 Z M36.4 38.199999999999996 L37.1 43.2 L39.5 38.199999999999996 Z M38.9 38.199999999999996 L39.5 41.1 L40.6 38.199999999999996 Z M41.3 38.199999999999996 L42.0 44.1 L44.4 38.199999999999996 Z M43.8 38.199999999999996 L44.4 41.1 L45.6 38.199999999999996 Z M46.3 38.199999999999996 L47.0 42.1 L49.4 38.199999999999996 Z M48.8 38.199999999999996 L49.4 41.1 L50.6 38.199999999999996 Z M51.2 38.199999999999996 L51.9 43.7 L54.3 38.199999999999996 Z M53.7 38.199999999999996 L54.3 41.1 L55.5 38.199999999999996 Z M56.2 38.199999999999996 L56.9 43.8 L59.3 38.199999999999996 Z M58.7 38.199999999999996 L59.3 41.1 L60.5 38.199999999999996 Z M61.1 38.199999999999996 L61.8 43.0 L64.2 38.199999999999996 Z M63.6 38.199999999999996 L64.2 41.1 L65.4 38.199999999999996 Z M66.1 38.199999999999996 L66.8 43.0 L69.2 38.199999999999996 Z M68.6 38.199999999999996 L69.2 41.1 L70.4 38.199999999999996 Z M71.0 38.199999999999996 L71.7 43.9 L74.1 38.199999999999996 Z M73.5 38.199999999999996 L74.1 41.1 L75.3 38.199999999999996 Z M76.0 38.199999999999996 L76.7 42.2 L79.0 38.199999999999996 Z M78.5 38.199999999999996 L79.0 41.1 L80.2 38.199999999999996 Z M80.9 38.199999999999996 L81.6 44.1 L84.0 38.199999999999996 Z M83.4 38.199999999999996 L84.0 41.1 L85.2 38.199999999999996 Z "/></g></svg></div>
<div style="position:absolute;left:729.14px;top:435.75px;width:80.36px;height:53.20px;background:#cca316;border:1.5px solid #141414;box-sizing:border-box;border-radius:5px;overflow:hidden;box-shadow:inset 0 1px 0 rgba(255,255,255,0.10)"><div style="position:absolute;left:6.0px;top:4.31px;font-size:12.1px;line-height:15px;color:#fbfbf2;white-space:nowrap;-webkit-text-stroke:0.4px #fbfbf2">East Bay</div><svg style="position:absolute;left:0;top:0" width="79" height="52"><g fill="#fdeaa8"><rect x="0" y="32.9" width="79" height="5.6"/><path d="M1.2 33.4 L1.7 29.0 L4.4 33.4 Z M3.8 33.4 L4.4 31.3 L5.8 33.4 Z M6.2 33.4 L6.7 30.4 L9.4 33.4 Z M8.8 33.4 L9.4 31.3 L10.8 33.4 Z M11.1 33.4 L11.6 30.4 L14.3 33.4 Z M13.7 33.4 L14.3 31.3 L15.7 33.4 Z M16.1 33.4 L16.6 30.7 L19.2 33.4 Z M18.7 33.4 L19.2 31.3 L20.6 33.4 Z M21.0 33.4 L21.5 30.5 L24.2 33.4 Z M23.6 33.4 L24.2 31.3 L25.6 33.4 Z M25.9 33.4 L26.4 29.0 L29.1 33.4 Z M28.6 33.4 L29.1 31.3 L30.5 33.4 Z M30.9 33.4 L31.4 29.8 L34.1 33.4 Z M33.5 33.4 L34.1 31.3 L35.5 33.4 Z M35.9 33.4 L36.4 28.3 L39.1 33.4 Z M38.5 33.4 L39.1 31.3 L40.5 33.4 Z M40.8 33.4 L41.3 29.6 L44.0 33.4 Z M43.4 33.4 L44.0 31.3 L45.4 33.4 Z M45.8 33.4 L46.3 29.0 L49.0 33.4 Z M48.4 33.4 L49.0 31.3 L50.4 33.4 Z M50.7 33.4 L51.2 30.1 L53.9 33.4 Z M53.3 33.4 L53.9 31.3 L55.3 33.4 Z M55.7 33.4 L56.2 30.7 L58.9 33.4 Z M58.3 33.4 L58.9 31.3 L60.3 33.4 Z M60.6 33.4 L61.1 28.7 L63.8 33.4 Z M63.2 33.4 L63.8 31.3 L65.2 33.4 Z M65.6 33.4 L66.1 30.1 L68.8 33.4 Z M68.2 33.4 L68.8 31.3 L70.2 33.4 Z M70.5 33.4 L71.0 29.5 L73.7 33.4 Z M73.1 33.4 L73.7 31.3 L75.1 33.4 Z M75.5 33.4 L76.0 28.6 L78.7 33.4 Z M78.0 33.4 L78.7 31.3 L80.0 33.4 Z M80.4 33.4 L80.9 30.1 L83.6 33.4 Z M83.0 33.4 L83.6 31.3 L85.0 33.4 Z M1.7 38.199999999999996 L2.4 44.4 L4.8 38.199999999999996 Z M4.2 38.199999999999996 L4.8 41.1 L6.0 38.199999999999996 Z M6.7 38.199999999999996 L7.4 44.9 L9.8 38.199999999999996 Z M9.2 38.199999999999996 L9.8 41.1 L10.9 38.199999999999996 Z M11.6 38.199999999999996 L12.3 43.9 L14.7 38.199999999999996 Z M14.1 38.199999999999996 L14.7 41.1 L15.9 38.199999999999996 Z M16.6 38.199999999999996 L17.2 44.2 L19.7 38.199999999999996 Z M19.1 38.199999999999996 L19.7 41.1 L20.9 38.199999999999996 Z M21.5 38.199999999999996 L22.2 44.0 L24.6 38.199999999999996 Z M24.0 38.199999999999996 L24.6 41.1 L25.8 38.199999999999996 Z M26.4 38.199999999999996 L27.1 44.2 L29.6 38.199999999999996 Z M28.9 38.199999999999996 L29.6 41.1 L30.8 38.199999999999996 Z M31.4 38.199999999999996 L32.1 44.5 L34.5 38.199999999999996 Z M33.9 38.199999999999996 L34.5 41.1 L35.7 38.199999999999996 Z M36.4 38.199999999999996 L37.1 42.2 L39.5 38.199999999999996 Z M38.9 38.199999999999996 L39.5 41.1 L40.6 38.199999999999996 Z M41.3 38.199999999999996 L42.0 44.8 L44.4 38.199999999999996 Z M43.8 38.199999999999996 L44.4 41.1 L45.6 38.199999999999996 Z M46.3 38.199999999999996 L47.0 43.2 L49.4 38.199999999999996 Z M48.8 38.199999999999996 L49.4 41.1 L50.6 38.199999999999996 Z M51.2 38.199999999999996 L51.9 44.8 L54.3 38.199999999999996 Z M53.7 38.199999999999996 L54.3 41.1 L55.5 38.199999999999996 Z M56.2 38.199999999999996 L56.9 44.2 L59.3 38.199999999999996 Z M58.7 38.199999999999996 L59.3 41.1 L60.5 38.199999999999996 Z M61.1 38.199999999999996 L61.8 42.4 L64.2 38.199999999999996 Z M63.6 38.199999999999996 L64.2 41.1 L65.4 38.199999999999996 Z M66.1 38.199999999999996 L66.8 42.8 L69.2 38.199999999999996 Z M68.6 38.199999999999996 L69.2 41.1 L70.4 38.199999999999996 Z M71.0 38.199999999999996 L71.7 43.0 L74.1 38.199999999999996 Z M73.5 38.199999999999996 L74.1 41.1 L75.3 38.199999999999996 Z M76.0 38.199999999999996 L76.7 44.7 L79.0 38.199999999999996 Z M78.5 38.199999999999996 L79.0 41.1 L80.2 38.199999999999996 Z M80.9 38.199999999999996 L81.6 44.6 L84.0 38.199999999999996 Z M83.4 38.199999999999996 L84.0 41.1 L85.2 38.199999999999996 Z "/></g></svg></div>
<div style="position:absolute;left:808.50px;top:435.75px;width:80.36px;height:53.20px;background:#cca316;border:1.5px solid #141414;box-sizing:border-box;border-radius:5px;overflow:hidden;box-shadow:inset 0 1px 0 rgba(255,255,255,0.10)"><div style="position:absolute;left:6.0px;top:4.31px;font-size:12.1px;line-height:15px;color:#fbfbf2;white-space:nowrap;-webkit-text-stroke:0.4px #fbfbf2">East Bay</div><svg style="position:absolute;left:0;top:0" width="79" height="52"><g fill="#fdeaa8"><rect x="0" y="32.9" width="79" height="5.6"/><path d="M1.2 33.4 L1.7 29.9 L4.4 33.4 Z M3.8 33.4 L4.4 31.3 L5.8 33.4 Z M6.2 33.4 L6.7 28.7 L9.4 33.4 Z M8.8 33.4 L9.4 31.3 L10.8 33.4 Z M11.1 33.4 L11.6 28.6 L14.3 33.4 Z M13.7 33.4 L14.3 31.3 L15.7 33.4 Z M16.1 33.4 L16.6 30.8 L19.2 33.4 Z M18.7 33.4 L19.2 31.3 L20.6 33.4 Z M21.0 33.4 L21.5 30.2 L24.2 33.4 Z M23.6 33.4 L24.2 31.3 L25.6 33.4 Z M25.9 33.4 L26.4 29.8 L29.1 33.4 Z M28.6 33.4 L29.1 31.3 L30.5 33.4 Z M30.9 33.4 L31.4 30.6 L34.1 33.4 Z M33.5 33.4 L34.1 31.3 L35.5 33.4 Z M35.9 33.4 L36.4 28.7 L39.1 33.4 Z M38.5 33.4 L39.1 31.3 L40.5 33.4 Z M40.8 33.4 L41.3 28.8 L44.0 33.4 Z M43.4 33.4 L44.0 31.3 L45.4 33.4 Z M45.8 33.4 L46.3 28.8 L49.0 33.4 Z M48.4 33.4 L49.0 31.3 L50.4 33.4 Z M50.7 33.4 L51.2 30.0 L53.9 33.4 Z M53.3 33.4 L53.9 31.3 L55.3 33.4 Z M55.7 33.4 L56.2 30.6 L58.9 33.4 Z M58.3 33.4 L58.9 31.3 L60.3 33.4 Z M60.6 33.4 L61.1 29.2 L63.8 33.4 Z M63.2 33.4 L63.8 31.3 L65.2 33.4 Z M65.6 33.4 L66.1 29.4 L68.8 33.4 Z M68.2 33.4 L68.8 31.3 L70.2 33.4 Z M70.5 33.4 L71.0 30.4 L73.7 33.4 Z M73.1 33.4 L73.7 31.3 L75.1 33.4 Z M75.5 33.4 L76.0 29.7 L78.7 33.4 Z M78.0 33.4 L78.7 31.3 L80.0 33.4 Z M80.4 33.4 L80.9 29.4 L83.6 33.4 Z M83.0 33.4 L83.6 31.3 L85.0 33.4 Z M1.7 38.199999999999996 L2.4 44.7 L4.8 38.199999999999996 Z M4.2 38.199999999999996 L4.8 41.1 L6.0 38.199999999999996 Z M6.7 38.199999999999996 L7.4 42.5 L9.8 38.199999999999996 Z M9.2 38.199999999999996 L9.8 41.1 L10.9 38.199999999999996 Z M11.6 38.199999999999996 L12.3 43.8 L14.7 38.199999999999996 Z M14.1 38.199999999999996 L14.7 41.1 L15.9 38.199999999999996 Z M16.6 38.199999999999996 L17.2 44.8 L19.7 38.199999999999996 Z M19.1 38.199999999999996 L19.7 41.1 L20.9 38.199999999999996 Z M21.5 38.199999999999996 L22.2 42.8 L24.6 38.199999999999996 Z M24.0 38.199999999999996 L24.6 41.1 L25.8 38.199999999999996 Z M26.4 38.199999999999996 L27.1 43.7 L29.6 38.199999999999996 Z M28.9 38.199999999999996 L29.6 41.1 L30.8 38.199999999999996 Z M31.4 38.199999999999996 L32.1 44.0 L34.5 38.199999999999996 Z M33.9 38.199999999999996 L34.5 41.1 L35.7 38.199999999999996 Z M36.4 38.199999999999996 L37.1 43.4 L39.5 38.199999999999996 Z M38.9 38.199999999999996 L39.5 41.1 L40.6 38.199999999999996 Z M41.3 38.199999999999996 L42.0 43.8 L44.4 38.199999999999996 Z M43.8 38.199999999999996 L44.4 41.1 L45.6 38.199999999999996 Z M46.3 38.199999999999996 L47.0 42.4 L49.4 38.199999999999996 Z M48.8 38.199999999999996 L49.4 41.1 L50.6 38.199999999999996 Z M51.2 38.199999999999996 L51.9 43.3 L54.3 38.199999999999996 Z M53.7 38.199999999999996 L54.3 41.1 L55.5 38.199999999999996 Z M56.2 38.199999999999996 L56.9 44.8 L59.3 38.199999999999996 Z M58.7 38.199999999999996 L59.3 41.1 L60.5 38.199999999999996 Z M61.1 38.199999999999996 L61.8 42.2 L64.2 38.199999999999996 Z M63.6 38.199999999999996 L64.2 41.1 L65.4 38.199999999999996 Z M66.1 38.199999999999996 L66.8 43.1 L69.2 38.199999999999996 Z M68.6 38.199999999999996 L69.2 41.1 L70.4 38.199999999999996 Z M71.0 38.199999999999996 L71.7 42.4 L74.1 38.199999999999996 Z M73.5 38.199999999999996 L74.1 41.1 L75.3 38.199999999999996 Z M76.0 38.199999999999996 L76.7 42.1 L79.0 38.199999999999996 Z M78.5 38.199999999999996 L79.0 41.1 L80.2 38.199999999999996 Z M80.9 38.199999999999996 L81.6 43.4 L84.0 38.199999999999996 Z M83.4 38.199999999999996 L84.0 41.1 L85.2 38.199999999999996 Z "/></g></svg></div>
<div style="position:absolute;left:887.86px;top:435.75px;width:80.36px;height:53.20px;background:#cca316;border:1.5px solid #141414;box-sizing:border-box;border-radius:5px;overflow:hidden;box-shadow:inset 0 1px 0 rgba(255,255,255,0.10)"><div style="position:absolute;left:6.0px;top:4.31px;font-size:12.1px;line-height:15px;color:#fbfbf2;white-space:nowrap;-webkit-text-stroke:0.4px #fbfbf2">East Bay</div><svg style="position:absolute;left:0;top:0" width="79" height="52"><g fill="#fdeaa8"><rect x="0" y="32.9" width="79" height="5.6"/><path d="M1.2 33.4 L1.7 29.0 L4.4 33.4 Z M3.8 33.4 L4.4 31.3 L5.8 33.4 Z M6.2 33.4 L6.7 30.4 L9.4 33.4 Z M8.8 33.4 L9.4 31.3 L10.8 33.4 Z M11.1 33.4 L11.6 30.8 L14.3 33.4 Z M13.7 33.4 L14.3 31.3 L15.7 33.4 Z M16.1 33.4 L16.6 28.9 L19.2 33.4 Z M18.7 33.4 L19.2 31.3 L20.6 33.4 Z M21.0 33.4 L21.5 29.1 L24.2 33.4 Z M23.6 33.4 L24.2 31.3 L25.6 33.4 Z M25.9 33.4 L26.4 29.2 L29.1 33.4 Z M28.6 33.4 L29.1 31.3 L30.5 33.4 Z M30.9 33.4 L31.4 28.3 L34.1 33.4 Z M33.5 33.4 L34.1 31.3 L35.5 33.4 Z M35.9 33.4 L36.4 28.7 L39.1 33.4 Z M38.5 33.4 L39.1 31.3 L40.5 33.4 Z M40.8 33.4 L41.3 28.4 L44.0 33.4 Z M43.4 33.4 L44.0 31.3 L45.4 33.4 Z M45.8 33.4 L46.3 28.5 L49.0 33.4 Z M48.4 33.4 L49.0 31.3 L50.4 33.4 Z M50.7 33.4 L51.2 30.6 L53.9 33.4 Z M53.3 33.4 L53.9 31.3 L55.3 33.4 Z M55.7 33.4 L56.2 28.7 L58.9 33.4 Z M58.3 33.4 L58.9 31.3 L60.3 33.4 Z M60.6 33.4 L61.1 30.0 L63.8 33.4 Z M63.2 33.4 L63.8 31.3 L65.2 33.4 Z M65.6 33.4 L66.1 30.8 L68.8 33.4 Z M68.2 33.4 L68.8 31.3 L70.2 33.4 Z M70.5 33.4 L71.0 30.1 L73.7 33.4 Z M73.1 33.4 L73.7 31.3 L75.1 33.4 Z M75.5 33.4 L76.0 30.6 L78.7 33.4 Z M78.0 33.4 L78.7 31.3 L80.0 33.4 Z M80.4 33.4 L80.9 30.9 L83.6 33.4 Z M83.0 33.4 L83.6 31.3 L85.0 33.4 Z M1.7 38.199999999999996 L2.4 42.5 L4.8 38.199999999999996 Z M4.2 38.199999999999996 L4.8 41.1 L6.0 38.199999999999996 Z M6.7 38.199999999999996 L7.4 43.7 L9.8 38.199999999999996 Z M9.2 38.199999999999996 L9.8 41.1 L10.9 38.199999999999996 Z M11.6 38.199999999999996 L12.3 44.2 L14.7 38.199999999999996 Z M14.1 38.199999999999996 L14.7 41.1 L15.9 38.199999999999996 Z M16.6 38.199999999999996 L17.2 42.0 L19.7 38.199999999999996 Z M19.1 38.199999999999996 L19.7 41.1 L20.9 38.199999999999996 Z M21.5 38.199999999999996 L22.2 43.4 L24.6 38.199999999999996 Z M24.0 38.199999999999996 L24.6 41.1 L25.8 38.199999999999996 Z M26.4 38.199999999999996 L27.1 44.8 L29.6 38.199999999999996 Z M28.9 38.199999999999996 L29.6 41.1 L30.8 38.199999999999996 Z M31.4 38.199999999999996 L32.1 43.1 L34.5 38.199999999999996 Z M33.9 38.199999999999996 L34.5 41.1 L35.7 38.199999999999996 Z M36.4 38.199999999999996 L37.1 44.3 L39.5 38.199999999999996 Z M38.9 38.199999999999996 L39.5 41.1 L40.6 38.199999999999996 Z M41.3 38.199999999999996 L42.0 42.0 L44.4 38.199999999999996 Z M43.8 38.199999999999996 L44.4 41.1 L45.6 38.199999999999996 Z M46.3 38.199999999999996 L47.0 42.6 L49.4 38.199999999999996 Z M48.8 38.199999999999996 L49.4 41.1 L50.6 38.199999999999996 Z M51.2 38.199999999999996 L51.9 43.7 L54.3 38.199999999999996 Z M53.7 38.199999999999996 L54.3 41.1 L55.5 38.199999999999996 Z M56.2 38.199999999999996 L56.9 44.8 L59.3 38.199999999999996 Z M58.7 38.199999999999996 L59.3 41.1 L60.5 38.199999999999996 Z M61.1 38.199999999999996 L61.8 44.4 L64.2 38.199999999999996 Z M63.6 38.199999999999996 L64.2 41.1 L65.4 38.199999999999996 Z M66.1 38.199999999999996 L66.8 44.8 L69.2 38.199999999999996 Z M68.6 38.199999999999996 L69.2 41.1 L70.4 38.199999999999996 Z M71.0 38.199999999999996 L71.7 43.5 L74.1 38.199999999999996 Z M73.5 38.199999999999996 L74.1 41.1 L75.3 38.199999999999996 Z M76.0 38.199999999999996 L76.7 42.0 L79.0 38.199999999999996 Z M78.5 38.199999999999996 L79.0 41.1 L80.2 38.199999999999996 Z M80.9 38.199999999999996 L81.6 43.7 L84.0 38.199999999999996 Z M83.4 38.199999999999996 L84.0 41.1 L85.2 38.199999999999996 Z "/></g></svg></div>
<div style="position:absolute;left:967.22px;top:435.75px;width:80.36px;height:53.20px;background:#cca316;border:1.5px solid #141414;box-sizing:border-box;border-radius:5px;overflow:hidden;box-shadow:inset 0 1px 0 rgba(255,255,255,0.10)"><div style="position:absolute;left:6.0px;top:4.31px;font-size:12.1px;line-height:15px;color:#fbfbf2;white-space:nowrap;-webkit-text-stroke:0.4px #fbfbf2">East Bay</div><svg style="position:absolute;left:0;top:0" width="79" height="52"><g fill="#fdeaa8"><rect x="0" y="32.9" width="79" height="5.6"/><path d="M1.2 33.4 L1.7 29.2 L4.4 33.4 Z M3.8 33.4 L4.4 31.3 L5.8 33.4 Z M6.2 33.4 L6.7 28.4 L9.4 33.4 Z M8.8 33.4 L9.4 31.3 L10.8 33.4 Z M11.1 33.4 L11.6 30.7 L14.3 33.4 Z M13.7 33.4 L14.3 31.3 L15.7 33.4 Z M16.1 33.4 L16.6 30.0 L19.2 33.4 Z M18.7 33.4 L19.2 31.3 L20.6 33.4 Z M21.0 33.4 L21.5 28.8 L24.2 33.4 Z M23.6 33.4 L24.2 31.3 L25.6 33.4 Z M25.9 33.4 L26.4 28.5 L29.1 33.4 Z M28.6 33.4 L29.1 31.3 L30.5 33.4 Z M30.9 33.4 L31.4 30.7 L34.1 33.4 Z M33.5 33.4 L34.1 31.3 L35.5 33.4 Z M35.9 33.4 L36.4 29.4 L39.1 33.4 Z M38.5 33.4 L39.1 31.3 L40.5 33.4 Z M40.8 33.4 L41.3 28.7 L44.0 33.4 Z M43.4 33.4 L44.0 31.3 L45.4 33.4 Z M45.8 33.4 L46.3 29.0 L49.0 33.4 Z M48.4 33.4 L49.0 31.3 L50.4 33.4 Z M50.7 33.4 L51.2 28.3 L53.9 33.4 Z M53.3 33.4 L53.9 31.3 L55.3 33.4 Z M55.7 33.4 L56.2 28.4 L58.9 33.4 Z M58.3 33.4 L58.9 31.3 L60.3 33.4 Z M60.6 33.4 L61.1 30.2 L63.8 33.4 Z M63.2 33.4 L63.8 31.3 L65.2 33.4 Z M65.6 33.4 L66.1 30.0 L68.8 33.4 Z M68.2 33.4 L68.8 31.3 L70.2 33.4 Z M70.5 33.4 L71.0 29.1 L73.7 33.4 Z M73.1 33.4 L73.7 31.3 L75.1 33.4 Z M75.5 33.4 L76.0 30.6 L78.7 33.4 Z M78.0 33.4 L78.7 31.3 L80.0 33.4 Z M80.4 33.4 L80.9 30.1 L83.6 33.4 Z M83.0 33.4 L83.6 31.3 L85.0 33.4 Z M1.7 38.199999999999996 L2.4 44.0 L4.8 38.199999999999996 Z M4.2 38.199999999999996 L4.8 41.1 L6.0 38.199999999999996 Z M6.7 38.199999999999996 L7.4 42.5 L9.8 38.199999999999996 Z M9.2 38.199999999999996 L9.8 41.1 L10.9 38.199999999999996 Z M11.6 38.199999999999996 L12.3 44.4 L14.7 38.199999999999996 Z M14.1 38.199999999999996 L14.7 41.1 L15.9 38.199999999999996 Z M16.6 38.199999999999996 L17.2 43.0 L19.7 38.199999999999996 Z M19.1 38.199999999999996 L19.7 41.1 L20.9 38.199999999999996 Z M21.5 38.199999999999996 L22.2 42.5 L24.6 38.199999999999996 Z M24.0 38.199999999999996 L24.6 41.1 L25.8 38.199999999999996 Z M26.4 38.199999999999996 L27.1 43.4 L29.6 38.199999999999996 Z M28.9 38.199999999999996 L29.6 41.1 L30.8 38.199999999999996 Z M31.4 38.199999999999996 L32.1 44.7 L34.5 38.199999999999996 Z M33.9 38.199999999999996 L34.5 41.1 L35.7 38.199999999999996 Z M36.4 38.199999999999996 L37.1 42.1 L39.5 38.199999999999996 Z M38.9 38.199999999999996 L39.5 41.1 L40.6 38.199999999999996 Z M41.3 38.199999999999996 L42.0 44.2 L44.4 38.199999999999996 Z M43.8 38.199999999999996 L44.4 41.1 L45.6 38.199999999999996 Z M46.3 38.199999999999996 L47.0 43.9 L49.4 38.199999999999996 Z M48.8 38.199999999999996 L49.4 41.1 L50.6 38.199999999999996 Z M51.2 38.199999999999996 L51.9 41.9 L54.3 38.199999999999996 Z M53.7 38.199999999999996 L54.3 41.1 L55.5 38.199999999999996 Z M56.2 38.199999999999996 L56.9 43.8 L59.3 38.199999999999996 Z M58.7 38.199999999999996 L59.3 41.1 L60.5 38.199999999999996 Z M61.1 38.199999999999996 L61.8 43.7 L64.2 38.199999999999996 Z M63.6 38.199999999999996 L64.2 41.1 L65.4 38.199999999999996 Z M66.1 38.199999999999996 L66.8 43.9 L69.2 38.199999999999996 Z M68.6 38.199999999999996 L69.2 41.1 L70.4 38.199999999999996 Z M71.0 38.199999999999996 L71.7 43.5 L74.1 38.199999999999996 Z M73.5 38.199999999999996 L74.1 41.1 L75.3 38.199999999999996 Z M76.0 38.199999999999996 L76.7 43.1 L79.0 38.199999999999996 Z M78.5 38.199999999999996 L79.0 41.1 L80.2 38.199999999999996 Z M80.9 38.199999999999996 L81.6 44.1 L84.0 38.199999999999996 Z M83.4 38.199999999999996 L84.0 41.1 L85.2 38.199999999999996 Z "/></g></svg></div>
<div style="position:absolute;left:1046.58px;top:435.75px;width:80.36px;height:53.20px;background:#cca316;border:1.5px solid #141414;box-sizing:border-box;border-radius:5px;overflow:hidden;box-shadow:inset 0 1px 0 rgba(255,255,255,0.10)"><div style="position:absolute;left:6.0px;top:4.31px;font-size:12.1px;line-height:15px;color:#fbfbf2;white-space:nowrap;-webkit-text-stroke:0.4px #fbfbf2">East Bay</div><svg style="position:absolute;left:0;top:0" width="79" height="52"><g fill="#fdeaa8"><rect x="0" y="32.9" width="79" height="5.6"/><path d="M1.2 33.4 L1.7 30.6 L4.4 33.4 Z M3.8 33.4 L4.4 31.3 L5.8 33.4 Z M6.2 33.4 L6.7 29.3 L9.4 33.4 Z M8.8 33.4 L9.4 31.3 L10.8 33.4 Z M11.1 33.4 L11.6 30.6 L14.3 33.4 Z M13.7 33.4 L14.3 31.3 L15.7 33.4 Z M16.1 33.4 L16.6 29.8 L19.2 33.4 Z M18.7 33.4 L19.2 31.3 L20.6 33.4 Z M21.0 33.4 L21.5 29.9 L24.2 33.4 Z M23.6 33.4 L24.2 31.3 L25.6 33.4 Z M25.9 33.4 L26.4 30.6 L29.1 33.4 Z M28.6 33.4 L29.1 31.3 L30.5 33.4 Z M30.9 33.4 L31.4 30.8 L34.1 33.4 Z M33.5 33.4 L34.1 31.3 L35.5 33.4 Z M35.9 33.4 L36.4 30.7 L39.1 33.4 Z M38.5 33.4 L39.1 31.3 L40.5 33.4 Z M40.8 33.4 L41.3 30.1 L44.0 33.4 Z M43.4 33.4 L44.0 31.3 L45.4 33.4 Z M45.8 33.4 L46.3 30.6 L49.0 33.4 Z M48.4 33.4 L49.0 31.3 L50.4 33.4 Z M50.7 33.4 L51.2 29.6 L53.9 33.4 Z M53.3 33.4 L53.9 31.3 L55.3 33.4 Z M55.7 33.4 L56.2 29.2 L58.9 33.4 Z M58.3 33.4 L58.9 31.3 L60.3 33.4 Z M60.6 33.4 L61.1 30.3 L63.8 33.4 Z M63.2 33.4 L63.8 31.3 L65.2 33.4 Z M65.6 33.4 L66.1 30.6 L68.8 33.4 Z M68.2 33.4 L68.8 31.3 L70.2 33.4 Z M70.5 33.4 L71.0 28.9 L73.7 33.4 Z M73.1 33.4 L73.7 31.3 L75.1 33.4 Z M75.5 33.4 L76.0 30.2 L78.7 33.4 Z M78.0 33.4 L78.7 31.3 L80.0 33.4 Z M80.4 33.4 L80.9 28.5 L83.6 33.4 Z M83.0 33.4 L83.6 31.3 L85.0 33.4 Z M1.7 38.199999999999996 L2.4 42.3 L4.8 38.199999999999996 Z M4.2 38.199999999999996 L4.8 41.1 L6.0 38.199999999999996 Z M6.7 38.199999999999996 L7.4 42.4 L9.8 38.199999999999996 Z M9.2 38.199999999999996 L9.8 41.1 L10.9 38.199999999999996 Z M11.6 38.199999999999996 L12.3 43.3 L14.7 38.199999999999996 Z M14.1 38.199999999999996 L14.7 41.1 L15.9 38.199999999999996 Z M16.6 38.199999999999996 L17.2 42.5 L19.7 38.199999999999996 Z M19.1 38.199999999999996 L19.7 41.1 L20.9 38.199999999999996 Z M21.5 38.199999999999996 L22.2 44.4 L24.6 38.199999999999996 Z M24.0 38.199999999999996 L24.6 41.1 L25.8 38.199999999999996 Z M26.4 38.199999999999996 L27.1 42.5 L29.6 38.199999999999996 Z M28.9 38.199999999999996 L29.6 41.1 L30.8 38.199999999999996 Z M31.4 38.199999999999996 L32.1 42.6 L34.5 38.199999999999996 Z M33.9 38.199999999999996 L34.5 41.1 L35.7 38.199999999999996 Z M36.4 38.199999999999996 L37.1 44.9 L39.5 38.199999999999996 Z M38.9 38.199999999999996 L39.5 41.1 L40.6 38.199999999999996 Z M41.3 38.199999999999996 L42.0 44.9 L44.4 38.199999999999996 Z M43.8 38.199999999999996 L44.4 41.1 L45.6 38.199999999999996 Z M46.3 38.199999999999996 L47.0 44.6 L49.4 38.199999999999996 Z M48.8 38.199999999999996 L49.4 41.1 L50.6 38.199999999999996 Z M51.2 38.199999999999996 L51.9 44.0 L54.3 38.199999999999996 Z M53.7 38.199999999999996 L54.3 41.1 L55.5 38.199999999999996 Z M56.2 38.199999999999996 L56.9 42.7 L59.3 38.199999999999996 Z M58.7 38.199999999999996 L59.3 41.1 L60.5 38.199999999999996 Z M61.1 38.199999999999996 L61.8 43.9 L64.2 38.199999999999996 Z M63.6 38.199999999999996 L64.2 41.1 L65.4 38.199999999999996 Z M66.1 38.199999999999996 L66.8 41.9 L69.2 38.199999999999996 Z M68.6 38.199999999999996 L69.2 41.1 L70.4 38.199999999999996 Z M71.0 38.199999999999996 L71.7 43.8 L74.1 38.199999999999996 Z M73.5 38.199999999999996 L74.1 41.1 L75.3 38.199999999999996 Z M76.0 38.199999999999996 L76.7 43.5 L79.0 38.199999999999996 Z M78.5 38.199999999999996 L79.0 41.1 L80.2 38.199999999999996 Z M80.9 38.199999999999996 L81.6 42.7 L84.0 38.199999999999996 Z M83.4 38.199999999999996 L84.0 41.1 L85.2 38.199999999999996 Z "/></g></svg></div>
<div style="position:absolute;left:491.06px;top:489.07px;width:40.68px;height:53.20px;background:#1fa336;border:1.5px solid #141414;box-sizing:border-box;border-radius:5px;overflow:hidden;box-shadow:inset 0 1px 0 rgba(255,255,255,0.10)"><div style="position:absolute;left:6.0px;top:4.40px;font-size:12.0px;line-height:15px;color:#fbfbf2;white-space:nowrap;-webkit-text-stroke:0.4px #fbfbf2">Class</div><svg style="position:absolute;left:0;top:0" width="40" height="52"><rect x="0.0" y="27.3" width="5.6" height="2" fill="#f6fbe6" opacity="0.95"/><rect x="7.4" y="33.1" width="3.1" height="2" fill="#f6fbe6" opacity="0.95"/><rect x="9.6" y="36.8" width="4.9" height="2" fill="#f6fbe6" opacity="0.95"/><rect x="16.6" y="36.8" width="3.8" height="2" fill="#f6fbe6" opacity="0.95"/><rect x="19.2" y="40.2" width="5.5" height="2" fill="#f6fbe6" opacity="0.95"/><rect x="26.6" y="40.2" width="3.4" height="2" fill="#f6fbe6" opacity="0.95"/><rect x="28.8" y="33.7" width="6.8" height="2" fill="#f6fbe6" opacity="0.95"/></svg></div>
<div style="position:absolute;left:530.74px;top:489.07px;width:40.68px;height:53.20px;background:#1fa336;border:1.5px solid #141414;box-sizing:border-box;border-radius:5px;overflow:hidden;box-shadow:inset 0 1px 0 rgba(255,255,255,0.10)"><div style="position:absolute;left:6.0px;top:4.40px;font-size:12.0px;line-height:15px;color:#fbfbf2;white-space:nowrap;-webkit-text-stroke:0.4px #fbfbf2">Class</div><svg style="position:absolute;left:0;top:0" width="40" height="52"><rect x="0.0" y="27.3" width="5.8" height="2" fill="#f6fbe6" opacity="0.95"/><rect x="6.1" y="33.1" width="3.2" height="2" fill="#f6fbe6" opacity="0.95"/><rect x="8.3" y="36.8" width="6.5" height="2" fill="#f6fbe6" opacity="0.95"/><rect x="18.2" y="40.2" width="6.2" height="2" fill="#f6fbe6" opacity="0.95"/><rect x="26.6" y="40.2" width="3.7" height="2" fill="#f6fbe6" opacity="0.95"/><rect x="28.1" y="33.1" width="6.2" height="2" fill="#f6fbe6" opacity="0.95"/></svg></div>
<div style="position:absolute;left:570.42px;top:489.07px;width:40.68px;height:53.20px;background:#1fa336;border:1.5px solid #141414;box-sizing:border-box;border-radius:5px;overflow:hidden;box-shadow:inset 0 1px 0 rgba(255,255,255,0.10)"><div style="position:absolute;left:6.0px;top:4.40px;font-size:12.0px;line-height:15px;color:#fbfbf2;white-space:nowrap;-webkit-text-stroke:0.4px #fbfbf2">Class</div><svg style="position:absolute;left:0;top:0" width="40" height="52"><rect x="0.0" y="27.3" width="5.6" height="2" fill="#f6fbe6" opacity="0.95"/><rect x="7.4" y="33.1" width="3.1" height="2" fill="#f6fbe6" opacity="0.95"/><rect x="9.6" y="36.8" width="4.9" height="2" fill="#f6fbe6" opacity="0.95"/><rect x="16.6" y="36.8" width="3.8" height="2" fill="#f6fbe6" opacity="0.95"/><rect x="19.2" y="40.2" width="5.5" height="2" fill="#f6fbe6" opacity="0.95"/><rect x="26.6" y="40.2" width="3.4" height="2" fill="#f6fbe6" opacity="0.95"/><rect x="28.8" y="33.7" width="6.8" height="2" fill="#f6fbe6" opacity="0.95"/></svg></div>
<div style="position:absolute;left:610.10px;top:489.07px;width:40.68px;height:53.20px;background:#1fa336;border:1.5px solid #141414;box-sizing:border-box;border-radius:5px;overflow:hidden;box-shadow:inset 0 1px 0 rgba(255,255,255,0.10)"><div style="position:absolute;left:6.0px;top:4.40px;font-size:12.0px;line-height:15px;color:#fbfbf2;white-space:nowrap;-webkit-text-stroke:0.4px #fbfbf2">Class</div><svg style="position:absolute;left:0;top:0" width="40" height="52"><rect x="0.0" y="27.3" width="5.8" height="2" fill="#f6fbe6" opacity="0.95"/><rect x="6.1" y="33.1" width="3.2" height="2" fill="#f6fbe6" opacity="0.95"/><rect x="8.3" y="36.8" width="6.5" height="2" fill="#f6fbe6" opacity="0.95"/><rect x="18.2" y="40.2" width="6.2" height="2" fill="#f6fbe6" opacity="0.95"/><rect x="26.6" y="40.2" width="3.7" height="2" fill="#f6fbe6" opacity="0.95"/><rect x="28.1" y="33.1" width="6.2" height="2" fill="#f6fbe6" opacity="0.95"/></svg></div>
<div style="position:absolute;left:649.78px;top:489.07px;width:40.68px;height:53.20px;background:#1fa336;border:1.5px solid #141414;box-sizing:border-box;border-radius:5px;overflow:hidden;box-shadow:inset 0 1px 0 rgba(255,255,255,0.10)"><div style="position:absolute;left:6.0px;top:4.40px;font-size:12.0px;line-height:15px;color:#fbfbf2;white-space:nowrap;-webkit-text-stroke:0.4px #fbfbf2">Class</div><svg style="position:absolute;left:0;top:0" width="40" height="52"><rect x="0.0" y="27.3" width="5.6" height="2" fill="#f6fbe6" opacity="0.95"/><rect x="7.4" y="33.1" width="3.1" height="2" fill="#f6fbe6" opacity="0.95"/><rect x="9.6" y="36.8" width="4.9" height="2" fill="#f6fbe6" opacity="0.95"/><rect x="16.6" y="36.8" width="3.8" height="2" fill="#f6fbe6" opacity="0.95"/><rect x="19.2" y="40.2" width="5.5" height="2" fill="#f6fbe6" opacity="0.95"/><rect x="26.6" y="40.2" width="3.4" height="2" fill="#f6fbe6" opacity="0.95"/><rect x="28.8" y="33.7" width="6.8" height="2" fill="#f6fbe6" opacity="0.95"/></svg></div>
<div style="position:absolute;left:689.46px;top:489.07px;width:40.68px;height:53.20px;background:#1fa336;border:1.5px solid #141414;box-sizing:border-box;border-radius:5px;overflow:hidden;box-shadow:inset 0 1px 0 rgba(255,255,255,0.10)"><div style="position:absolute;left:6.0px;top:4.40px;font-size:12.0px;line-height:15px;color:#fbfbf2;white-space:nowrap;-webkit-text-stroke:0.4px #fbfbf2">Class</div><svg style="position:absolute;left:0;top:0" width="40" height="52"><rect x="0.0" y="27.3" width="5.8" height="2" fill="#f6fbe6" opacity="0.95"/><rect x="6.1" y="33.1" width="3.2" height="2" fill="#f6fbe6" opacity="0.95"/><rect x="8.3" y="36.8" width="6.5" height="2" fill="#f6fbe6" opacity="0.95"/><rect x="18.2" y="40.2" width="6.2" height="2" fill="#f6fbe6" opacity="0.95"/><rect x="26.6" y="40.2" width="3.7" height="2" fill="#f6fbe6" opacity="0.95"/><rect x="28.1" y="33.1" width="6.2" height="2" fill="#f6fbe6" opacity="0.95"/></svg></div>
<div style="position:absolute;left:729.14px;top:489.07px;width:40.68px;height:53.20px;background:#1fa336;border:1.5px solid #141414;box-sizing:border-box;border-radius:5px;overflow:hidden;box-shadow:inset 0 1px 0 rgba(255,255,255,0.10)"><div style="position:absolute;left:6.0px;top:4.40px;font-size:12.0px;line-height:15px;color:#fbfbf2;white-space:nowrap;-webkit-text-stroke:0.4px #fbfbf2">Class</div><svg style="position:absolute;left:0;top:0" width="40" height="52"><rect x="0.0" y="27.3" width="5.6" height="2" fill="#f6fbe6" opacity="0.95"/><rect x="7.4" y="33.1" width="3.1" height="2" fill="#f6fbe6" opacity="0.95"/><rect x="9.6" y="36.8" width="4.9" height="2" fill="#f6fbe6" opacity="0.95"/><rect x="16.6" y="36.8" width="3.8" height="2" fill="#f6fbe6" opacity="0.95"/><rect x="19.2" y="40.2" width="5.5" height="2" fill="#f6fbe6" opacity="0.95"/><rect x="26.6" y="40.2" width="3.4" height="2" fill="#f6fbe6" opacity="0.95"/><rect x="28.8" y="33.7" width="6.8" height="2" fill="#f6fbe6" opacity="0.95"/></svg></div>
<div style="position:absolute;left:768.82px;top:489.07px;width:40.68px;height:53.20px;background:#1fa336;border:1.5px solid #141414;box-sizing:border-box;border-radius:5px;overflow:hidden;box-shadow:inset 0 1px 0 rgba(255,255,255,0.10)"><div style="position:absolute;left:6.0px;top:4.40px;font-size:12.0px;line-height:15px;color:#fbfbf2;white-space:nowrap;-webkit-text-stroke:0.4px #fbfbf2">Class</div><svg style="position:absolute;left:0;top:0" width="40" height="52"><rect x="0.0" y="27.3" width="5.8" height="2" fill="#f6fbe6" opacity="0.95"/><rect x="6.1" y="33.1" width="3.2" height="2" fill="#f6fbe6" opacity="0.95"/><rect x="8.3" y="36.8" width="6.5" height="2" fill="#f6fbe6" opacity="0.95"/><rect x="18.2" y="40.2" width="6.2" height="2" fill="#f6fbe6" opacity="0.95"/><rect x="26.6" y="40.2" width="3.7" height="2" fill="#f6fbe6" opacity="0.95"/><rect x="28.1" y="33.1" width="6.2" height="2" fill="#f6fbe6" opacity="0.95"/></svg></div>
<div style="position:absolute;left:808.50px;top:489.07px;width:40.68px;height:53.20px;background:#1fa336;border:1.5px solid #141414;box-sizing:border-box;border-radius:5px;overflow:hidden;box-shadow:inset 0 1px 0 rgba(255,255,255,0.10)"><div style="position:absolute;left:6.0px;top:4.40px;font-size:12.0px;line-height:15px;color:#fbfbf2;white-space:nowrap;-webkit-text-stroke:0.4px #fbfbf2">Class</div><svg style="position:absolute;left:0;top:0" width="40" height="52"><rect x="0.0" y="27.3" width="5.6" height="2" fill="#f6fbe6" opacity="0.95"/><rect x="7.4" y="33.1" width="3.1" height="2" fill="#f6fbe6" opacity="0.95"/><rect x="9.6" y="36.8" width="4.9" height="2" fill="#f6fbe6" opacity="0.95"/><rect x="16.6" y="36.8" width="3.8" height="2" fill="#f6fbe6" opacity="0.95"/><rect x="19.2" y="40.2" width="5.5" height="2" fill="#f6fbe6" opacity="0.95"/><rect x="26.6" y="40.2" width="3.4" height="2" fill="#f6fbe6" opacity="0.95"/><rect x="28.8" y="33.7" width="6.8" height="2" fill="#f6fbe6" opacity="0.95"/></svg></div>
<div style="position:absolute;left:848.18px;top:489.07px;width:40.68px;height:53.20px;background:#1fa336;border:1.5px solid #141414;box-sizing:border-box;border-radius:5px;overflow:hidden;box-shadow:inset 0 1px 0 rgba(255,255,255,0.10)"><div style="position:absolute;left:6.0px;top:4.40px;font-size:12.0px;line-height:15px;color:#fbfbf2;white-space:nowrap;-webkit-text-stroke:0.4px #fbfbf2">Class</div><svg style="position:absolute;left:0;top:0" width="40" height="52"><rect x="0.0" y="27.3" width="5.8" height="2" fill="#f6fbe6" opacity="0.95"/><rect x="6.1" y="33.1" width="3.2" height="2" fill="#f6fbe6" opacity="0.95"/><rect x="8.3" y="36.8" width="6.5" height="2" fill="#f6fbe6" opacity="0.95"/><rect x="18.2" y="40.2" width="6.2" height="2" fill="#f6fbe6" opacity="0.95"/><rect x="26.6" y="40.2" width="3.7" height="2" fill="#f6fbe6" opacity="0.95"/><rect x="28.1" y="33.1" width="6.2" height="2" fill="#f6fbe6" opacity="0.95"/></svg></div>
<div style="position:absolute;left:887.86px;top:489.07px;width:40.68px;height:53.20px;background:#1fa336;border:1.5px solid #141414;box-sizing:border-box;border-radius:5px;overflow:hidden;box-shadow:inset 0 1px 0 rgba(255,255,255,0.10)"><div style="position:absolute;left:6.0px;top:4.40px;font-size:12.0px;line-height:15px;color:#fbfbf2;white-space:nowrap;-webkit-text-stroke:0.4px #fbfbf2">Class</div><svg style="position:absolute;left:0;top:0" width="40" height="52"><rect x="0.0" y="27.3" width="5.6" height="2" fill="#f6fbe6" opacity="0.95"/><rect x="7.4" y="33.1" width="3.1" height="2" fill="#f6fbe6" opacity="0.95"/><rect x="9.6" y="36.8" width="4.9" height="2" fill="#f6fbe6" opacity="0.95"/><rect x="16.6" y="36.8" width="3.8" height="2" fill="#f6fbe6" opacity="0.95"/><rect x="19.2" y="40.2" width="5.5" height="2" fill="#f6fbe6" opacity="0.95"/><rect x="26.6" y="40.2" width="3.4" height="2" fill="#f6fbe6" opacity="0.95"/><rect x="28.8" y="33.7" width="6.8" height="2" fill="#f6fbe6" opacity="0.95"/></svg></div>
<div style="position:absolute;left:927.54px;top:489.07px;width:40.68px;height:53.20px;background:#1fa336;border:1.5px solid #141414;box-sizing:border-box;border-radius:5px;overflow:hidden;box-shadow:inset 0 1px 0 rgba(255,255,255,0.10)"><div style="position:absolute;left:6.0px;top:4.40px;font-size:12.0px;line-height:15px;color:#fbfbf2;white-space:nowrap;-webkit-text-stroke:0.4px #fbfbf2">Class</div><svg style="position:absolute;left:0;top:0" width="40" height="52"><rect x="0.0" y="27.3" width="5.8" height="2" fill="#f6fbe6" opacity="0.95"/><rect x="6.1" y="33.1" width="3.2" height="2" fill="#f6fbe6" opacity="0.95"/><rect x="8.3" y="36.8" width="6.5" height="2" fill="#f6fbe6" opacity="0.95"/><rect x="18.2" y="40.2" width="6.2" height="2" fill="#f6fbe6" opacity="0.95"/><rect x="26.6" y="40.2" width="3.7" height="2" fill="#f6fbe6" opacity="0.95"/><rect x="28.1" y="33.1" width="6.2" height="2" fill="#f6fbe6" opacity="0.95"/></svg></div>
<div style="position:absolute;left:1006.90px;top:489.07px;width:40.68px;height:53.20px;background:#1fa336;border:1.5px solid #141414;box-sizing:border-box;border-radius:5px;overflow:hidden;box-shadow:inset 0 1px 0 rgba(255,255,255,0.10)"><div style="position:absolute;left:6.0px;top:4.40px;font-size:12.0px;line-height:15px;color:#fbfbf2;white-space:nowrap;-webkit-text-stroke:0.4px #fbfbf2">Class</div><svg style="position:absolute;left:0;top:0" width="40" height="52"><rect x="0.0" y="27.3" width="5.6" height="2" fill="#f6fbe6" opacity="0.95"/><rect x="7.4" y="33.1" width="3.1" height="2" fill="#f6fbe6" opacity="0.95"/><rect x="9.6" y="36.8" width="4.9" height="2" fill="#f6fbe6" opacity="0.95"/><rect x="16.6" y="36.8" width="3.8" height="2" fill="#f6fbe6" opacity="0.95"/><rect x="19.2" y="40.2" width="5.5" height="2" fill="#f6fbe6" opacity="0.95"/><rect x="26.6" y="40.2" width="3.4" height="2" fill="#f6fbe6" opacity="0.95"/><rect x="28.8" y="33.7" width="6.8" height="2" fill="#f6fbe6" opacity="0.95"/></svg></div>
<div style="position:absolute;left:1046.58px;top:489.07px;width:40.68px;height:53.20px;background:#1fa336;border:1.5px solid #141414;box-sizing:border-box;border-radius:5px;overflow:hidden;box-shadow:inset 0 1px 0 rgba(255,255,255,0.10)"><div style="position:absolute;left:6.0px;top:4.40px;font-size:12.0px;line-height:15px;color:#fbfbf2;white-space:nowrap;-webkit-text-stroke:0.4px #fbfbf2">Class</div><svg style="position:absolute;left:0;top:0" width="40" height="52"><rect x="0.0" y="27.3" width="5.8" height="2" fill="#f6fbe6" opacity="0.95"/><rect x="6.1" y="33.1" width="3.2" height="2" fill="#f6fbe6" opacity="0.95"/><rect x="8.3" y="36.8" width="6.5" height="2" fill="#f6fbe6" opacity="0.95"/><rect x="18.2" y="40.2" width="6.2" height="2" fill="#f6fbe6" opacity="0.95"/><rect x="26.6" y="40.2" width="3.7" height="2" fill="#f6fbe6" opacity="0.95"/><rect x="28.1" y="33.1" width="6.2" height="2" fill="#f6fbe6" opacity="0.95"/></svg></div>
<div style="position:absolute;left:1086.26px;top:489.07px;width:40.68px;height:53.20px;background:#1fa336;border:1.5px solid #141414;box-sizing:border-box;border-radius:5px;overflow:hidden;box-shadow:inset 0 1px 0 rgba(255,255,255,0.10)"><div style="position:absolute;left:6.0px;top:4.40px;font-size:12.0px;line-height:15px;color:#fbfbf2;white-space:nowrap;-webkit-text-stroke:0.4px #fbfbf2">Class</div><svg style="position:absolute;left:0;top:0" width="40" height="52"><rect x="0.0" y="27.3" width="5.6" height="2" fill="#f6fbe6" opacity="0.95"/><rect x="7.4" y="33.1" width="3.1" height="2" fill="#f6fbe6" opacity="0.95"/><rect x="9.6" y="36.8" width="4.9" height="2" fill="#f6fbe6" opacity="0.95"/><rect x="16.6" y="36.8" width="3.8" height="2" fill="#f6fbe6" opacity="0.95"/><rect x="19.2" y="40.2" width="5.5" height="2" fill="#f6fbe6" opacity="0.95"/><rect x="26.6" y="40.2" width="3.4" height="2" fill="#f6fbe6" opacity="0.95"/><rect x="28.8" y="33.7" width="6.8" height="2" fill="#f6fbe6" opacity="0.95"/></svg></div>
<div style="position:absolute;left:1125.94px;top:489.07px;width:40.68px;height:53.20px;background:#1fa336;border:1.5px solid #141414;box-sizing:border-box;border-radius:5px;overflow:hidden;box-shadow:inset 0 1px 0 rgba(255,255,255,0.10)"><div style="position:absolute;left:6.0px;top:4.40px;font-size:12.0px;line-height:15px;color:#fbfbf2;white-space:nowrap;-webkit-text-stroke:0.4px #fbfbf2">Class</div><svg style="position:absolute;left:0;top:0" width="40" height="52"><rect x="0.0" y="27.3" width="5.8" height="2" fill="#f6fbe6" opacity="0.95"/><rect x="6.1" y="33.1" width="3.2" height="2" fill="#f6fbe6" opacity="0.95"/><rect x="8.3" y="36.8" width="6.5" height="2" fill="#f6fbe6" opacity="0.95"/><rect x="18.2" y="40.2" width="6.2" height="2" fill="#f6fbe6" opacity="0.95"/><rect x="26.6" y="40.2" width="3.7" height="2" fill="#f6fbe6" opacity="0.95"/><rect x="28.1" y="33.1" width="6.2" height="2" fill="#f6fbe6" opacity="0.95"/></svg></div>
<div style="position:absolute;left:1165.62px;top:489.07px;width:40.68px;height:53.20px;background:#1fa336;border:1.5px solid #141414;box-sizing:border-box;border-radius:5px;overflow:hidden;box-shadow:inset 0 1px 0 rgba(255,255,255,0.10)"><div style="position:absolute;left:6.0px;top:4.40px;font-size:12.0px;line-height:15px;color:#fbfbf2;white-space:nowrap;-webkit-text-stroke:0.4px #fbfbf2">Class</div><svg style="position:absolute;left:0;top:0" width="40" height="52"><rect x="0.0" y="27.3" width="5.6" height="2" fill="#f6fbe6" opacity="0.95"/><rect x="7.4" y="33.1" width="3.1" height="2" fill="#f6fbe6" opacity="0.95"/><rect x="9.6" y="36.8" width="4.9" height="2" fill="#f6fbe6" opacity="0.95"/><rect x="16.6" y="36.8" width="3.8" height="2" fill="#f6fbe6" opacity="0.95"/><rect x="19.2" y="40.2" width="5.5" height="2" fill="#f6fbe6" opacity="0.95"/><rect x="26.6" y="40.2" width="3.4" height="2" fill="#f6fbe6" opacity="0.95"/><rect x="28.8" y="33.7" width="6.8" height="2" fill="#f6fbe6" opacity="0.95"/></svg></div>
<div style="position:absolute;left:1205.30px;top:489.07px;width:40.68px;height:53.20px;background:#1fa336;border:1.5px solid #141414;box-sizing:border-box;border-radius:5px;overflow:hidden;box-shadow:inset 0 1px 0 rgba(255,255,255,0.10)"><div style="position:absolute;left:6.0px;top:4.40px;font-size:12.0px;line-height:15px;color:#fbfbf2;white-space:nowrap;-webkit-text-stroke:0.4px #fbfbf2">Class</div><svg style="position:absolute;left:0;top:0" width="40" height="52"><rect x="0.0" y="27.3" width="5.8" height="2" fill="#f6fbe6" opacity="0.95"/><rect x="6.1" y="33.1" width="3.2" height="2" fill="#f6fbe6" opacity="0.95"/><rect x="8.3" y="36.8" width="6.5" height="2" fill="#f6fbe6" opacity="0.95"/><rect x="18.2" y="40.2" width="6.2" height="2" fill="#f6fbe6" opacity="0.95"/><rect x="26.6" y="40.2" width="3.7" height="2" fill="#f6fbe6" opacity="0.95"/><rect x="28.1" y="33.1" width="6.2" height="2" fill="#f6fbe6" opacity="0.95"/></svg></div>
<div style="position:absolute;left:1244.98px;top:489.07px;width:40.68px;height:53.20px;background:#1fa336;border:1.5px solid #141414;box-sizing:border-box;border-radius:5px;overflow:hidden;box-shadow:inset 0 1px 0 rgba(255,255,255,0.10)"><div style="position:absolute;left:6.0px;top:4.40px;font-size:12.0px;line-height:15px;color:#fbfbf2;white-space:nowrap;-webkit-text-stroke:0.4px #fbfbf2">Class</div><svg style="position:absolute;left:0;top:0" width="40" height="52"><rect x="0.0" y="27.3" width="5.6" height="2" fill="#f6fbe6" opacity="0.95"/><rect x="7.4" y="33.1" width="3.1" height="2" fill="#f6fbe6" opacity="0.95"/><rect x="9.6" y="36.8" width="4.9" height="2" fill="#f6fbe6" opacity="0.95"/><rect x="16.6" y="36.8" width="3.8" height="2" fill="#f6fbe6" opacity="0.95"/><rect x="19.2" y="40.2" width="5.5" height="2" fill="#f6fbe6" opacity="0.95"/><rect x="26.6" y="40.2" width="3.4" height="2" fill="#f6fbe6" opacity="0.95"/><rect x="28.8" y="33.7" width="6.8" height="2" fill="#f6fbe6" opacity="0.95"/></svg></div>
<div style="position:absolute;left:1284.66px;top:489.07px;width:40.68px;height:53.20px;background:#1fa336;border:1.5px solid #141414;box-sizing:border-box;border-radius:5px;overflow:hidden;box-shadow:inset 0 1px 0 rgba(255,255,255,0.10)"><div style="position:absolute;left:6.0px;top:4.40px;font-size:12.0px;line-height:15px;color:#fbfbf2;white-space:nowrap;-webkit-text-stroke:0.4px #fbfbf2">Class</div><svg style="position:absolute;left:0;top:0" width="40" height="52"><rect x="0.0" y="27.3" width="5.8" height="2" fill="#f6fbe6" opacity="0.95"/><rect x="6.1" y="33.1" width="3.2" height="2" fill="#f6fbe6" opacity="0.95"/><rect x="8.3" y="36.8" width="6.5" height="2" fill="#f6fbe6" opacity="0.95"/><rect x="18.2" y="40.2" width="6.2" height="2" fill="#f6fbe6" opacity="0.95"/><rect x="26.6" y="40.2" width="3.7" height="2" fill="#f6fbe6" opacity="0.95"/><rect x="28.1" y="33.1" width="6.2" height="2" fill="#f6fbe6" opacity="0.95"/></svg></div>
<div style="position:absolute;left:649.78px;top:542.39px;width:40.68px;height:53.20px;background:#4fa125;border:1.5px solid #141414;box-sizing:border-box;border-radius:5px;overflow:hidden;box-shadow:inset 0 1px 0 rgba(255,255,255,0.10)"><div style="position:absolute;left:6.0px;top:4.40px;font-size:12.0px;line-height:15px;color:#fbfbf2;white-space:nowrap;-webkit-text-stroke:0.4px #fbfbf2">Class</div><svg style="position:absolute;left:0;top:0" width="40" height="52"><rect x="0.0" y="27.3" width="5.6" height="2" fill="#f6fbe6" opacity="0.95"/><rect x="7.4" y="33.1" width="3.1" height="2" fill="#f6fbe6" opacity="0.95"/><rect x="9.6" y="36.8" width="4.9" height="2" fill="#f6fbe6" opacity="0.95"/><rect x="16.6" y="36.8" width="3.8" height="2" fill="#f6fbe6" opacity="0.95"/><rect x="19.2" y="40.2" width="5.5" height="2" fill="#f6fbe6" opacity="0.95"/><rect x="26.6" y="40.2" width="3.4" height="2" fill="#f6fbe6" opacity="0.95"/><rect x="28.8" y="33.7" width="6.8" height="2" fill="#f6fbe6" opacity="0.95"/></svg></div>
<div style="position:absolute;left:689.46px;top:542.39px;width:40.68px;height:53.20px;background:#4fa125;border:1.5px solid #141414;box-sizing:border-box;border-radius:5px;overflow:hidden;box-shadow:inset 0 1px 0 rgba(255,255,255,0.10)"><div style="position:absolute;left:6.0px;top:4.40px;font-size:12.0px;line-height:15px;color:#fbfbf2;white-space:nowrap;-webkit-text-stroke:0.4px #fbfbf2">Class</div><svg style="position:absolute;left:0;top:0" width="40" height="52"><rect x="0.0" y="27.3" width="5.8" height="2" fill="#f6fbe6" opacity="0.95"/><rect x="6.1" y="33.1" width="3.2" height="2" fill="#f6fbe6" opacity="0.95"/><rect x="8.3" y="36.8" width="6.5" height="2" fill="#f6fbe6" opacity="0.95"/><rect x="18.2" y="40.2" width="6.2" height="2" fill="#f6fbe6" opacity="0.95"/><rect x="26.6" y="40.2" width="3.7" height="2" fill="#f6fbe6" opacity="0.95"/><rect x="28.1" y="33.1" width="6.2" height="2" fill="#f6fbe6" opacity="0.95"/></svg></div>
<div style="position:absolute;left:729.14px;top:542.39px;width:40.68px;height:53.20px;background:#4fa125;border:1.5px solid #141414;box-sizing:border-box;border-radius:5px;overflow:hidden;box-shadow:inset 0 1px 0 rgba(255,255,255,0.10)"><div style="position:absolute;left:6.0px;top:4.40px;font-size:12.0px;line-height:15px;color:#fbfbf2;white-space:nowrap;-webkit-text-stroke:0.4px #fbfbf2">Class</div><svg style="position:absolute;left:0;top:0" width="40" height="52"><rect x="0.0" y="27.3" width="5.6" height="2" fill="#f6fbe6" opacity="0.95"/><rect x="7.4" y="33.1" width="3.1" height="2" fill="#f6fbe6" opacity="0.95"/><rect x="9.6" y="36.8" width="4.9" height="2" fill="#f6fbe6" opacity="0.95"/><rect x="16.6" y="36.8" width="3.8" height="2" fill="#f6fbe6" opacity="0.95"/><rect x="19.2" y="40.2" width="5.5" height="2" fill="#f6fbe6" opacity="0.95"/><rect x="26.6" y="40.2" width="3.4" height="2" fill="#f6fbe6" opacity="0.95"/><rect x="28.8" y="33.7" width="6.8" height="2" fill="#f6fbe6" opacity="0.95"/></svg></div>
<div style="position:absolute;left:768.82px;top:542.39px;width:40.68px;height:53.20px;background:#4fa125;border:1.5px solid #141414;box-sizing:border-box;border-radius:5px;overflow:hidden;box-shadow:inset 0 1px 0 rgba(255,255,255,0.10)"><div style="position:absolute;left:6.0px;top:4.40px;font-size:12.0px;line-height:15px;color:#fbfbf2;white-space:nowrap;-webkit-text-stroke:0.4px #fbfbf2">Class</div><svg style="position:absolute;left:0;top:0" width="40" height="52"><rect x="0.0" y="27.3" width="5.8" height="2" fill="#f6fbe6" opacity="0.95"/><rect x="6.1" y="33.1" width="3.2" height="2" fill="#f6fbe6" opacity="0.95"/><rect x="8.3" y="36.8" width="6.5" height="2" fill="#f6fbe6" opacity="0.95"/><rect x="18.2" y="40.2" width="6.2" height="2" fill="#f6fbe6" opacity="0.95"/><rect x="26.6" y="40.2" width="3.7" height="2" fill="#f6fbe6" opacity="0.95"/><rect x="28.1" y="33.1" width="6.2" height="2" fill="#f6fbe6" opacity="0.95"/></svg></div>
<div style="position:absolute;left:808.50px;top:542.39px;width:40.68px;height:53.20px;background:#4fa125;border:1.5px solid #141414;box-sizing:border-box;border-radius:5px;overflow:hidden;box-shadow:inset 0 1px 0 rgba(255,255,255,0.10)"><div style="position:absolute;left:6.0px;top:4.40px;font-size:12.0px;line-height:15px;color:#fbfbf2;white-space:nowrap;-webkit-text-stroke:0.4px #fbfbf2">Class</div><svg style="position:absolute;left:0;top:0" width="40" height="52"><rect x="0.0" y="27.3" width="5.6" height="2" fill="#f6fbe6" opacity="0.95"/><rect x="7.4" y="33.1" width="3.1" height="2" fill="#f6fbe6" opacity="0.95"/><rect x="9.6" y="36.8" width="4.9" height="2" fill="#f6fbe6" opacity="0.95"/><rect x="16.6" y="36.8" width="3.8" height="2" fill="#f6fbe6" opacity="0.95"/><rect x="19.2" y="40.2" width="5.5" height="2" fill="#f6fbe6" opacity="0.95"/><rect x="26.6" y="40.2" width="3.4" height="2" fill="#f6fbe6" opacity="0.95"/><rect x="28.8" y="33.7" width="6.8" height="2" fill="#f6fbe6" opacity="0.95"/></svg></div>
<div style="position:absolute;left:848.18px;top:542.39px;width:40.68px;height:53.20px;background:#4fa125;border:1.5px solid #141414;box-sizing:border-box;border-radius:5px;overflow:hidden;box-shadow:inset 0 1px 0 rgba(255,255,255,0.10)"><div style="position:absolute;left:6.0px;top:4.40px;font-size:12.0px;line-height:15px;color:#fbfbf2;white-space:nowrap;-webkit-text-stroke:0.4px #fbfbf2">Class</div><svg style="position:absolute;left:0;top:0" width="40" height="52"><rect x="0.0" y="27.3" width="5.8" height="2" fill="#f6fbe6" opacity="0.95"/><rect x="6.1" y="33.1" width="3.2" height="2" fill="#f6fbe6" opacity="0.95"/><rect x="8.3" y="36.8" width="6.5" height="2" fill="#f6fbe6" opacity="0.95"/><rect x="18.2" y="40.2" width="6.2" height="2" fill="#f6fbe6" opacity="0.95"/><rect x="26.6" y="40.2" width="3.7" height="2" fill="#f6fbe6" opacity="0.95"/><rect x="28.1" y="33.1" width="6.2" height="2" fill="#f6fbe6" opacity="0.95"/></svg></div>
<div style="position:absolute;left:887.86px;top:542.39px;width:40.68px;height:53.20px;background:#4fa125;border:1.5px solid #141414;box-sizing:border-box;border-radius:5px;overflow:hidden;box-shadow:inset 0 1px 0 rgba(255,255,255,0.10)"><div style="position:absolute;left:6.0px;top:4.40px;font-size:12.0px;line-height:15px;color:#fbfbf2;white-space:nowrap;-webkit-text-stroke:0.4px #fbfbf2">Class</div><svg style="position:absolute;left:0;top:0" width="40" height="52"><rect x="0.0" y="27.3" width="5.6" height="2" fill="#f6fbe6" opacity="0.95"/><rect x="7.4" y="33.1" width="3.1" height="2" fill="#f6fbe6" opacity="0.95"/><rect x="9.6" y="36.8" width="4.9" height="2" fill="#f6fbe6" opacity="0.95"/><rect x="16.6" y="36.8" width="3.8" height="2" fill="#f6fbe6" opacity="0.95"/><rect x="19.2" y="40.2" width="5.5" height="2" fill="#f6fbe6" opacity="0.95"/><rect x="26.6" y="40.2" width="3.4" height="2" fill="#f6fbe6" opacity="0.95"/><rect x="28.8" y="33.7" width="6.8" height="2" fill="#f6fbe6" opacity="0.95"/></svg></div>
<div style="position:absolute;left:927.54px;top:542.39px;width:40.68px;height:53.20px;background:#4fa125;border:1.5px solid #141414;box-sizing:border-box;border-radius:5px;overflow:hidden;box-shadow:inset 0 1px 0 rgba(255,255,255,0.10)"><div style="position:absolute;left:6.0px;top:4.40px;font-size:12.0px;line-height:15px;color:#fbfbf2;white-space:nowrap;-webkit-text-stroke:0.4px #fbfbf2">Class</div><svg style="position:absolute;left:0;top:0" width="40" height="52"><rect x="0.0" y="27.3" width="5.8" height="2" fill="#f6fbe6" opacity="0.95"/><rect x="6.1" y="33.1" width="3.2" height="2" fill="#f6fbe6" opacity="0.95"/><rect x="8.3" y="36.8" width="6.5" height="2" fill="#f6fbe6" opacity="0.95"/><rect x="18.2" y="40.2" width="6.2" height="2" fill="#f6fbe6" opacity="0.95"/><rect x="26.6" y="40.2" width="3.7" height="2" fill="#f6fbe6" opacity="0.95"/><rect x="28.1" y="33.1" width="6.2" height="2" fill="#f6fbe6" opacity="0.95"/></svg></div>
<div style="position:absolute;left:1006.90px;top:542.39px;width:40.68px;height:53.20px;background:#4fa125;border:1.5px solid #141414;box-sizing:border-box;border-radius:5px;overflow:hidden;box-shadow:inset 0 1px 0 rgba(255,255,255,0.10)"><div style="position:absolute;left:6.0px;top:4.40px;font-size:12.0px;line-height:15px;color:#fbfbf2;white-space:nowrap;-webkit-text-stroke:0.4px #fbfbf2">Class</div><svg style="position:absolute;left:0;top:0" width="40" height="52"><rect x="0.0" y="27.3" width="5.6" height="2" fill="#f6fbe6" opacity="0.95"/><rect x="7.4" y="33.1" width="3.1" height="2" fill="#f6fbe6" opacity="0.95"/><rect x="9.6" y="36.8" width="4.9" height="2" fill="#f6fbe6" opacity="0.95"/><rect x="16.6" y="36.8" width="3.8" height="2" fill="#f6fbe6" opacity="0.95"/><rect x="19.2" y="40.2" width="5.5" height="2" fill="#f6fbe6" opacity="0.95"/><rect x="26.6" y="40.2" width="3.4" height="2" fill="#f6fbe6" opacity="0.95"/><rect x="28.8" y="33.7" width="6.8" height="2" fill="#f6fbe6" opacity="0.95"/></svg></div>
<div style="position:absolute;left:1046.58px;top:542.39px;width:40.68px;height:53.20px;background:#4fa125;border:1.5px solid #141414;box-sizing:border-box;border-radius:5px;overflow:hidden;box-shadow:inset 0 1px 0 rgba(255,255,255,0.10)"><div style="position:absolute;left:6.0px;top:4.40px;font-size:12.0px;line-height:15px;color:#fbfbf2;white-space:nowrap;-webkit-text-stroke:0.4px #fbfbf2">Class</div><svg style="position:absolute;left:0;top:0" width="40" height="52"><rect x="0.0" y="27.3" width="5.8" height="2" fill="#f6fbe6" opacity="0.95"/><rect x="6.1" y="33.1" width="3.2" height="2" fill="#f6fbe6" opacity="0.95"/><rect x="8.3" y="36.8" width="6.5" height="2" fill="#f6fbe6" opacity="0.95"/><rect x="18.2" y="40.2" width="6.2" height="2" fill="#f6fbe6" opacity="0.95"/><rect x="26.6" y="40.2" width="3.7" height="2" fill="#f6fbe6" opacity="0.95"/><rect x="28.1" y="33.1" width="6.2" height="2" fill="#f6fbe6" opacity="0.95"/></svg></div>
<div style="position:absolute;left:1086.26px;top:542.39px;width:40.68px;height:53.20px;background:#4fa125;border:1.5px solid #141414;box-sizing:border-box;border-radius:5px;overflow:hidden;box-shadow:inset 0 1px 0 rgba(255,255,255,0.10)"><div style="position:absolute;left:6.0px;top:4.40px;font-size:12.0px;line-height:15px;color:#fbfbf2;white-space:nowrap;-webkit-text-stroke:0.4px #fbfbf2">Class</div><svg style="position:absolute;left:0;top:0" width="40" height="52"><rect x="0.0" y="27.3" width="5.6" height="2" fill="#f6fbe6" opacity="0.95"/><rect x="7.4" y="33.1" width="3.1" height="2" fill="#f6fbe6" opacity="0.95"/><rect x="9.6" y="36.8" width="4.9" height="2" fill="#f6fbe6" opacity="0.95"/><rect x="16.6" y="36.8" width="3.8" height="2" fill="#f6fbe6" opacity="0.95"/><rect x="19.2" y="40.2" width="5.5" height="2" fill="#f6fbe6" opacity="0.95"/><rect x="26.6" y="40.2" width="3.4" height="2" fill="#f6fbe6" opacity="0.95"/><rect x="28.8" y="33.7" width="6.8" height="2" fill="#f6fbe6" opacity="0.95"/></svg></div>
<div style="position:absolute;left:1125.94px;top:542.39px;width:40.68px;height:53.20px;background:#4fa125;border:1.5px solid #141414;box-sizing:border-box;border-radius:5px;overflow:hidden;box-shadow:inset 0 1px 0 rgba(255,255,255,0.10)"><div style="position:absolute;left:6.0px;top:4.40px;font-size:12.0px;line-height:15px;color:#fbfbf2;white-space:nowrap;-webkit-text-stroke:0.4px #fbfbf2">Class</div><svg style="position:absolute;left:0;top:0" width="40" height="52"><rect x="0.0" y="27.3" width="5.8" height="2" fill="#f6fbe6" opacity="0.95"/><rect x="6.1" y="33.1" width="3.2" height="2" fill="#f6fbe6" opacity="0.95"/><rect x="8.3" y="36.8" width="6.5" height="2" fill="#f6fbe6" opacity="0.95"/><rect x="18.2" y="40.2" width="6.2" height="2" fill="#f6fbe6" opacity="0.95"/><rect x="26.6" y="40.2" width="3.7" height="2" fill="#f6fbe6" opacity="0.95"/><rect x="28.1" y="33.1" width="6.2" height="2" fill="#f6fbe6" opacity="0.95"/></svg></div>
<div style="position:absolute;left:1165.62px;top:542.39px;width:40.68px;height:53.20px;background:#4fa125;border:1.5px solid #141414;box-sizing:border-box;border-radius:5px;overflow:hidden;box-shadow:inset 0 1px 0 rgba(255,255,255,0.10)"><div style="position:absolute;left:6.0px;top:4.40px;font-size:12.0px;line-height:15px;color:#fbfbf2;white-space:nowrap;-webkit-text-stroke:0.4px #fbfbf2">Class</div><svg style="position:absolute;left:0;top:0" width="40" height="52"><rect x="0.0" y="27.3" width="5.6" height="2" fill="#f6fbe6" opacity="0.95"/><rect x="7.4" y="33.1" width="3.1" height="2" fill="#f6fbe6" opacity="0.95"/><rect x="9.6" y="36.8" width="4.9" height="2" fill="#f6fbe6" opacity="0.95"/><rect x="16.6" y="36.8" width="3.8" height="2" fill="#f6fbe6" opacity="0.95"/><rect x="19.2" y="40.2" width="5.5" height="2" fill="#f6fbe6" opacity="0.95"/><rect x="26.6" y="40.2" width="3.4" height="2" fill="#f6fbe6" opacity="0.95"/><rect x="28.8" y="33.7" width="6.8" height="2" fill="#f6fbe6" opacity="0.95"/></svg></div>
<div style="position:absolute;left:1205.30px;top:542.39px;width:40.68px;height:53.20px;background:#4fa125;border:1.5px solid #141414;box-sizing:border-box;border-radius:5px;overflow:hidden;box-shadow:inset 0 1px 0 rgba(255,255,255,0.10)"><div style="position:absolute;left:6.0px;top:4.40px;font-size:12.0px;line-height:15px;color:#fbfbf2;white-space:nowrap;-webkit-text-stroke:0.4px #fbfbf2">Class</div><svg style="position:absolute;left:0;top:0" width="40" height="52"><rect x="0.0" y="27.3" width="5.8" height="2" fill="#f6fbe6" opacity="0.95"/><rect x="6.1" y="33.1" width="3.2" height="2" fill="#f6fbe6" opacity="0.95"/><rect x="8.3" y="36.8" width="6.5" height="2" fill="#f6fbe6" opacity="0.95"/><rect x="18.2" y="40.2" width="6.2" height="2" fill="#f6fbe6" opacity="0.95"/><rect x="26.6" y="40.2" width="3.7" height="2" fill="#f6fbe6" opacity="0.95"/><rect x="28.1" y="33.1" width="6.2" height="2" fill="#f6fbe6" opacity="0.95"/></svg></div>
<div style="position:absolute;left:1244.98px;top:542.39px;width:40.68px;height:53.20px;background:#4fa125;border:1.5px solid #141414;box-sizing:border-box;border-radius:5px;overflow:hidden;box-shadow:inset 0 1px 0 rgba(255,255,255,0.10)"><div style="position:absolute;left:6.0px;top:4.40px;font-size:12.0px;line-height:15px;color:#fbfbf2;white-space:nowrap;-webkit-text-stroke:0.4px #fbfbf2">Class</div><svg style="position:absolute;left:0;top:0" width="40" height="52"><rect x="0.0" y="27.3" width="5.6" height="2" fill="#f6fbe6" opacity="0.95"/><rect x="7.4" y="33.1" width="3.1" height="2" fill="#f6fbe6" opacity="0.95"/><rect x="9.6" y="36.8" width="4.9" height="2" fill="#f6fbe6" opacity="0.95"/><rect x="16.6" y="36.8" width="3.8" height="2" fill="#f6fbe6" opacity="0.95"/><rect x="19.2" y="40.2" width="5.5" height="2" fill="#f6fbe6" opacity="0.95"/><rect x="26.6" y="40.2" width="3.4" height="2" fill="#f6fbe6" opacity="0.95"/><rect x="28.8" y="33.7" width="6.8" height="2" fill="#f6fbe6" opacity="0.95"/></svg></div>
<div style="position:absolute;left:1284.66px;top:542.39px;width:40.68px;height:53.20px;background:#4fa125;border:1.5px solid #141414;box-sizing:border-box;border-radius:5px;overflow:hidden;box-shadow:inset 0 1px 0 rgba(255,255,255,0.10)"><div style="position:absolute;left:6.0px;top:4.40px;font-size:12.0px;line-height:15px;color:#fbfbf2;white-space:nowrap;-webkit-text-stroke:0.4px #fbfbf2">Class</div><svg style="position:absolute;left:0;top:0" width="40" height="52"><rect x="0.0" y="27.3" width="5.8" height="2" fill="#f6fbe6" opacity="0.95"/><rect x="6.1" y="33.1" width="3.2" height="2" fill="#f6fbe6" opacity="0.95"/><rect x="8.3" y="36.8" width="6.5" height="2" fill="#f6fbe6" opacity="0.95"/><rect x="18.2" y="40.2" width="6.2" height="2" fill="#f6fbe6" opacity="0.95"/><rect x="26.6" y="40.2" width="3.7" height="2" fill="#f6fbe6" opacity="0.95"/><rect x="28.1" y="33.1" width="6.2" height="2" fill="#f6fbe6" opacity="0.95"/></svg></div>
<div style="position:absolute;left:649.78px;top:595.71px;width:40.68px;height:53.20px;background:#6da51f;border:1.5px solid #141414;box-sizing:border-box;border-radius:5px;overflow:hidden;box-shadow:inset 0 1px 0 rgba(255,255,255,0.10)"><div style="position:absolute;left:6.0px;top:4.40px;font-size:12.0px;line-height:15px;color:#fbfbf2;white-space:nowrap;-webkit-text-stroke:0.4px #fbfbf2">Class</div><svg style="position:absolute;left:0;top:0" width="40" height="52"><rect x="0.0" y="27.3" width="5.6" height="2" fill="#f6fbe6" opacity="0.95"/><rect x="7.4" y="33.1" width="3.1" height="2" fill="#f6fbe6" opacity="0.95"/><rect x="9.6" y="36.8" width="4.9" height="2" fill="#f6fbe6" opacity="0.95"/><rect x="16.6" y="36.8" width="3.8" height="2" fill="#f6fbe6" opacity="0.95"/><rect x="19.2" y="40.2" width="5.5" height="2" fill="#f6fbe6" opacity="0.95"/><rect x="26.6" y="40.2" width="3.4" height="2" fill="#f6fbe6" opacity="0.95"/><rect x="28.8" y="33.7" width="6.8" height="2" fill="#f6fbe6" opacity="0.95"/></svg></div>
<div style="position:absolute;left:689.46px;top:595.71px;width:40.68px;height:53.20px;background:#6da51f;border:1.5px solid #141414;box-sizing:border-box;border-radius:5px;overflow:hidden;box-shadow:inset 0 1px 0 rgba(255,255,255,0.10)"><div style="position:absolute;left:6.0px;top:4.40px;font-size:12.0px;line-height:15px;color:#fbfbf2;white-space:nowrap;-webkit-text-stroke:0.4px #fbfbf2">Class</div><svg style="position:absolute;left:0;top:0" width="40" height="52"><rect x="0.0" y="27.3" width="5.8" height="2" fill="#f6fbe6" opacity="0.95"/><rect x="6.1" y="33.1" width="3.2" height="2" fill="#f6fbe6" opacity="0.95"/><rect x="8.3" y="36.8" width="6.5" height="2" fill="#f6fbe6" opacity="0.95"/><rect x="18.2" y="40.2" width="6.2" height="2" fill="#f6fbe6" opacity="0.95"/><rect x="26.6" y="40.2" width="3.7" height="2" fill="#f6fbe6" opacity="0.95"/><rect x="28.1" y="33.1" width="6.2" height="2" fill="#f6fbe6" opacity="0.95"/></svg></div>
<div style="position:absolute;left:729.14px;top:595.71px;width:40.68px;height:53.20px;background:#6da51f;border:1.5px solid #141414;box-sizing:border-box;border-radius:5px;overflow:hidden;box-shadow:inset 0 1px 0 rgba(255,255,255,0.10)"><div style="position:absolute;left:6.0px;top:4.40px;font-size:12.0px;line-height:15px;color:#fbfbf2;white-space:nowrap;-webkit-text-stroke:0.4px #fbfbf2">Class</div><svg style="position:absolute;left:0;top:0" width="40" height="52"><rect x="0.0" y="27.3" width="5.6" height="2" fill="#f6fbe6" opacity="0.95"/><rect x="7.4" y="33.1" width="3.1" height="2" fill="#f6fbe6" opacity="0.95"/><rect x="9.6" y="36.8" width="4.9" height="2" fill="#f6fbe6" opacity="0.95"/><rect x="16.6" y="36.8" width="3.8" height="2" fill="#f6fbe6" opacity="0.95"/><rect x="19.2" y="40.2" width="5.5" height="2" fill="#f6fbe6" opacity="0.95"/><rect x="26.6" y="40.2" width="3.4" height="2" fill="#f6fbe6" opacity="0.95"/><rect x="28.8" y="33.7" width="6.8" height="2" fill="#f6fbe6" opacity="0.95"/></svg></div>
<div style="position:absolute;left:768.82px;top:595.71px;width:40.68px;height:53.20px;background:#6da51f;border:1.5px solid #141414;box-sizing:border-box;border-radius:5px;overflow:hidden;box-shadow:inset 0 1px 0 rgba(255,255,255,0.10)"><div style="position:absolute;left:6.0px;top:4.40px;font-size:12.0px;line-height:15px;color:#fbfbf2;white-space:nowrap;-webkit-text-stroke:0.4px #fbfbf2">Class</div><svg style="position:absolute;left:0;top:0" width="40" height="52"><rect x="0.0" y="27.3" width="5.8" height="2" fill="#f6fbe6" opacity="0.95"/><rect x="6.1" y="33.1" width="3.2" height="2" fill="#f6fbe6" opacity="0.95"/><rect x="8.3" y="36.8" width="6.5" height="2" fill="#f6fbe6" opacity="0.95"/><rect x="18.2" y="40.2" width="6.2" height="2" fill="#f6fbe6" opacity="0.95"/><rect x="26.6" y="40.2" width="3.7" height="2" fill="#f6fbe6" opacity="0.95"/><rect x="28.1" y="33.1" width="6.2" height="2" fill="#f6fbe6" opacity="0.95"/></svg></div>
<div style="position:absolute;left:808.50px;top:595.71px;width:40.68px;height:53.20px;background:#6da51f;border:1.5px solid #141414;box-sizing:border-box;border-radius:5px;overflow:hidden;box-shadow:inset 0 1px 0 rgba(255,255,255,0.10)"><div style="position:absolute;left:6.0px;top:4.40px;font-size:12.0px;line-height:15px;color:#fbfbf2;white-space:nowrap;-webkit-text-stroke:0.4px #fbfbf2">Class</div><svg style="position:absolute;left:0;top:0" width="40" height="52"><rect x="0.0" y="27.3" width="5.6" height="2" fill="#f6fbe6" opacity="0.95"/><rect x="7.4" y="33.1" width="3.1" height="2" fill="#f6fbe6" opacity="0.95"/><rect x="9.6" y="36.8" width="4.9" height="2" fill="#f6fbe6" opacity="0.95"/><rect x="16.6" y="36.8" width="3.8" height="2" fill="#f6fbe6" opacity="0.95"/><rect x="19.2" y="40.2" width="5.5" height="2" fill="#f6fbe6" opacity="0.95"/><rect x="26.6" y="40.2" width="3.4" height="2" fill="#f6fbe6" opacity="0.95"/><rect x="28.8" y="33.7" width="6.8" height="2" fill="#f6fbe6" opacity="0.95"/></svg></div>
<div style="position:absolute;left:848.18px;top:595.71px;width:40.68px;height:53.20px;background:#6da51f;border:1.5px solid #141414;box-sizing:border-box;border-radius:5px;overflow:hidden;box-shadow:inset 0 1px 0 rgba(255,255,255,0.10)"><div style="position:absolute;left:6.0px;top:4.40px;font-size:12.0px;line-height:15px;color:#fbfbf2;white-space:nowrap;-webkit-text-stroke:0.4px #fbfbf2">Class</div><svg style="position:absolute;left:0;top:0" width="40" height="52"><rect x="0.0" y="27.3" width="5.8" height="2" fill="#f6fbe6" opacity="0.95"/><rect x="6.1" y="33.1" width="3.2" height="2" fill="#f6fbe6" opacity="0.95"/><rect x="8.3" y="36.8" width="6.5" height="2" fill="#f6fbe6" opacity="0.95"/><rect x="18.2" y="40.2" width="6.2" height="2" fill="#f6fbe6" opacity="0.95"/><rect x="26.6" y="40.2" width="3.7" height="2" fill="#f6fbe6" opacity="0.95"/><rect x="28.1" y="33.1" width="6.2" height="2" fill="#f6fbe6" opacity="0.95"/></svg></div>
<div style="position:absolute;left:887.86px;top:595.71px;width:40.68px;height:53.20px;background:#6da51f;border:1.5px solid #141414;box-sizing:border-box;border-radius:5px;overflow:hidden;box-shadow:inset 0 1px 0 rgba(255,255,255,0.10)"><div style="position:absolute;left:6.0px;top:4.40px;font-size:12.0px;line-height:15px;color:#fbfbf2;white-space:nowrap;-webkit-text-stroke:0.4px #fbfbf2">Class</div><svg style="position:absolute;left:0;top:0" width="40" height="52"><rect x="0.0" y="27.3" width="5.6" height="2" fill="#f6fbe6" opacity="0.95"/><rect x="7.4" y="33.1" width="3.1" height="2" fill="#f6fbe6" opacity="0.95"/><rect x="9.6" y="36.8" width="4.9" height="2" fill="#f6fbe6" opacity="0.95"/><rect x="16.6" y="36.8" width="3.8" height="2" fill="#f6fbe6" opacity="0.95"/><rect x="19.2" y="40.2" width="5.5" height="2" fill="#f6fbe6" opacity="0.95"/><rect x="26.6" y="40.2" width="3.4" height="2" fill="#f6fbe6" opacity="0.95"/><rect x="28.8" y="33.7" width="6.8" height="2" fill="#f6fbe6" opacity="0.95"/></svg></div>
<div style="position:absolute;left:927.54px;top:595.71px;width:40.68px;height:53.20px;background:#6da51f;border:1.5px solid #141414;box-sizing:border-box;border-radius:5px;overflow:hidden;box-shadow:inset 0 1px 0 rgba(255,255,255,0.10)"><div style="position:absolute;left:6.0px;top:4.40px;font-size:12.0px;line-height:15px;color:#fbfbf2;white-space:nowrap;-webkit-text-stroke:0.4px #fbfbf2">Class</div><svg style="position:absolute;left:0;top:0" width="40" height="52"><rect x="0.0" y="27.3" width="5.8" height="2" fill="#f6fbe6" opacity="0.95"/><rect x="6.1" y="33.1" width="3.2" height="2" fill="#f6fbe6" opacity="0.95"/><rect x="8.3" y="36.8" width="6.5" height="2" fill="#f6fbe6" opacity="0.95"/><rect x="18.2" y="40.2" width="6.2" height="2" fill="#f6fbe6" opacity="0.95"/><rect x="26.6" y="40.2" width="3.7" height="2" fill="#f6fbe6" opacity="0.95"/><rect x="28.1" y="33.1" width="6.2" height="2" fill="#f6fbe6" opacity="0.95"/></svg></div>
<div style="position:absolute;left:1006.90px;top:595.71px;width:40.68px;height:53.20px;background:#6da51f;border:1.5px solid #141414;box-sizing:border-box;border-radius:5px;overflow:hidden;box-shadow:inset 0 1px 0 rgba(255,255,255,0.10)"><div style="position:absolute;left:6.0px;top:4.40px;font-size:12.0px;line-height:15px;color:#fbfbf2;white-space:nowrap;-webkit-text-stroke:0.4px #fbfbf2">Class</div><svg style="position:absolute;left:0;top:0" width="40" height="52"><rect x="0.0" y="27.3" width="5.6" height="2" fill="#f6fbe6" opacity="0.95"/><rect x="7.4" y="33.1" width="3.1" height="2" fill="#f6fbe6" opacity="0.95"/><rect x="9.6" y="36.8" width="4.9" height="2" fill="#f6fbe6" opacity="0.95"/><rect x="16.6" y="36.8" width="3.8" height="2" fill="#f6fbe6" opacity="0.95"/><rect x="19.2" y="40.2" width="5.5" height="2" fill="#f6fbe6" opacity="0.95"/><rect x="26.6" y="40.2" width="3.4" height="2" fill="#f6fbe6" opacity="0.95"/><rect x="28.8" y="33.7" width="6.8" height="2" fill="#f6fbe6" opacity="0.95"/></svg></div>
<div style="position:absolute;left:1046.58px;top:595.71px;width:40.68px;height:53.20px;background:#6da51f;border:1.5px solid #141414;box-sizing:border-box;border-radius:5px;overflow:hidden;box-shadow:inset 0 1px 0 rgba(255,255,255,0.10)"><div style="position:absolute;left:6.0px;top:4.40px;font-size:12.0px;line-height:15px;color:#fbfbf2;white-space:nowrap;-webkit-text-stroke:0.4px #fbfbf2">Class</div><svg style="position:absolute;left:0;top:0" width="40" height="52"><rect x="0.0" y="27.3" width="5.8" height="2" fill="#f6fbe6" opacity="0.95"/><rect x="6.1" y="33.1" width="3.2" height="2" fill="#f6fbe6" opacity="0.95"/><rect x="8.3" y="36.8" width="6.5" height="2" fill="#f6fbe6" opacity="0.95"/><rect x="18.2" y="40.2" width="6.2" height="2" fill="#f6fbe6" opacity="0.95"/><rect x="26.6" y="40.2" width="3.7" height="2" fill="#f6fbe6" opacity="0.95"/><rect x="28.1" y="33.1" width="6.2" height="2" fill="#f6fbe6" opacity="0.95"/></svg></div>
<div style="position:absolute;left:1086.26px;top:595.71px;width:40.68px;height:53.20px;background:#6da51f;border:1.5px solid #141414;box-sizing:border-box;border-radius:5px;overflow:hidden;box-shadow:inset 0 1px 0 rgba(255,255,255,0.10)"><div style="position:absolute;left:6.0px;top:4.40px;font-size:12.0px;line-height:15px;color:#fbfbf2;white-space:nowrap;-webkit-text-stroke:0.4px #fbfbf2">Class</div><svg style="position:absolute;left:0;top:0" width="40" height="52"><rect x="0.0" y="27.3" width="5.6" height="2" fill="#f6fbe6" opacity="0.95"/><rect x="7.4" y="33.1" width="3.1" height="2" fill="#f6fbe6" opacity="0.95"/><rect x="9.6" y="36.8" width="4.9" height="2" fill="#f6fbe6" opacity="0.95"/><rect x="16.6" y="36.8" width="3.8" height="2" fill="#f6fbe6" opacity="0.95"/><rect x="19.2" y="40.2" width="5.5" height="2" fill="#f6fbe6" opacity="0.95"/><rect x="26.6" y="40.2" width="3.4" height="2" fill="#f6fbe6" opacity="0.95"/><rect x="28.8" y="33.7" width="6.8" height="2" fill="#f6fbe6" opacity="0.95"/></svg></div>
<div style="position:absolute;left:1125.94px;top:595.71px;width:40.68px;height:53.20px;background:#6da51f;border:1.5px solid #141414;box-sizing:border-box;border-radius:5px;overflow:hidden;box-shadow:inset 0 1px 0 rgba(255,255,255,0.10)"><div style="position:absolute;left:6.0px;top:4.40px;font-size:12.0px;line-height:15px;color:#fbfbf2;white-space:nowrap;-webkit-text-stroke:0.4px #fbfbf2">Class</div><svg style="position:absolute;left:0;top:0" width="40" height="52"><rect x="0.0" y="27.3" width="5.8" height="2" fill="#f6fbe6" opacity="0.95"/><rect x="6.1" y="33.1" width="3.2" height="2" fill="#f6fbe6" opacity="0.95"/><rect x="8.3" y="36.8" width="6.5" height="2" fill="#f6fbe6" opacity="0.95"/><rect x="18.2" y="40.2" width="6.2" height="2" fill="#f6fbe6" opacity="0.95"/><rect x="26.6" y="40.2" width="3.7" height="2" fill="#f6fbe6" opacity="0.95"/><rect x="28.1" y="33.1" width="6.2" height="2" fill="#f6fbe6" opacity="0.95"/></svg></div>
<div style="position:absolute;left:1165.62px;top:595.71px;width:40.68px;height:53.20px;background:#6da51f;border:1.5px solid #141414;box-sizing:border-box;border-radius:5px;overflow:hidden;box-shadow:inset 0 1px 0 rgba(255,255,255,0.10)"><div style="position:absolute;left:6.0px;top:4.40px;font-size:12.0px;line-height:15px;color:#fbfbf2;white-space:nowrap;-webkit-text-stroke:0.4px #fbfbf2">Class</div><svg style="position:absolute;left:0;top:0" width="40" height="52"><rect x="0.0" y="27.3" width="5.6" height="2" fill="#f6fbe6" opacity="0.95"/><rect x="7.4" y="33.1" width="3.1" height="2" fill="#f6fbe6" opacity="0.95"/><rect x="9.6" y="36.8" width="4.9" height="2" fill="#f6fbe6" opacity="0.95"/><rect x="16.6" y="36.8" width="3.8" height="2" fill="#f6fbe6" opacity="0.95"/><rect x="19.2" y="40.2" width="5.5" height="2" fill="#f6fbe6" opacity="0.95"/><rect x="26.6" y="40.2" width="3.4" height="2" fill="#f6fbe6" opacity="0.95"/><rect x="28.8" y="33.7" width="6.8" height="2" fill="#f6fbe6" opacity="0.95"/></svg></div>
<div style="position:absolute;left:1205.30px;top:595.71px;width:40.68px;height:53.20px;background:#6da51f;border:1.5px solid #141414;box-sizing:border-box;border-radius:5px;overflow:hidden;box-shadow:inset 0 1px 0 rgba(255,255,255,0.10)"><div style="position:absolute;left:6.0px;top:4.40px;font-size:12.0px;line-height:15px;color:#fbfbf2;white-space:nowrap;-webkit-text-stroke:0.4px #fbfbf2">Class</div><svg style="position:absolute;left:0;top:0" width="40" height="52"><rect x="0.0" y="27.3" width="5.8" height="2" fill="#f6fbe6" opacity="0.95"/><rect x="6.1" y="33.1" width="3.2" height="2" fill="#f6fbe6" opacity="0.95"/><rect x="8.3" y="36.8" width="6.5" height="2" fill="#f6fbe6" opacity="0.95"/><rect x="18.2" y="40.2" width="6.2" height="2" fill="#f6fbe6" opacity="0.95"/><rect x="26.6" y="40.2" width="3.7" height="2" fill="#f6fbe6" opacity="0.95"/><rect x="28.1" y="33.1" width="6.2" height="2" fill="#f6fbe6" opacity="0.95"/></svg></div>
<div style="position:absolute;left:1244.98px;top:595.71px;width:40.68px;height:53.20px;background:#6da51f;border:1.5px solid #141414;box-sizing:border-box;border-radius:5px;overflow:hidden;box-shadow:inset 0 1px 0 rgba(255,255,255,0.10)"><div style="position:absolute;left:6.0px;top:4.40px;font-size:12.0px;line-height:15px;color:#fbfbf2;white-space:nowrap;-webkit-text-stroke:0.4px #fbfbf2">Class</div><svg style="position:absolute;left:0;top:0" width="40" height="52"><rect x="0.0" y="27.3" width="5.6" height="2" fill="#f6fbe6" opacity="0.95"/><rect x="7.4" y="33.1" width="3.1" height="2" fill="#f6fbe6" opacity="0.95"/><rect x="9.6" y="36.8" width="4.9" height="2" fill="#f6fbe6" opacity="0.95"/><rect x="16.6" y="36.8" width="3.8" height="2" fill="#f6fbe6" opacity="0.95"/><rect x="19.2" y="40.2" width="5.5" height="2" fill="#f6fbe6" opacity="0.95"/><rect x="26.6" y="40.2" width="3.4" height="2" fill="#f6fbe6" opacity="0.95"/><rect x="28.8" y="33.7" width="6.8" height="2" fill="#f6fbe6" opacity="0.95"/></svg></div>
<div style="position:absolute;left:1284.66px;top:595.71px;width:40.68px;height:53.20px;background:#6da51f;border:1.5px solid #141414;box-sizing:border-box;border-radius:5px;overflow:hidden;box-shadow:inset 0 1px 0 rgba(255,255,255,0.10)"><div style="position:absolute;left:6.0px;top:4.40px;font-size:12.0px;line-height:15px;color:#fbfbf2;white-space:nowrap;-webkit-text-stroke:0.4px #fbfbf2">Class</div><svg style="position:absolute;left:0;top:0" width="40" height="52"><rect x="0.0" y="27.3" width="5.8" height="2" fill="#f6fbe6" opacity="0.95"/><rect x="6.1" y="33.1" width="3.2" height="2" fill="#f6fbe6" opacity="0.95"/><rect x="8.3" y="36.8" width="6.5" height="2" fill="#f6fbe6" opacity="0.95"/><rect x="18.2" y="40.2" width="6.2" height="2" fill="#f6fbe6" opacity="0.95"/><rect x="26.6" y="40.2" width="3.7" height="2" fill="#f6fbe6" opacity="0.95"/><rect x="28.1" y="33.1" width="6.2" height="2" fill="#f6fbe6" opacity="0.95"/></svg></div>
<div style="position:absolute;left:530.74px;top:649.03px;width:40.68px;height:53.20px;background:#a6a21e;border:1.5px solid #141414;box-sizing:border-box;border-radius:5px;overflow:hidden;box-shadow:inset 0 1px 0 rgba(255,255,255,0.10)"><div style="position:absolute;left:6.0px;top:4.40px;font-size:12.0px;line-height:15px;color:#fbfbf2;white-space:nowrap;-webkit-text-stroke:0.4px #fbfbf2">Class</div><svg style="position:absolute;left:0;top:0" width="40" height="52"><rect x="0.3" y="24.4" width="5.0" height="2" fill="#fbf8d0" opacity="0.95"/><rect x="7.0" y="27.5" width="2.6" height="2" fill="#fbf8d0" opacity="0.95"/><rect x="9.0" y="31.0" width="6.0" height="2" fill="#fbf8d0" opacity="0.95"/><rect x="16.5" y="31.8" width="2.6" height="2" fill="#fbf8d0" opacity="0.95"/><rect x="28.0" y="31.4" width="6.0" height="2" fill="#fbf8d0" opacity="0.95"/><rect x="0.3" y="36.2" width="5.0" height="2" fill="#fbf8d0" opacity="0.95"/><rect x="19.0" y="36.2" width="5.0" height="2" fill="#fbf8d0" opacity="0.95"/><rect x="24.0" y="37.2" width="5.0" height="2" fill="#fbf8d0" opacity="0.95"/><rect x="7.0" y="39.9" width="7.5" height="2" fill="#fbf8d0" opacity="0.95"/><rect x="28.5" y="39.9" width="6.0" height="2" fill="#fbf8d0" opacity="0.95"/><rect x="19.0" y="42.7" width="6.0" height="2" fill="#fbf8d0" opacity="0.95"/><rect x="27.0" y="42.7" width="3.5" height="2" fill="#fbf8d0" opacity="0.95"/></svg></div>
<div style="position:absolute;left:570.42px;top:649.03px;width:40.68px;height:53.20px;background:#a6a21e;border:1.5px solid #141414;box-sizing:border-box;border-radius:5px;overflow:hidden;box-shadow:inset 0 1px 0 rgba(255,255,255,0.10)"><div style="position:absolute;left:6.0px;top:4.40px;font-size:12.0px;line-height:15px;color:#fbfbf2;white-space:nowrap;-webkit-text-stroke:0.4px #fbfbf2">Class</div><svg style="position:absolute;left:0;top:0" width="40" height="52"><rect x="0.0" y="25.2" width="9.3" height="2" fill="#fbf8d0" opacity="0.95"/><rect x="0.0" y="30.9" width="9.3" height="2" fill="#fbf8d0" opacity="0.95"/><rect x="9.3" y="29.5" width="9.5" height="2" fill="#fbf8d0" opacity="0.95"/><rect x="9.3" y="35.5" width="9.5" height="2" fill="#fbf8d0" opacity="0.95"/><rect x="0.0" y="38.4" width="9.3" height="2" fill="#fbf8d0" opacity="0.95"/><rect x="9.3" y="41.7" width="9.5" height="2" fill="#fbf8d0" opacity="0.95"/><rect x="19.0" y="33.1" width="9.7" height="2" fill="#fbf8d0" opacity="0.95"/><rect x="19.0" y="38.4" width="9.7" height="2" fill="#fbf8d0" opacity="0.95"/><rect x="19.0" y="42.7" width="9.7" height="2" fill="#fbf8d0" opacity="0.95"/><rect x="28.7" y="30.9" width="10.0" height="2" fill="#fbf8d0" opacity="0.95"/><rect x="28.7" y="36.2" width="10.0" height="2" fill="#fbf8d0" opacity="0.95"/><rect x="28.7" y="40.6" width="10.0" height="2" fill="#fbf8d0" opacity="0.95"/></svg></div>
<div style="position:absolute;left:610.10px;top:649.03px;width:40.68px;height:53.20px;background:#a6a21e;border:1.5px solid #141414;box-sizing:border-box;border-radius:5px;overflow:hidden;box-shadow:inset 0 1px 0 rgba(255,255,255,0.10)"><div style="position:absolute;left:6.0px;top:4.40px;font-size:12.0px;line-height:15px;color:#fbfbf2;white-space:nowrap;-webkit-text-stroke:0.4px #fbfbf2">Class</div><svg style="position:absolute;left:0;top:0" width="40" height="52"><rect x="0.0" y="25.2" width="9.3" height="2" fill="#fbf8d0" opacity="0.95"/><rect x="0.0" y="30.9" width="9.3" height="2" fill="#fbf8d0" opacity="0.95"/><rect x="9.3" y="29.5" width="9.5" height="2" fill="#fbf8d0" opacity="0.95"/><rect x="9.3" y="35.5" width="9.5" height="2" fill="#fbf8d0" opacity="0.95"/><rect x="0.0" y="38.4" width="9.3" height="2" fill="#fbf8d0" opacity="0.95"/><rect x="9.3" y="41.7" width="9.5" height="2" fill="#fbf8d0" opacity="0.95"/><rect x="19.0" y="33.1" width="9.7" height="2" fill="#fbf8d0" opacity="0.95"/><rect x="19.0" y="38.4" width="9.7" height="2" fill="#fbf8d0" opacity="0.95"/><rect x="19.0" y="42.7" width="9.7" height="2" fill="#fbf8d0" opacity="0.95"/><rect x="28.7" y="30.9" width="10.0" height="2" fill="#fbf8d0" opacity="0.95"/><rect x="28.7" y="36.2" width="10.0" height="2" fill="#fbf8d0" opacity="0.95"/><rect x="28.7" y="40.6" width="10.0" height="2" fill="#fbf8d0" opacity="0.95"/></svg></div>
<div style="position:absolute;left:729.14px;top:649.03px;width:40.68px;height:53.20px;background:#a6a21e;border:1.5px solid #141414;box-sizing:border-box;border-radius:5px;overflow:hidden;box-shadow:inset 0 1px 0 rgba(255,255,255,0.10)"><div style="position:absolute;left:6.0px;top:4.40px;font-size:12.0px;line-height:15px;color:#fbfbf2;white-space:nowrap;-webkit-text-stroke:0.4px #fbfbf2">Class</div><svg style="position:absolute;left:0;top:0" width="40" height="52"><rect x="0.3" y="24.4" width="5.0" height="2" fill="#fbf8d0" opacity="0.95"/><rect x="7.0" y="27.5" width="2.6" height="2" fill="#fbf8d0" opacity="0.95"/><rect x="9.0" y="31.0" width="6.0" height="2" fill="#fbf8d0" opacity="0.95"/><rect x="16.5" y="31.8" width="2.6" height="2" fill="#fbf8d0" opacity="0.95"/><rect x="28.0" y="31.4" width="6.0" height="2" fill="#fbf8d0" opacity="0.95"/><rect x="0.3" y="36.2" width="5.0" height="2" fill="#fbf8d0" opacity="0.95"/><rect x="19.0" y="36.2" width="5.0" height="2" fill="#fbf8d0" opacity="0.95"/><rect x="24.0" y="37.2" width="5.0" height="2" fill="#fbf8d0" opacity="0.95"/><rect x="7.0" y="39.9" width="7.5" height="2" fill="#fbf8d0" opacity="0.95"/><rect x="28.5" y="39.9" width="6.0" height="2" fill="#fbf8d0" opacity="0.95"/><rect x="19.0" y="42.7" width="6.0" height="2" fill="#fbf8d0" opacity="0.95"/><rect x="27.0" y="42.7" width="3.5" height="2" fill="#fbf8d0" opacity="0.95"/></svg></div>
<div style="position:absolute;left:768.82px;top:649.03px;width:40.68px;height:53.20px;background:#a6a21e;border:1.5px solid #141414;box-sizing:border-box;border-radius:5px;overflow:hidden;box-shadow:inset 0 1px 0 rgba(255,255,255,0.10)"><div style="position:absolute;left:6.0px;top:4.40px;font-size:12.0px;line-height:15px;color:#fbfbf2;white-space:nowrap;-webkit-text-stroke:0.4px #fbfbf2">Class</div><svg style="position:absolute;left:0;top:0" width="40" height="52"><rect x="0.3" y="24.4" width="5.0" height="2" fill="#fbf8d0" opacity="0.95"/><rect x="7.0" y="27.5" width="2.6" height="2" fill="#fbf8d0" opacity="0.95"/><rect x="9.0" y="31.0" width="6.0" height="2" fill="#fbf8d0" opacity="0.95"/><rect x="16.5" y="31.8" width="2.6" height="2" fill="#fbf8d0" opacity="0.95"/><rect x="28.0" y="31.4" width="6.0" height="2" fill="#fbf8d0" opacity="0.95"/><rect x="0.3" y="36.2" width="5.0" height="2" fill="#fbf8d0" opacity="0.95"/><rect x="19.0" y="36.2" width="5.0" height="2" fill="#fbf8d0" opacity="0.95"/><rect x="24.0" y="37.2" width="5.0" height="2" fill="#fbf8d0" opacity="0.95"/><rect x="7.0" y="39.9" width="7.5" height="2" fill="#fbf8d0" opacity="0.95"/><rect x="28.5" y="39.9" width="6.0" height="2" fill="#fbf8d0" opacity="0.95"/><rect x="19.0" y="42.7" width="6.0" height="2" fill="#fbf8d0" opacity="0.95"/><rect x="27.0" y="42.7" width="3.5" height="2" fill="#fbf8d0" opacity="0.95"/></svg></div>
<div style="position:absolute;left:808.50px;top:649.03px;width:40.68px;height:53.20px;background:#a6a21e;border:1.5px solid #141414;box-sizing:border-box;border-radius:5px;overflow:hidden;box-shadow:inset 0 1px 0 rgba(255,255,255,0.10)"><div style="position:absolute;left:6.0px;top:4.40px;font-size:12.0px;line-height:15px;color:#fbfbf2;white-space:nowrap;-webkit-text-stroke:0.4px #fbfbf2">Class</div><svg style="position:absolute;left:0;top:0" width="40" height="52"><rect x="0.3" y="24.4" width="5.0" height="2" fill="#fbf8d0" opacity="0.95"/><rect x="7.0" y="27.5" width="2.6" height="2" fill="#fbf8d0" opacity="0.95"/><rect x="9.0" y="31.0" width="6.0" height="2" fill="#fbf8d0" opacity="0.95"/><rect x="16.5" y="31.8" width="2.6" height="2" fill="#fbf8d0" opacity="0.95"/><rect x="28.0" y="31.4" width="6.0" height="2" fill="#fbf8d0" opacity="0.95"/><rect x="0.3" y="36.2" width="5.0" height="2" fill="#fbf8d0" opacity="0.95"/><rect x="19.0" y="36.2" width="5.0" height="2" fill="#fbf8d0" opacity="0.95"/><rect x="24.0" y="37.2" width="5.0" height="2" fill="#fbf8d0" opacity="0.95"/><rect x="7.0" y="39.9" width="7.5" height="2" fill="#fbf8d0" opacity="0.95"/><rect x="28.5" y="39.9" width="6.0" height="2" fill="#fbf8d0" opacity="0.95"/><rect x="19.0" y="42.7" width="6.0" height="2" fill="#fbf8d0" opacity="0.95"/><rect x="27.0" y="42.7" width="3.5" height="2" fill="#fbf8d0" opacity="0.95"/></svg></div>
<div style="position:absolute;left:848.18px;top:649.03px;width:40.68px;height:53.20px;background:#a6a21e;border:1.5px solid #141414;box-sizing:border-box;border-radius:5px;overflow:hidden;box-shadow:inset 0 1px 0 rgba(255,255,255,0.10)"><div style="position:absolute;left:6.0px;top:4.40px;font-size:12.0px;line-height:15px;color:#fbfbf2;white-space:nowrap;-webkit-text-stroke:0.4px #fbfbf2">Class</div><svg style="position:absolute;left:0;top:0" width="40" height="52"><rect x="0.3" y="24.4" width="5.0" height="2" fill="#fbf8d0" opacity="0.95"/><rect x="7.0" y="27.5" width="2.6" height="2" fill="#fbf8d0" opacity="0.95"/><rect x="9.0" y="31.0" width="6.0" height="2" fill="#fbf8d0" opacity="0.95"/><rect x="16.5" y="31.8" width="2.6" height="2" fill="#fbf8d0" opacity="0.95"/><rect x="28.0" y="31.4" width="6.0" height="2" fill="#fbf8d0" opacity="0.95"/><rect x="0.3" y="36.2" width="5.0" height="2" fill="#fbf8d0" opacity="0.95"/><rect x="19.0" y="36.2" width="5.0" height="2" fill="#fbf8d0" opacity="0.95"/><rect x="24.0" y="37.2" width="5.0" height="2" fill="#fbf8d0" opacity="0.95"/><rect x="7.0" y="39.9" width="7.5" height="2" fill="#fbf8d0" opacity="0.95"/><rect x="28.5" y="39.9" width="6.0" height="2" fill="#fbf8d0" opacity="0.95"/><rect x="19.0" y="42.7" width="6.0" height="2" fill="#fbf8d0" opacity="0.95"/><rect x="27.0" y="42.7" width="3.5" height="2" fill="#fbf8d0" opacity="0.95"/></svg></div>
<div style="position:absolute;left:887.86px;top:649.03px;width:40.68px;height:53.20px;background:#a6a21e;border:1.5px solid #141414;box-sizing:border-box;border-radius:5px;overflow:hidden;box-shadow:inset 0 1px 0 rgba(255,255,255,0.10)"><div style="position:absolute;left:6.0px;top:4.40px;font-size:12.0px;line-height:15px;color:#fbfbf2;white-space:nowrap;-webkit-text-stroke:0.4px #fbfbf2">Class</div><svg style="position:absolute;left:0;top:0" width="40" height="52"><rect x="0.3" y="24.4" width="5.0" height="2" fill="#fbf8d0" opacity="0.95"/><rect x="7.0" y="27.5" width="2.6" height="2" fill="#fbf8d0" opacity="0.95"/><rect x="9.0" y="31.0" width="6.0" height="2" fill="#fbf8d0" opacity="0.95"/><rect x="16.5" y="31.8" width="2.6" height="2" fill="#fbf8d0" opacity="0.95"/><rect x="28.0" y="31.4" width="6.0" height="2" fill="#fbf8d0" opacity="0.95"/><rect x="0.3" y="36.2" width="5.0" height="2" fill="#fbf8d0" opacity="0.95"/><rect x="19.0" y="36.2" width="5.0" height="2" fill="#fbf8d0" opacity="0.95"/><rect x="24.0" y="37.2" width="5.0" height="2" fill="#fbf8d0" opacity="0.95"/><rect x="7.0" y="39.9" width="7.5" height="2" fill="#fbf8d0" opacity="0.95"/><rect x="28.5" y="39.9" width="6.0" height="2" fill="#fbf8d0" opacity="0.95"/><rect x="19.0" y="42.7" width="6.0" height="2" fill="#fbf8d0" opacity="0.95"/><rect x="27.0" y="42.7" width="3.5" height="2" fill="#fbf8d0" opacity="0.95"/></svg></div>
<div style="position:absolute;left:927.54px;top:649.03px;width:40.68px;height:53.20px;background:#a6a21e;border:1.5px solid #141414;box-sizing:border-box;border-radius:5px;overflow:hidden;box-shadow:inset 0 1px 0 rgba(255,255,255,0.10)"><div style="position:absolute;left:6.0px;top:4.40px;font-size:12.0px;line-height:15px;color:#fbfbf2;white-space:nowrap;-webkit-text-stroke:0.4px #fbfbf2">Class</div><svg style="position:absolute;left:0;top:0" width="40" height="52"><rect x="0.3" y="24.4" width="5.0" height="2" fill="#fbf8d0" opacity="0.95"/><rect x="7.0" y="27.5" width="2.6" height="2" fill="#fbf8d0" opacity="0.95"/><rect x="9.0" y="31.0" width="6.0" height="2" fill="#fbf8d0" opacity="0.95"/><rect x="16.5" y="31.8" width="2.6" height="2" fill="#fbf8d0" opacity="0.95"/><rect x="28.0" y="31.4" width="6.0" height="2" fill="#fbf8d0" opacity="0.95"/><rect x="0.3" y="36.2" width="5.0" height="2" fill="#fbf8d0" opacity="0.95"/><rect x="19.0" y="36.2" width="5.0" height="2" fill="#fbf8d0" opacity="0.95"/><rect x="24.0" y="37.2" width="5.0" height="2" fill="#fbf8d0" opacity="0.95"/><rect x="7.0" y="39.9" width="7.5" height="2" fill="#fbf8d0" opacity="0.95"/><rect x="28.5" y="39.9" width="6.0" height="2" fill="#fbf8d0" opacity="0.95"/><rect x="19.0" y="42.7" width="6.0" height="2" fill="#fbf8d0" opacity="0.95"/><rect x="27.0" y="42.7" width="3.5" height="2" fill="#fbf8d0" opacity="0.95"/></svg></div>
<div style="position:absolute;left:1127.44px;top:597.21px;width:12.00px;height:50.20px;background:rgba(255,255,255,0.13)"></div>
<div style="position:absolute;left:1358.4px;top:97px;width:3.2px;height:605.5px;background:#151515"></div>
<div style="position:absolute;left:1359.2px;top:104px;width:1.6px;height:598.5px;background:#d8d8d8"></div>
<svg style="position:absolute;left:1349px;top:95px" width="22" height="22"><path d="M2.2 4.2 Q2.2 1.6 4.8 1.6 H17.2 Q19.8 1.6 19.8 4.2 V11 L11 19.8 L2.2 11 Z" fill="#c4c4c4" fill-opacity="0.82" stroke="#1b1b1b" stroke-width="1.3"/><rect x="10.2" y="5" width="1.6" height="15" fill="#f2f2f2"/></svg>
<div style="position:absolute;left:0.00px;top:702.40px;width:1600.00px;height:297.60px;background:#111"></div>
<div style="position:absolute;left:0.00px;top:705.00px;width:1600.00px;height:295.00px;background:#75b7f2;border-radius:0 0 6px 6px"></div>
<div style="position:absolute;left:2.60px;top:707.50px;width:1594.60px;height:290.00px;background:#2c2c2c;border-radius:0 0 4px 4px;overflow:hidden"></div>
<div style="position:absolute;left:2.60px;top:707.50px;width:1594.60px;height:38.00px;background:#474747"></div>
<div style="position:absolute;left:2.60px;top:744.80px;width:1594.60px;height:1.00px;background:#3a3a3a"></div>
<div style="position:absolute;left:2.60px;top:745.50px;width:367.80px;height:252.00px;background:#595959"></div>
<div style="position:absolute;left:11.50px;top:714.50px;width:188.50px;height:22.50px;background:#383838;border-radius:6px"></div>
<div style="position:absolute;left:12.20px;top:715.00px;width:79.20px;height:21.60px;background:#2a6ec0;border-radius:5.5px;box-shadow:0 1px 1px rgba(0,0,0,0.3)"></div>
<div style="position:absolute;left:34.30px;top:717.27px;font-size:14.4px;line-height:16.56px;height:16.56px;color:#ffffff;font-weight:400;white-space:nowrap;-webkit-text-stroke:0.25px #ffffff">Piste</div>
<div style="position:absolute;left:109.30px;top:717.27px;font-size:14.4px;line-height:16.56px;height:16.56px;color:#dcdcdc;font-weight:400;white-space:nowrap;-webkit-text-stroke:0.25px #dcdcdc">Master vol.</div>
<div style="position:absolute;left:208.00px;top:715.00px;width:79.00px;height:21.60px;background:#3b5b84;border-radius:5.5px"></div>
<div style="position:absolute;left:215.50px;top:717.27px;font-size:14.4px;line-height:16.56px;height:16.56px;color:#9fbbdc;font-weight:400;white-space:nowrap;-webkit-text-stroke:0.25px #9fbbdc">Comparer</div>
<div style="position:absolute;left:22.00px;top:759.00px;width:35.20px;height:21.20px;background:#2a6ec0;border-radius:5px;box-shadow:0 1px 1px rgba(0,0,0,0.3)"></div>
<svg style="position:absolute;left:22px;top:759px" width="36" height="22"><path d="M14.2 6.8 A6.3 6.3 0 1 0 21.4 6.8" fill="none" stroke="#f2f2f2" stroke-width="1.6" stroke-linecap="round"/><path d="M17.8 4.5 V11" stroke="#f2f2f2" stroke-width="1.6" stroke-linecap="round"/></svg>
<div style="position:absolute;left:65.50px;top:759.00px;width:282.50px;height:21.20px;background:#686868;border-radius:5px;box-shadow:0 1px 1px rgba(0,0,0,0.25)"></div>
<div style="position:absolute;left:76.50px;top:762.17px;font-size:14.4px;line-height:16.56px;height:16.56px;color:#a9a9a9;font-weight:400;white-space:nowrap;-webkit-text-stroke:0.25px #a9a9a9">Réglage</div>
<svg style="position:absolute;left:330px;top:761px" width="14" height="18"><path d="M3.5 6.5 L7 3 L10.5 6.5 M3.5 11 L7 14.5 L10.5 11" fill="none" stroke="#cfcfcf" stroke-width="1.4" stroke-linecap="round" stroke-linejoin="round"/></svg>
<div style="position:absolute;left:690.20px;top:714.30px;width:218.50px;height:23.40px;background:#383838;border-radius:6px"></div>
<div style="position:absolute;left:808.70px;top:715.00px;width:100.00px;height:22.30px;background:#2a6ec0;border-radius:5.5px;box-shadow:0 1px 1px rgba(0,0,0,0.3)"></div>
<div style="position:absolute;left:705.50px;top:717.27px;font-size:14.4px;line-height:16.56px;height:16.56px;color:#dedede;font-weight:400;white-space:nowrap;-webkit-text-stroke:0.25px #dedede">Commandes</div>
<div style="position:absolute;left:846.50px;top:717.97px;font-size:14.4px;line-height:16.56px;height:16.56px;color:#ffffff;font-weight:400;white-space:nowrap;-webkit-text-stroke:0.25px #ffffff">Ég.</div>
<div style="position:absolute;left:1553.00px;top:714.00px;width:35.80px;height:21.60px;background:#5b5b5b;border-radius:5px;box-shadow:0 1px 1px rgba(0,0,0,0.3)"></div>
<svg style="position:absolute;left:1553px;top:714px" width="36" height="22"><g fill="none" stroke="#f2f2f2" stroke-width="1.4" stroke-linecap="round"><path d="M11.5 17.5 L15 14"/><path d="M19.8 5 L15.8 10 Q15 11.5 16 12.8 Q17.3 13.8 18.6 12.6 L25.3 7.5"/></g><circle cx="11.3" cy="17.6" r="1.2" fill="#f2f2f2"/></svg>
<svg style="position:absolute;left:0;top:0" width="1600" height="1000">
<defs>
<radialGradient id="eqbg" cx="0.47" cy="0.33" r="0.62" fx="0.47" fy="0.33">
<stop offset="0" stop-color="#24405f"/><stop offset="0.45" stop-color="#1c314b"/><stop offset="0.8" stop-color="#0f1b2b"/><stop offset="1" stop-color="#0a111b"/></radialGradient>
<linearGradient id="eqfade" x1="0" y1="0" x2="0" y2="1"><stop offset="0" stop-color="#000" stop-opacity="0.15"/><stop offset="0.12" stop-color="#000" stop-opacity="0"/><stop offset="0.7" stop-color="#000" stop-opacity="0"/><stop offset="1" stop-color="#000" stop-opacity="0.45"/></linearGradient>
<linearGradient id="eqside" x1="0" y1="0" x2="1" y2="0"><stop offset="0" stop-color="#000" stop-opacity="0.45"/><stop offset="0.06" stop-color="#000" stop-opacity="0"/><stop offset="0.93" stop-color="#000" stop-opacity="0"/><stop offset="1" stop-color="#000" stop-opacity="0.45"/></linearGradient>
</defs>
<rect x="594.3" y="745.5" width="780.7" height="252.0" fill="url(#eqbg)"/>
<rect x="594.3" y="745.5" width="780.7" height="252.0" fill="url(#eqfade)"/>
<rect x="594.3" y="745.5" width="780.7" height="252.0" fill="url(#eqside)"/>
<rect x="621" y="964.50" width="688" height="1" fill="rgba(120,150,190,0.15)"/>
<rect x="621" y="948.95" width="688" height="1" fill="rgba(120,150,190,0.15)"/>
<rect x="621" y="933.40" width="688" height="1" fill="rgba(120,150,190,0.15)"/>
<rect x="621" y="917.85" width="688" height="1" fill="rgba(120,150,190,0.15)"/>
<rect x="621" y="902.30" width="688" height="1" fill="rgba(120,150,190,0.15)"/>
<rect x="621" y="886.75" width="688" height="1" fill="rgba(120,150,190,0.15)"/>
<rect x="621" y="871.20" width="688" height="1" fill="rgba(120,150,190,0.15)"/>
<rect x="621" y="855.65" width="688" height="1" fill="rgba(120,150,190,0.15)"/>
<rect x="621" y="840.10" width="688" height="1" fill="rgba(120,150,190,0.15)"/>
<rect x="621" y="824.55" width="688" height="1" fill="rgba(120,150,190,0.15)"/>
<rect x="621" y="809.00" width="688" height="1" fill="rgba(120,150,190,0.15)"/>
<rect x="621" y="793.45" width="688" height="1" fill="rgba(120,150,190,0.15)"/>
<rect x="621" y="777.90" width="688" height="1" fill="rgba(120,150,190,0.15)"/>
<rect x="621.50" y="772" width="1" height="200" fill="rgba(120,150,190,0.15)"/>
<rect x="661.79" y="772" width="1" height="200" fill="rgba(120,150,190,0.15)"/>
<rect x="690.38" y="772" width="1" height="200" fill="rgba(120,150,190,0.15)"/>
<rect x="712.55" y="772" width="1" height="200" fill="rgba(120,150,190,0.15)"/>
<rect x="730.67" y="772" width="1" height="200" fill="rgba(120,150,190,0.15)"/>
<rect x="745.98" y="772" width="1" height="200" fill="rgba(120,150,190,0.15)"/>
<rect x="759.25" y="772" width="1" height="200" fill="rgba(120,150,190,0.15)"/>
<rect x="770.96" y="772" width="1" height="200" fill="rgba(120,150,190,0.15)"/>
<rect x="781.42" y="772" width="1" height="200" fill="rgba(120,150,190,0.15)"/>
<rect x="850.30" y="772" width="1" height="200" fill="rgba(120,150,190,0.15)"/>
<rect x="890.59" y="772" width="1" height="200" fill="rgba(120,150,190,0.15)"/>
<rect x="919.18" y="772" width="1" height="200" fill="rgba(120,150,190,0.15)"/>
<rect x="941.35" y="772" width="1" height="200" fill="rgba(120,150,190,0.15)"/>
<rect x="959.47" y="772" width="1" height="200" fill="rgba(120,150,190,0.15)"/>
<rect x="974.78" y="772" width="1" height="200" fill="rgba(120,150,190,0.15)"/>
<rect x="988.05" y="772" width="1" height="200" fill="rgba(120,150,190,0.15)"/>
<rect x="999.76" y="772" width="1" height="200" fill="rgba(120,150,190,0.15)"/>
<rect x="1010.22" y="772" width="1" height="200" fill="rgba(120,150,190,0.15)"/>
<rect x="1079.10" y="772" width="1" height="200" fill="rgba(120,150,190,0.15)"/>
<rect x="1119.39" y="772" width="1" height="200" fill="rgba(120,150,190,0.15)"/>
<rect x="1147.98" y="772" width="1" height="200" fill="rgba(120,150,190,0.15)"/>
<rect x="1170.15" y="772" width="1" height="200" fill="rgba(120,150,190,0.15)"/>
<rect x="1188.27" y="772" width="1" height="200" fill="rgba(120,150,190,0.15)"/>
<rect x="1203.58" y="772" width="1" height="200" fill="rgba(120,150,190,0.15)"/>
<rect x="1216.85" y="772" width="1" height="200" fill="rgba(120,150,190,0.15)"/>
<rect x="1228.56" y="772" width="1" height="200" fill="rgba(120,150,190,0.15)"/>
<rect x="1239.02" y="772" width="1" height="200" fill="rgba(120,150,190,0.15)"/>
<rect x="1307.90" y="772" width="1" height="200" fill="rgba(120,150,190,0.15)"/>
<path d="M622.0 871.7 L622.0 881.9 L623.7 881.8 L625.4 881.7 L627.1 881.6 L628.9 881.5 L630.6 881.4 L632.3 881.2 L634.0 881.1 L635.7 880.9 L637.4 880.7 L639.2 880.5 L640.9 880.3 L642.6 880.1 L644.3 879.8 L646.0 879.6 L647.7 879.3 L649.5 879.1 L651.2 878.8 L652.9 878.5 L654.6 878.2 L656.3 877.9 L658.0 877.6 L659.8 877.3 L661.5 877.0 L663.2 876.7 L664.9 876.3 L666.6 876.0 L668.3 875.7 L670.0 875.3 L671.8 875.0 L673.5 874.7 L675.2 874.3 L676.9 874.0 L678.6 873.6 L680.3 873.3 L682.1 872.9 L683.8 872.6 L685.5 872.2 L687.2 871.8 L688.9 871.5 L690.6 871.1 L692.4 870.7 L694.1 870.3 L695.8 869.9 L697.5 869.5 L699.2 869.0 L700.9 868.6 L702.7 868.2 L704.4 867.7 L706.1 867.2 L707.8 866.8 L709.5 866.3 L711.2 865.8 L712.9 865.2 L714.7 864.7 L716.4 864.2 L718.1 863.6 L719.8 863.0 L721.5 862.4 L723.2 861.7 L725.0 861.0 L726.7 860.3 L728.4 859.5 L730.1 858.6 L731.8 857.6 L733.5 856.6 L735.3 855.5 L737.0 854.3 L738.7 853.0 L740.4 851.7 L742.1 850.3 L743.8 848.9 L745.6 847.6 L747.3 846.3 L749.0 845.1 L750.7 844.0 L752.4 843.1 L754.1 842.4 L755.8 841.9 L757.6 841.6 L759.3 841.5 L761.0 841.5 L762.7 841.6 L764.4 841.9 L766.1 842.1 L767.9 842.4 L769.6 842.6 L771.3 842.9 L773.0 843.0 L774.7 843.1 L776.4 843.2 L778.2 843.2 L779.9 843.1 L781.6 843.0 L783.3 842.9 L785.0 842.7 L786.7 842.6 L788.5 842.4 L790.2 842.2 L791.9 842.0 L793.6 841.8 L795.3 841.6 L797.0 841.4 L798.7 841.2 L800.5 841.0 L802.2 840.8 L803.9 840.5 L805.6 840.3 L807.3 840.0 L809.0 839.7 L810.8 839.4 L812.5 839.1 L814.2 838.8 L815.9 838.4 L817.6 838.0 L819.3 837.6 L821.1 837.2 L822.8 836.7 L824.5 836.3 L826.2 835.8 L827.9 835.3 L829.6 834.9 L831.4 834.4 L833.1 833.9 L834.8 833.5 L836.5 833.0 L838.2 832.6 L839.9 832.2 L841.6 831.9 L843.4 831.6 L845.1 831.3 L846.8 831.1 L848.5 830.9 L850.2 830.8 L851.9 830.8 L853.7 830.8 L855.4 830.9 L857.1 831.0 L858.8 831.2 L860.5 831.5 L862.2 831.9 L864.0 832.3 L865.7 832.8 L867.4 833.3 L869.1 833.9 L870.8 834.5 L872.5 835.2 L874.3 836.0 L876.0 836.7 L877.7 837.5 L879.4 838.4 L881.1 839.2 L882.8 840.1 L884.5 840.9 L886.3 841.8 L888.0 842.7 L889.7 843.5 L891.4 844.4 L893.1 845.2 L894.8 846.0 L896.6 846.8 L898.3 847.6 L900.0 848.3 L901.7 849.1 L903.4 849.8 L905.1 850.4 L906.9 851.1 L908.6 851.7 L910.3 852.2 L912.0 852.8 L913.7 853.3 L915.4 853.8 L917.2 854.3 L918.9 854.7 L920.6 855.1 L922.3 855.6 L924.0 855.9 L925.7 856.3 L927.4 856.7 L929.2 857.0 L930.9 857.3 L932.6 857.7 L934.3 858.0 L936.0 858.3 L937.7 858.6 L939.5 858.8 L941.2 859.1 L942.9 859.4 L944.6 859.7 L946.3 859.9 L948.0 860.2 L949.8 860.5 L951.5 860.7 L953.2 861.0 L954.9 861.3 L956.6 861.5 L958.3 861.8 L960.1 862.0 L961.8 862.3 L963.5 862.6 L965.2 862.8 L966.9 863.1 L968.6 863.3 L970.3 863.6 L972.1 863.8 L973.8 864.0 L975.5 864.3 L977.2 864.5 L978.9 864.8 L980.6 865.0 L982.4 865.2 L984.1 865.4 L985.8 865.7 L987.5 865.9 L989.2 866.1 L990.9 866.3 L992.7 866.5 L994.4 866.7 L996.1 866.9 L997.8 867.1 L999.5 867.3 L1001.2 867.5 L1003.0 867.6 L1004.7 867.8 L1006.4 868.0 L1008.1 868.1 L1009.8 868.3 L1011.5 868.5 L1013.2 868.6 L1015.0 868.7 L1016.7 868.9 L1018.4 869.0 L1020.1 869.2 L1021.8 869.3 L1023.5 869.4 L1025.3 869.5 L1027.0 869.6 L1028.7 869.7 L1030.4 869.8 L1032.1 869.9 L1033.8 870.0 L1035.6 870.1 L1037.3 870.2 L1039.0 870.3 L1040.7 870.4 L1042.4 870.4 L1044.1 870.5 L1045.9 870.6 L1047.6 870.7 L1049.3 870.7 L1051.0 870.8 L1052.7 870.8 L1054.4 870.9 L1056.1 870.9 L1057.9 871.0 L1059.6 871.0 L1061.3 871.1 L1063.0 871.1 L1064.7 871.2 L1066.4 871.2 L1068.2 871.2 L1069.9 871.3 L1071.6 871.3 L1073.3 871.4 L1075.0 871.4 L1076.7 871.5 L1078.5 871.6 L1080.2 871.7 L1081.9 871.9 L1083.6 872.1 L1085.3 872.5 L1087.0 872.9 L1088.8 873.5 L1090.5 874.2 L1092.2 875.0 L1093.9 876.1 L1095.6 877.2 L1097.3 878.5 L1099.0 879.8 L1100.8 881.1 L1102.5 882.4 L1104.2 883.5 L1105.9 884.3 L1107.6 884.8 L1109.3 885.0 L1111.1 884.9 L1112.8 884.4 L1114.5 883.6 L1116.2 882.6 L1117.9 881.4 L1119.6 880.1 L1121.4 878.7 L1123.1 877.5 L1124.8 876.3 L1126.5 875.3 L1128.2 874.5 L1129.9 873.8 L1131.7 873.2 L1133.4 872.8 L1135.1 872.5 L1136.8 872.2 L1138.5 872.1 L1140.2 872.0 L1141.9 871.9 L1143.7 871.9 L1145.4 871.9 L1147.1 871.9 L1148.8 871.9 L1150.5 871.9 L1152.2 871.9 L1154.0 871.9 L1155.7 871.9 L1157.4 871.9 L1159.1 871.9 L1160.8 872.0 L1162.5 872.0 L1164.3 872.0 L1166.0 872.0 L1167.7 872.0 L1169.4 872.0 L1171.1 872.1 L1172.8 872.1 L1174.6 872.1 L1176.3 872.1 L1178.0 872.2 L1179.7 872.2 L1181.4 872.2 L1183.1 872.2 L1184.8 872.3 L1186.6 872.3 L1188.3 872.3 L1190.0 872.4 L1191.7 872.4 L1193.4 872.4 L1195.1 872.5 L1196.9 872.5 L1198.6 872.5 L1200.3 872.6 L1202.0 872.6 L1203.7 872.7 L1205.4 872.7 L1207.2 872.8 L1208.9 872.8 L1210.6 872.9 L1212.3 872.9 L1214.0 873.0 L1215.7 873.0 L1217.5 873.1 L1219.2 873.1 L1220.9 873.2 L1222.6 873.2 L1224.3 873.3 L1226.0 873.3 L1227.7 873.4 L1229.5 873.4 L1231.2 873.5 L1232.9 873.5 L1234.6 873.6 L1236.3 873.6 L1238.0 873.7 L1239.8 873.7 L1241.5 873.8 L1243.2 873.8 L1244.9 873.9 L1246.6 873.9 L1248.3 874.0 L1250.1 874.0 L1251.8 874.1 L1253.5 874.1 L1255.2 874.2 L1256.9 874.2 L1258.6 874.3 L1260.4 874.3 L1262.1 874.3 L1263.8 874.4 L1265.5 874.4 L1267.2 874.4 L1268.9 874.5 L1270.6 874.5 L1272.4 874.5 L1274.1 874.6 L1275.8 874.6 L1277.5 874.6 L1279.2 874.6 L1280.9 874.7 L1282.7 874.7 L1284.4 874.7 L1286.1 874.7 L1287.8 874.8 L1289.5 874.8 L1291.2 874.8 L1293.0 874.8 L1294.7 874.8 L1296.4 874.8 L1298.1 874.9 L1299.8 874.9 L1301.5 874.9 L1303.3 874.9 L1305.0 874.9 L1306.7 874.9 L1308.4 874.9 L1308.4 871.7 Z" fill="#7aa0d0" fill-opacity="0.72"/>
<rect x="621.5" y="871.10" width="687.5" height="1.2" fill="#a6b3c4" opacity="0.9"/>
<text x="622.5" y="883" font-family="Liberation Sans" font-size="10" font-weight="400" fill="#b4bfcd" stroke="#b4bfcd" stroke-width="0.35" text-anchor="start">20</text>
<text x="662.3" y="883" font-family="Liberation Sans" font-size="10" font-weight="400" fill="#b4bfcd" stroke="#b4bfcd" stroke-width="0.35" text-anchor="middle">30</text>
<text x="690.9" y="883" font-family="Liberation Sans" font-size="10" font-weight="400" fill="#b4bfcd" stroke="#b4bfcd" stroke-width="0.35" text-anchor="middle">40</text>
<text x="713.0" y="883" font-family="Liberation Sans" font-size="10" font-weight="400" fill="#b4bfcd" stroke="#b4bfcd" stroke-width="0.35" text-anchor="middle">50</text>
<text x="731.2" y="883" font-family="Liberation Sans" font-size="10" font-weight="400" fill="#b4bfcd" stroke="#b4bfcd" stroke-width="0.35" text-anchor="middle">60</text>
<text x="759.8" y="883" font-family="Liberation Sans" font-size="10" font-weight="400" fill="#b4bfcd" stroke="#b4bfcd" stroke-width="0.35" text-anchor="middle">80</text>
<text x="781.9" y="883" font-family="Liberation Sans" font-size="10" font-weight="400" fill="#b4bfcd" stroke="#b4bfcd" stroke-width="0.35" text-anchor="middle">100</text>
<text x="850.8" y="883" font-family="Liberation Sans" font-size="10" font-weight="400" fill="#b4bfcd" stroke="#b4bfcd" stroke-width="0.35" text-anchor="middle">200</text>
<text x="891.1" y="883" font-family="Liberation Sans" font-size="10" font-weight="400" fill="#b4bfcd" stroke="#b4bfcd" stroke-width="0.35" text-anchor="middle">300</text>
<text x="919.7" y="883" font-family="Liberation Sans" font-size="10" font-weight="400" fill="#b4bfcd" stroke="#b4bfcd" stroke-width="0.35" text-anchor="middle">400</text>
<text x="941.8" y="883" font-family="Liberation Sans" font-size="10" font-weight="400" fill="#b4bfcd" stroke="#b4bfcd" stroke-width="0.35" text-anchor="middle">500</text>
<text x="988.6" y="883" font-family="Liberation Sans" font-size="10" font-weight="400" fill="#b4bfcd" stroke="#b4bfcd" stroke-width="0.35" text-anchor="middle">800</text>
<text x="1010.7" y="883" font-family="Liberation Sans" font-size="10" font-weight="400" fill="#b4bfcd" stroke="#b4bfcd" stroke-width="0.35" text-anchor="middle">1k</text>
<text x="1079.6" y="883" font-family="Liberation Sans" font-size="10" font-weight="400" fill="#b4bfcd" stroke="#b4bfcd" stroke-width="0.35" text-anchor="middle">2k</text>
<text x="1119.9" y="883" font-family="Liberation Sans" font-size="10" font-weight="400" fill="#b4bfcd" stroke="#b4bfcd" stroke-width="0.35" text-anchor="middle">3k</text>
<text x="1148.5" y="883" font-family="Liberation Sans" font-size="10" font-weight="400" fill="#b4bfcd" stroke="#b4bfcd" stroke-width="0.35" text-anchor="middle">4k</text>
<text x="1188.8" y="883" font-family="Liberation Sans" font-size="10" font-weight="400" fill="#b4bfcd" stroke="#b4bfcd" stroke-width="0.35" text-anchor="middle">6k</text>
<text x="1217.4" y="883" font-family="Liberation Sans" font-size="10" font-weight="400" fill="#b4bfcd" stroke="#b4bfcd" stroke-width="0.35" text-anchor="middle">8k</text>
<text x="1239.5" y="883" font-family="Liberation Sans" font-size="10" font-weight="400" fill="#b4bfcd" stroke="#b4bfcd" stroke-width="0.35" text-anchor="middle">10k</text>
<text x="1310.0" y="883" font-family="Liberation Sans" font-size="10" font-weight="400" fill="#b4bfcd" stroke="#b4bfcd" stroke-width="0.35" text-anchor="end">20k</text>
<text x="614" y="781.9" font-family="Liberation Sans" font-size="9.8" fill="#6a7a90" text-anchor="end">30</text>
<text x="1332" y="781.9" font-family="Liberation Sans" font-size="9.8" fill="#6a7a90" text-anchor="end">30</text>
<text x="614" y="797.5" font-family="Liberation Sans" font-size="9.8" fill="#6a7a90" text-anchor="end">25</text>
<text x="1332" y="797.5" font-family="Liberation Sans" font-size="9.8" fill="#6a7a90" text-anchor="end">25</text>
<text x="614" y="813.0" font-family="Liberation Sans" font-size="9.8" fill="#6a7a90" text-anchor="end">20</text>
<text x="1332" y="813.0" font-family="Liberation Sans" font-size="9.8" fill="#6a7a90" text-anchor="end">20</text>
<text x="614" y="828.6" font-family="Liberation Sans" font-size="9.8" fill="#6a7a90" text-anchor="end">15</text>
<text x="1332" y="828.6" font-family="Liberation Sans" font-size="9.8" fill="#6a7a90" text-anchor="end">15</text>
<text x="614" y="844.1" font-family="Liberation Sans" font-size="9.8" fill="#6a7a90" text-anchor="end">10</text>
<text x="1332" y="844.1" font-family="Liberation Sans" font-size="9.8" fill="#6a7a90" text-anchor="end">10</text>
<text x="614" y="859.7" font-family="Liberation Sans" font-size="9.8" fill="#6a7a90" text-anchor="end">5</text>
<text x="1332" y="859.7" font-family="Liberation Sans" font-size="9.8" fill="#6a7a90" text-anchor="end">5</text>
<text x="614" y="875.2" font-family="Liberation Sans" font-size="9.8" fill="#6a7a90" text-anchor="end">0</text>
<text x="1332" y="875.2" font-family="Liberation Sans" font-size="9.8" fill="#6a7a90" text-anchor="end">0</text>
<text x="614" y="890.8" font-family="Liberation Sans" font-size="9.8" fill="#6a7a90" text-anchor="end">5</text>
<text x="1332" y="890.8" font-family="Liberation Sans" font-size="9.8" fill="#6a7a90" text-anchor="end">5</text>
<text x="614" y="906.3" font-family="Liberation Sans" font-size="9.8" fill="#6a7a90" text-anchor="end">10</text>
<text x="1332" y="906.3" font-family="Liberation Sans" font-size="9.8" fill="#6a7a90" text-anchor="end">10</text>
<text x="614" y="921.9" font-family="Liberation Sans" font-size="9.8" fill="#6a7a90" text-anchor="end">15</text>
<text x="1332" y="921.9" font-family="Liberation Sans" font-size="9.8" fill="#6a7a90" text-anchor="end">15</text>
<text x="614" y="937.4" font-family="Liberation Sans" font-size="9.8" fill="#6a7a90" text-anchor="end">20</text>
<text x="1332" y="937.4" font-family="Liberation Sans" font-size="9.8" fill="#6a7a90" text-anchor="end">20</text>
<text x="614" y="953.0" font-family="Liberation Sans" font-size="9.8" fill="#6a7a90" text-anchor="end">25</text>
<text x="1332" y="953.0" font-family="Liberation Sans" font-size="9.8" fill="#6a7a90" text-anchor="end">25</text>
<text x="614" y="968.5" font-family="Liberation Sans" font-size="9.8" fill="#6a7a90" text-anchor="end">30</text>
<text x="1332" y="968.5" font-family="Liberation Sans" font-size="9.8" fill="#6a7a90" text-anchor="end">30</text>
<path d="M605.5 764.8 H612.5 M609 761.3 V768.3" stroke="#6a7a90" stroke-width="1.3"/><path d="M606 972.5 H612" stroke="#6a7a90" stroke-width="1.3"/>
<path d="M1322 763 H1329 M1325.5 759.5 V766.5" stroke="#6a7a90" stroke-width="1.3"/><path d="M1323 973 H1329" stroke="#6a7a90" stroke-width="1.3"/>
<g fill="none" stroke="#8fa6c2" stroke-width="1.2" stroke-linecap="round">
<path d="M642.5 765 Q650 754.5 653 753.5 H657.5"/>
<path d="M732 753.5 H740 L746 759 H750.5 M746 759 L740 764.5 H732"/>
<path d="M818.8 759 H824.6 M837.0 759 H842.8 M824.6 759 L829.6 753 Q830.8 751.8 832.0 753 L837.0 759 L832.0 765 Q830.8 766.2 829.6 765 Z"/>
<path d="M908.4 759 H914.2 M926.6 759 H932.4 M914.2 759 L919.2 753 Q920.4 751.8 921.6 753 L926.6 759 L921.6 765 Q920.4 766.2 919.2 765 Z"/>
<path d="M998.0 759 H1003.8 M1016.2 759 H1022.0 M1003.8 759 L1008.8 753 Q1010.0 751.8 1011.2 753 L1016.2 759 L1011.2 765 Q1010.0 766.2 1008.8 765 Z"/>
<path d="M1088.0 759 H1093.8 M1106.2 759 H1112.0 M1093.8 759 L1098.8 753 Q1100.0 751.8 1101.2 753 L1106.2 759 L1101.2 765 Q1100.0 766.2 1098.8 765 Z"/>
<path d="M1199 753.5 H1192 L1186 759 H1181.5 M1186 759 L1192 764.5 H1199"/>
<path d="M1272 753.5 H1276 Q1279 754.5 1287 764"/>
</g>
<rect x="1350.6" y="777.6" width="1" height="188" fill="#3e4c5e"/>
<path d="M1338.5 778.5 H1341.5 M1359.5 778.5 H1362.5" stroke="#6a7a90" stroke-width="1"/>
<path d="M1338.5 871.7 H1341.5 M1359.5 871.7 H1362.5" stroke="#6a7a90" stroke-width="1"/>
<path d="M1338.5 965 H1341.5 M1359.5 965 H1362.5" stroke="#6a7a90" stroke-width="1"/>
<circle cx="1351.2" cy="871.6" r="6.6" fill="#22364e" stroke="#0c0c0c" stroke-width="2.2"/><circle cx="1351.2" cy="871.6" r="5.4" fill="none" stroke="#8fb0d8" stroke-width="1"/><rect x="1350.7" y="869" width="1" height="5" fill="#8fb0d8"/>
<text x="1348.5" y="988.5" font-family="Liberation Sans" font-size="11.5" fill="#7d8da2" text-anchor="middle">Gain</text>
<rect x="621.6" y="974.2" width="75.9" height="20.4" rx="2.5" fill="#1a2839"/>
<text x="659.5" y="988" font-family="Liberation Sans" font-size="11.5" fill="#8595aa" text-anchor="middle">Analyzer</text>
</svg>
</body></html>
